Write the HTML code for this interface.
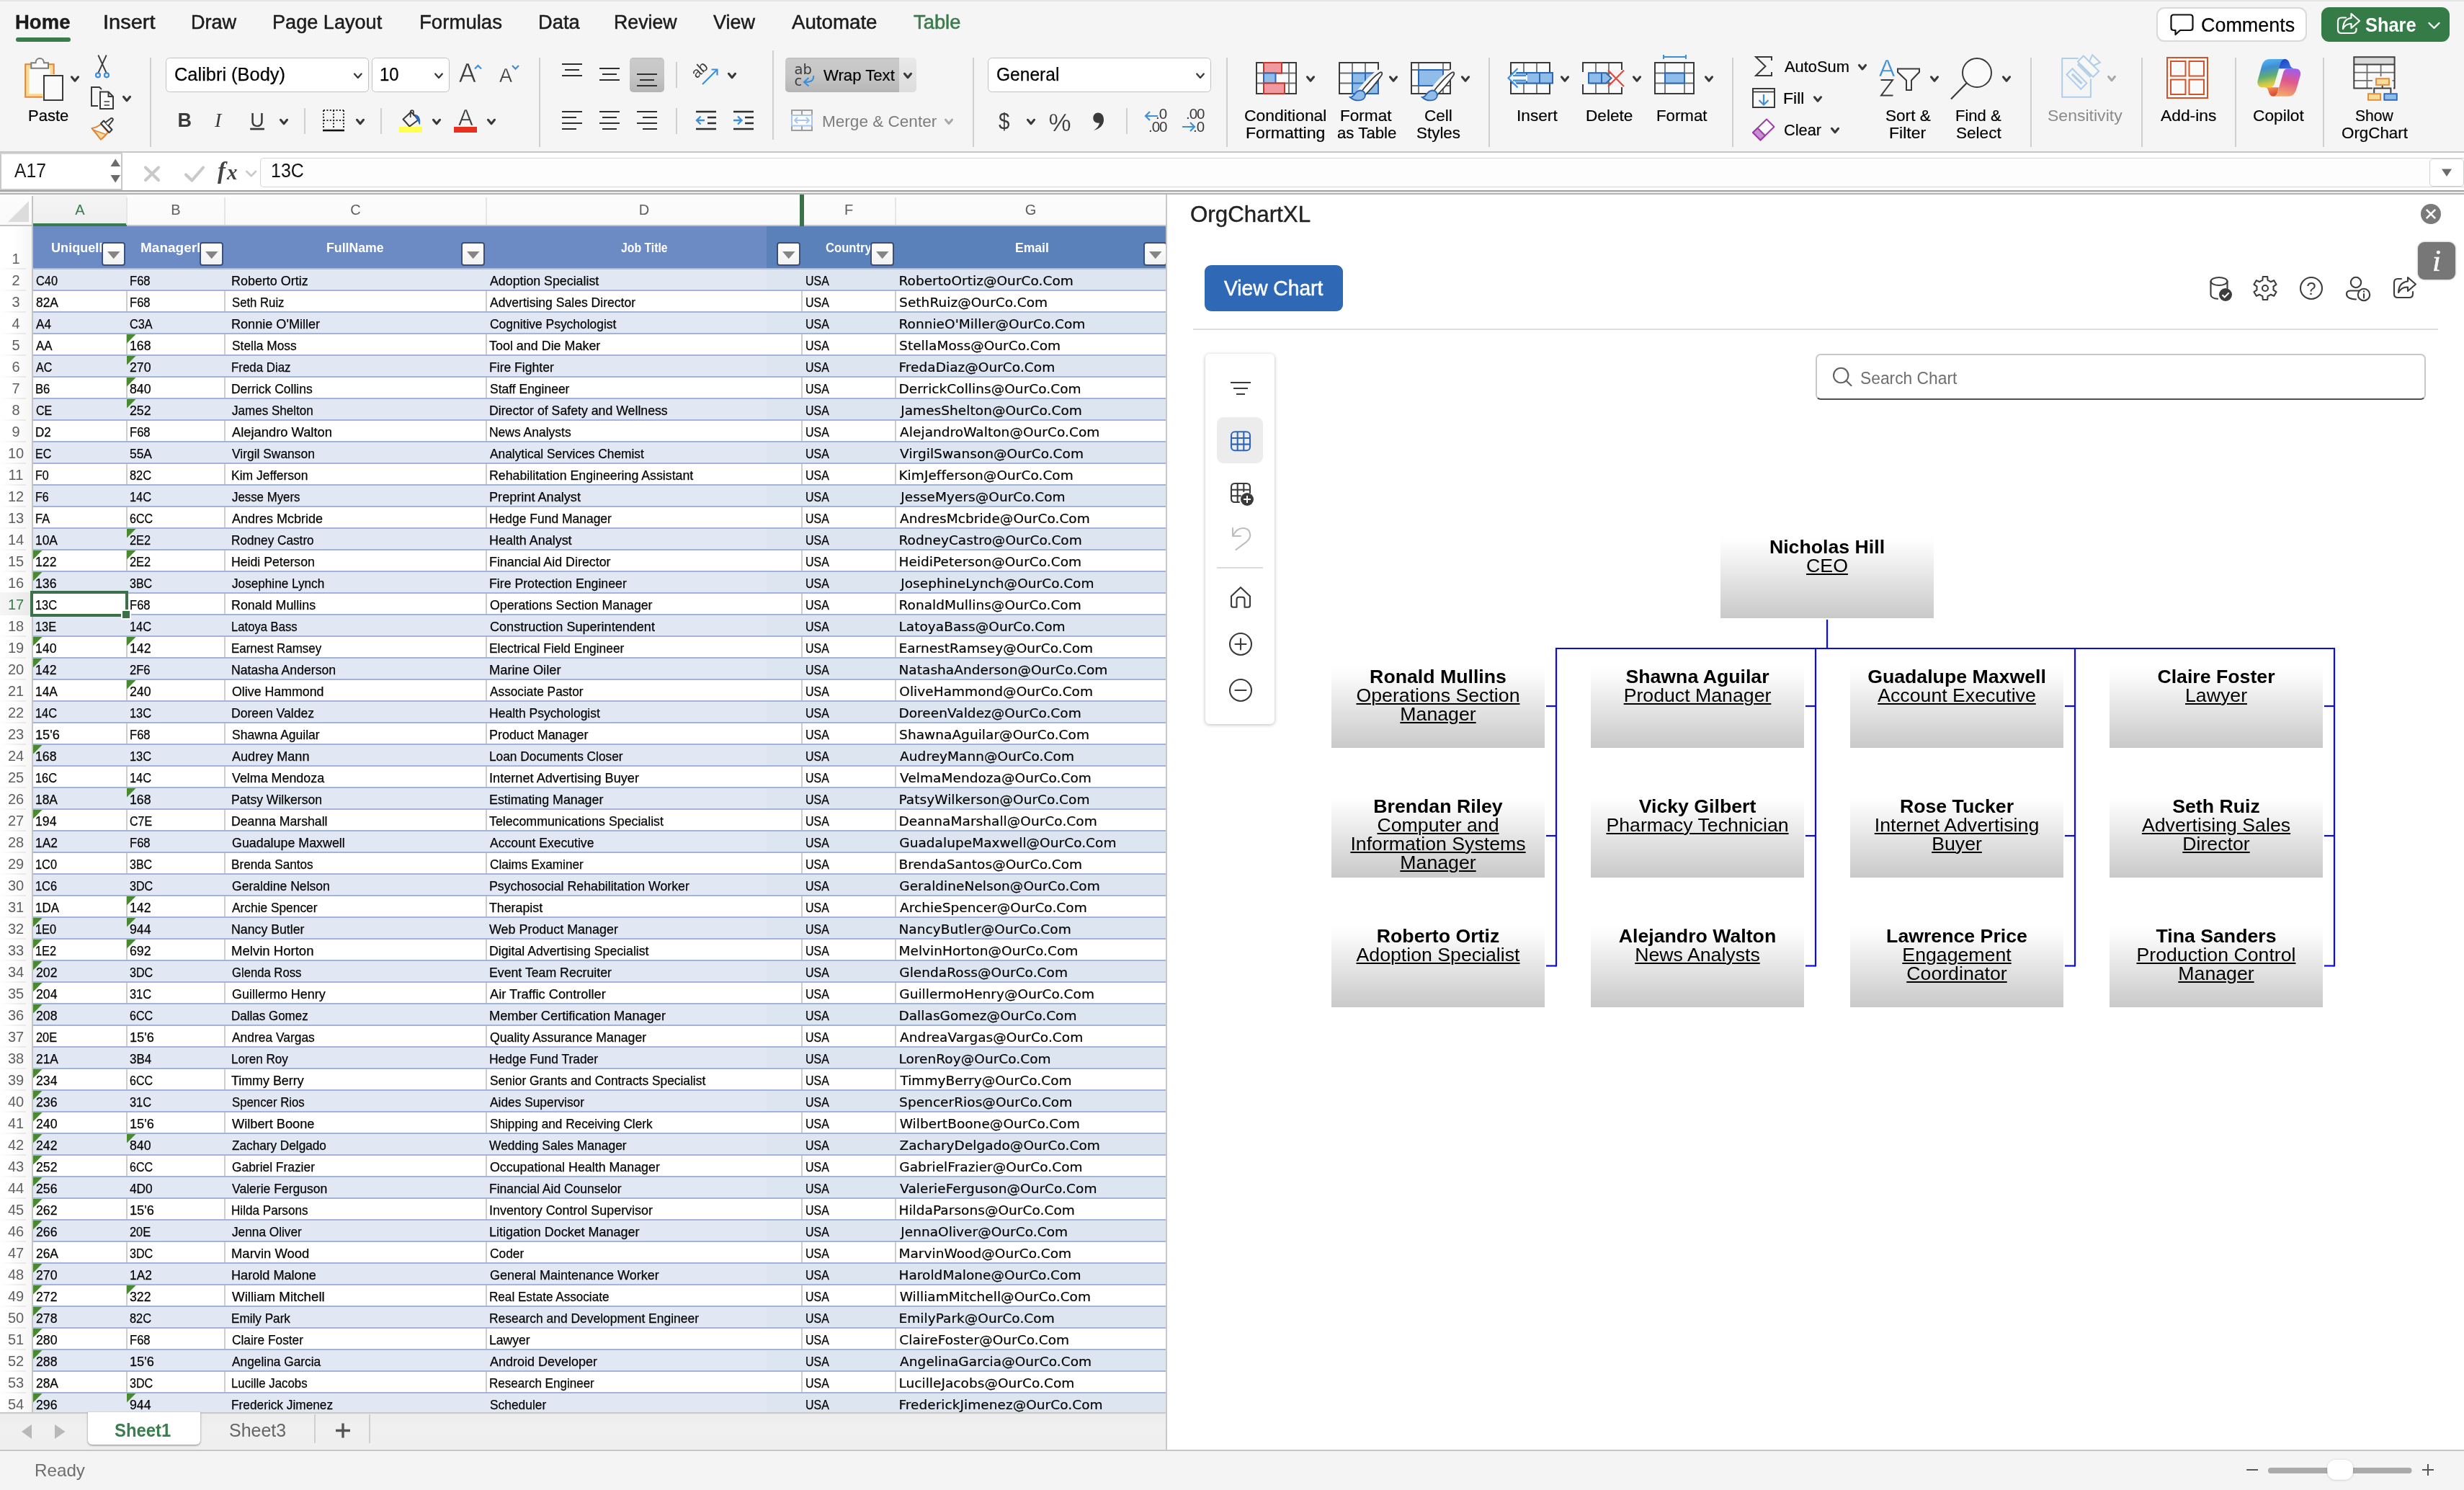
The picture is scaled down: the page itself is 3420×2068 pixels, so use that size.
<!DOCTYPE html>
<html lang="en"><head><meta charset="utf-8"><title>OrgChartXL - Excel</title>
<style>html,body{margin:0;padding:0;}body{width:3420px;height:2068px;position:relative;overflow:hidden;background:#fff;font-family:"Liberation Sans",sans-serif;}#app{position:absolute;left:0;top:0;width:3420px;height:2068px;overflow:hidden;will-change:transform;}svg{display:block;overflow:visible}</style></head>
<body>
<div id="app">
<div style="position:absolute;left:0px;top:0px;width:3420px;height:210px;background:#f5f5f5;"></div>
<div style="position:absolute;left:0px;top:0px;width:3420px;height:2px;background:#e6e6e6;"></div>
<div style="position:absolute;top:18.000px;font-size:27px;line-height:27px;color:#1c1c1c;white-space:nowrap;font-weight:700;left:21.26px;-webkit-text-stroke:0.4px #1c1c1c;transform:scaleX(1.0190);transform-origin:0 50%;">Home</div>
<div style="position:absolute;top:18.000px;font-size:27px;line-height:27px;color:#1c1c1c;white-space:nowrap;left:142.69px;-webkit-text-stroke:0.5px #1c1c1c;transform:scaleX(1.0734);transform-origin:0 50%;">Insert</div>
<div style="position:absolute;top:18.000px;font-size:27px;line-height:27px;color:#1c1c1c;white-space:nowrap;left:265.24px;-webkit-text-stroke:0.5px #1c1c1c;transform:scaleX(1.0019);transform-origin:0 50%;">Draw</div>
<div style="position:absolute;top:18.000px;font-size:27px;line-height:27px;color:#1c1c1c;white-space:nowrap;left:378.03px;-webkit-text-stroke:0.5px #1c1c1c;transform:scaleX(1.0040);transform-origin:0 50%;">Page Layout</div>
<div style="position:absolute;top:18.000px;font-size:27px;line-height:27px;color:#1c1c1c;white-space:nowrap;left:581.79px;-webkit-text-stroke:0.5px #1c1c1c;transform:scaleX(1.0221);transform-origin:0 50%;">Formulas</div>
<div style="position:absolute;top:18.000px;font-size:27px;line-height:27px;color:#1c1c1c;white-space:nowrap;left:747.22px;-webkit-text-stroke:0.5px #1c1c1c;transform:scaleX(1.0108);transform-origin:0 50%;">Data</div>
<div style="position:absolute;top:18.000px;font-size:27px;line-height:27px;color:#1c1c1c;white-space:nowrap;left:852.26px;-webkit-text-stroke:0.5px #1c1c1c;transform:scaleX(0.9896);transform-origin:0 50%;">Review</div>
<div style="position:absolute;top:18.000px;font-size:27px;line-height:27px;color:#1c1c1c;white-space:nowrap;left:990.07px;-webkit-text-stroke:0.5px #1c1c1c;transform:scaleX(0.9997);transform-origin:0 50%;">View</div>
<div style="position:absolute;top:18.000px;font-size:27px;line-height:27px;color:#1c1c1c;white-space:nowrap;left:1099.40px;-webkit-text-stroke:0.5px #1c1c1c;transform:scaleX(1.0250);transform-origin:0 50%;">Automate</div>
<div style="position:absolute;top:18.000px;font-size:27px;line-height:27px;color:#3a7c4c;white-space:nowrap;left:1267.60px;-webkit-text-stroke:0.6px #3a7c4c;transform:scaleX(1.0131);transform-origin:0 50%;">Table</div>
<div style="position:absolute;left:22px;top:52px;width:76px;height:6px;background:#3a7c4c;border-radius:3px;"></div>
<div style="position:absolute;left:2993px;top:10px;width:209px;height:48px;box-sizing:border-box;border:2px solid #d9d9d9;border-radius:11px;background:#fff;"></div>
<div style="position:absolute;top:21.000px;font-size:27.5px;line-height:27.5px;color:#000;white-space:nowrap;left:3054.50px;-webkit-text-stroke:0.2px #000;transform:scaleX(0.9791);transform-origin:0 50%;">Comments</div>
<div style="position:absolute;left:3222px;top:10px;width:178px;height:48px;border-radius:11px;background:#347b48;"></div>
<div style="position:absolute;top:21.000px;font-size:27.5px;line-height:27.5px;color:#fff;white-space:nowrap;font-weight:700;left:3283.24px;transform:scaleX(0.9242);transform-origin:0 50%;">Share</div>
<div style="position:absolute;left:208px;top:80px;width:2px;height:124px;background:#d0d0d0;"></div>
<div style="position:absolute;left:422px;top:150px;width:2px;height:36px;background:#d0d0d0;"></div>
<div style="position:absolute;left:528px;top:150px;width:2px;height:36px;background:#d0d0d0;"></div>
<div style="position:absolute;left:748px;top:80px;width:2px;height:124px;background:#d0d0d0;"></div>
<div style="position:absolute;left:938px;top:86px;width:2px;height:36px;background:#d0d0d0;"></div>
<div style="position:absolute;left:938px;top:150px;width:2px;height:36px;background:#d0d0d0;"></div>
<div style="position:absolute;left:1072px;top:70px;width:2px;height:124px;background:#d0d0d0;"></div>
<div style="position:absolute;left:1350px;top:80px;width:2px;height:124px;background:#d0d0d0;"></div>
<div style="position:absolute;left:1563px;top:150px;width:2px;height:36px;background:#d0d0d0;"></div>
<div style="position:absolute;left:1702px;top:80px;width:2px;height:124px;background:#d0d0d0;"></div>
<div style="position:absolute;left:2066px;top:80px;width:2px;height:124px;background:#d0d0d0;"></div>
<div style="position:absolute;left:2404px;top:80px;width:2px;height:124px;background:#d0d0d0;"></div>
<div style="position:absolute;left:2818px;top:80px;width:2px;height:124px;background:#d0d0d0;"></div>
<div style="position:absolute;left:2972px;top:80px;width:2px;height:124px;background:#d0d0d0;"></div>
<div style="position:absolute;left:3102px;top:80px;width:2px;height:124px;background:#d0d0d0;"></div>
<div style="position:absolute;left:3224px;top:80px;width:2px;height:124px;background:#d0d0d0;"></div>
<div style="position:absolute;left:230px;top:80px;width:282px;height:48px;box-sizing:border-box;border:1.5px solid #c2c2c2;border-radius:5.5px;background:#fff;"></div>
<div style="position:absolute;left:516px;top:80px;width:108px;height:48px;box-sizing:border-box;border:1.5px solid #c2c2c2;border-radius:5.5px;background:#fff;"></div>
<div style="position:absolute;left:1371px;top:80px;width:310px;height:48px;box-sizing:border-box;border:1.5px solid #c2c2c2;border-radius:5.5px;background:#fff;"></div>
<div style="position:absolute;top:91.000px;font-size:25px;line-height:25px;color:#000;white-space:nowrap;left:242.00px;-webkit-text-stroke:0.25px #000;transform:scaleX(1.0170);transform-origin:0 50%;">Calibri (Body)</div>
<div style="position:absolute;top:91.000px;font-size:25px;line-height:25px;color:#000;white-space:nowrap;left:527.09px;-webkit-text-stroke:0.25px #000;transform:scaleX(0.9540);transform-origin:0 50%;">10</div>
<div style="position:absolute;top:91.000px;font-size:25px;line-height:25px;color:#000;white-space:nowrap;left:1383.05px;-webkit-text-stroke:0.25px #000;transform:scaleX(0.9820);transform-origin:0 50%;">General</div>
<div style="position:absolute;left:874px;top:80px;width:48px;height:48px;border-radius:5px;background:linear-gradient(#bdbdbd 0,#cacaca 6%,#c6c6c6 50%,#b5b5b5 100%);"></div>
<div style="position:absolute;left:1090px;top:80px;width:182px;height:48px;border-radius:5px;background:linear-gradient(#e9e9e9,#dcdcdc);"></div>
<div style="position:absolute;left:1090px;top:80px;width:158px;height:48px;border-radius:5px 0 0 5px;background:linear-gradient(#bdbdbd 0,#cacaca 6%,#c6c6c6 50%,#b5b5b5 100%);"></div>
<div style="position:absolute;top:94.000px;font-size:22px;line-height:22px;color:#000;white-space:nowrap;left:1143.14px;-webkit-text-stroke:0.2px #000;transform:scaleX(1.0061);transform-origin:0 50%;">Wrap Text</div>
<div style="position:absolute;top:158.000px;font-size:22px;line-height:22px;color:#7d7d7d;white-space:nowrap;left:1141.20px;transform:scaleX(1.0253);transform-origin:0 50%;">Merge &amp; Center</div>
<div style="position:absolute;top:150.000px;font-size:22px;line-height:22px;color:#000;white-space:nowrap;left:39.49px;-webkit-text-stroke:0.2px #000;transform:scaleX(1.0007);transform-origin:0 50%;">Paste</div>
<div style="position:absolute;top:150.000px;font-size:22px;line-height:22px;color:#000;white-space:nowrap;left:1726.91px;-webkit-text-stroke:0.2px #000;transform:scaleX(1.0394);transform-origin:0 50%;">Conditional</div>
<div style="position:absolute;top:174.000px;font-size:22px;line-height:22px;color:#000;white-space:nowrap;left:1728.80px;-webkit-text-stroke:0.2px #000;transform:scaleX(1.0503);transform-origin:0 50%;">Formatting</div>
<div style="position:absolute;top:150.000px;font-size:22px;line-height:22px;color:#000;white-space:nowrap;left:1860.44px;-webkit-text-stroke:0.2px #000;transform:scaleX(1.0257);transform-origin:0 50%;">Format</div>
<div style="position:absolute;top:174.000px;font-size:22px;line-height:22px;color:#000;white-space:nowrap;left:1856.36px;-webkit-text-stroke:0.2px #000;transform:scaleX(1.0108);transform-origin:0 50%;">as Table</div>
<div style="position:absolute;top:150.000px;font-size:22px;line-height:22px;color:#000;white-space:nowrap;left:1977.13px;-webkit-text-stroke:0.2px #000;transform:scaleX(1.0224);transform-origin:0 50%;">Cell</div>
<div style="position:absolute;top:174.000px;font-size:22px;line-height:22px;color:#000;white-space:nowrap;left:1966.04px;-webkit-text-stroke:0.2px #000;transform:scaleX(1.0191);transform-origin:0 50%;">Styles</div>
<div style="position:absolute;top:150.000px;font-size:22px;line-height:22px;color:#000;white-space:nowrap;left:2105.21px;-webkit-text-stroke:0.2px #000;transform:scaleX(1.0301);transform-origin:0 50%;">Insert</div>
<div style="position:absolute;top:150.000px;font-size:22px;line-height:22px;color:#000;white-space:nowrap;left:2201.44px;-webkit-text-stroke:0.2px #000;transform:scaleX(1.0275);transform-origin:0 50%;">Delete</div>
<div style="position:absolute;top:150.000px;font-size:22px;line-height:22px;color:#000;white-space:nowrap;left:2299.47px;-webkit-text-stroke:0.2px #000;transform:scaleX(1.0109);transform-origin:0 50%;">Format</div>
<div style="position:absolute;top:82.000px;font-size:22px;line-height:22px;color:#000;white-space:nowrap;left:2477.25px;-webkit-text-stroke:0.2px #000;transform:scaleX(0.9933);transform-origin:0 50%;">AutoSum</div>
<div style="position:absolute;top:126.000px;font-size:22px;line-height:22px;color:#000;white-space:nowrap;left:2475.41px;-webkit-text-stroke:0.2px #000;transform:scaleX(1.0459);transform-origin:0 50%;">Fill</div>
<div style="position:absolute;top:170.000px;font-size:22px;line-height:22px;color:#000;white-space:nowrap;left:2476.16px;-webkit-text-stroke:0.2px #000;transform:scaleX(0.9894);transform-origin:0 50%;">Clear</div>
<div style="position:absolute;top:150.000px;font-size:22px;line-height:22px;color:#000;white-space:nowrap;left:2617.03px;-webkit-text-stroke:0.2px #000;transform:scaleX(1.0263);transform-origin:0 50%;">Sort &amp;</div>
<div style="position:absolute;top:174.000px;font-size:22px;line-height:22px;color:#000;white-space:nowrap;left:2622.41px;-webkit-text-stroke:0.2px #000;transform:scaleX(1.0481);transform-origin:0 50%;">Filter</div>
<div style="position:absolute;top:150.000px;font-size:22px;line-height:22px;color:#000;white-space:nowrap;left:2714.49px;-webkit-text-stroke:0.2px #000;transform:scaleX(1.0002);transform-origin:0 50%;">Find &amp;</div>
<div style="position:absolute;top:174.000px;font-size:22px;line-height:22px;color:#000;white-space:nowrap;left:2715.23px;-webkit-text-stroke:0.2px #000;transform:scaleX(1.0259);transform-origin:0 50%;">Select</div>
<div style="position:absolute;top:150.000px;font-size:22px;line-height:22px;color:#000;white-space:nowrap;left:2999.25px;-webkit-text-stroke:0.2px #000;transform:scaleX(1.0364);transform-origin:0 50%;">Add-ins</div>
<div style="position:absolute;top:150.000px;font-size:22px;line-height:22px;color:#000;white-space:nowrap;left:3127.11px;-webkit-text-stroke:0.2px #000;transform:scaleX(1.0341);transform-origin:0 50%;">Copilot</div>
<div style="position:absolute;top:150.000px;font-size:22px;line-height:22px;color:#000;white-space:nowrap;left:3269.30px;-webkit-text-stroke:0.2px #000;transform:scaleX(0.9608);transform-origin:0 50%;">Show</div>
<div style="position:absolute;top:174.000px;font-size:22px;line-height:22px;color:#000;white-space:nowrap;left:3249.94px;-webkit-text-stroke:0.2px #000;transform:scaleX(1.0166);transform-origin:0 50%;">OrgChart</div>
<div style="position:absolute;top:150.000px;font-size:22px;line-height:22px;color:#8b8b8b;white-space:nowrap;left:2842.36px;transform:scaleX(1.0468);transform-origin:0 50%;">Sensitivity</div>
<svg style="position:absolute;left:0;top:0;pointer-events:none" width="3420" height="212" viewBox="0 0 3420 212"><rect x="35.2" y="89.2" width="39.5" height="45.5" fill="#f6dc96" stroke="#e0863c" stroke-width="2" rx="0" /><rect x="40.5" y="95" width="29" height="35" fill="#fafafa" stroke="none" stroke-width="0" rx="0" /><path d="M43.3,94.7V87.2H49.5C49.5,83.5 52,81 55.2,81C58.4,81 61,83.5 61,87.2H67V94.7Z" stroke="#7c7c7c" stroke-width="2" fill="#fafafa" /><rect x="59" y="103" width="30" height="38" fill="#f5f5f5" stroke="none" stroke-width="0" rx="0" /><rect x="61" y="105" width="26" height="34" fill="#fafafa" stroke="#3a3a3a" stroke-width="2" rx="0" /><polyline points="99.5,106.8 104.0,112.2 108.5,106.8" fill="none" stroke="#383838" stroke-width="3.1" stroke-linecap="round" stroke-linejoin="round"/><path d="M136.3,76.5L147.8,101.5M147.7,76.5L136.2,101.5" stroke="#3a3a3a" stroke-width="1.8" fill="none" /><circle cx="136" cy="104.3" r="3" stroke="#3e8ed8" stroke-width="2.2" fill="none"/><circle cx="148" cy="104.3" r="3" stroke="#3e8ed8" stroke-width="2.2" fill="none"/><path d="M141,124L138,121H127V147H136" stroke="#3a3a3a" stroke-width="2" fill="none" /><path d="M139,127.5H150.5L157,134V151H139Z" stroke="#3a3a3a" stroke-width="2" fill="#fafafa" /><path d="M150.5,127.5V134H157" stroke="#3a3a3a" stroke-width="2" fill="none" /><path d="M144.5,141H152M144.5,146H152" stroke="#6e6e6e" stroke-width="1.8" fill="none" /><polyline points="171.5,134.3 176.0,139.7 180.5,134.3" fill="none" stroke="#383838" stroke-width="3.1" stroke-linecap="round" stroke-linejoin="round"/><path d="M127.5,178C133,177 137,175 140.5,172L150,183.5C147,187 143.5,191 140,193.5Z" stroke="#e0863c" stroke-width="2" fill="#fafafa" stroke-linejoin="round"/><path d="M130,180.5L147,186.5L140,193.5Z" stroke="#e0863c" stroke-width="1.5" fill="#f6dc96" /><path d="M140,171.5L144,167.5L155.5,180L151.5,184Z" stroke="#3a3a3a" stroke-width="2" fill="#fafafa" stroke-linejoin="round"/><path d="M146.5,170L154,164.2C155.5,163.3 157.6,165.2 156.6,166.8L150.5,174.5" stroke="#3a3a3a" stroke-width="2" fill="#fafafa" stroke-linejoin="round"/><polyline points="492.0,102.5 496.8,107.9 501.6,102.5" fill="none" stroke="#383838" stroke-width="2.3" stroke-linecap="round" stroke-linejoin="round"/><polyline points="604.2,102.5 609.0,107.9 613.8,102.5" fill="none" stroke="#383838" stroke-width="2.3" stroke-linecap="round" stroke-linejoin="round"/><text x="246.5" y="175.7" font-size="27" fill="#3a3a3a" font-weight="700" text-anchor="start" font-family="Liberation Sans"  >B</text><text x="298" y="175.7" font-size="28" fill="#3a3a3a" font-weight="400" text-anchor="start" font-family="Liberation Serif" font-style="italic" >I</text><text x="347.2" y="175.7" font-size="27" fill="#3a3a3a" font-weight="400" text-anchor="start" font-family="Liberation Sans"  text-decoration="underline">U</text><path d="M348,179H367" stroke="#3a3a3a" stroke-width="2" fill="none" /><polyline points="389.5,166.3 394.0,171.7 398.5,166.3" fill="none" stroke="#383838" stroke-width="3.1" stroke-linecap="round" stroke-linejoin="round"/><path d="M449,153H477M449,167H477M449,153V179M463,153V179M477,153V179" stroke="#222" stroke-width="2" fill="none" stroke-dasharray="2 2.4"/><path d="M448,181H478" stroke="#111" stroke-width="2.6" fill="none" /><polyline points="495.5,166.3 500.0,171.7 504.5,166.3" fill="none" stroke="#383838" stroke-width="3.1" stroke-linecap="round" stroke-linejoin="round"/><path d="M569.7,163V155.2C569.7,152.3 574,152.3 574,155.2V160.5" stroke="#3a3a3a" stroke-width="1.7" fill="none" /><path d="M559.5,165.5L570.5,155.5L581,166L568.5,175.5Z" stroke="#3a3a3a" stroke-width="2" fill="none" stroke-linejoin="round"/><path d="M576.5,159.5C581,160 583.5,165 582.5,172.5C581,168 580,166 577.5,163.5Z" stroke="#2b68b8" stroke-width="1.2" fill="#2b68b8" /><rect x="554" y="176" width="32" height="8" fill="#ffff4d" stroke="none" stroke-width="0" rx="0" /><polyline points="601.5,166.3 606.0,171.7 610.5,166.3" fill="none" stroke="#383838" stroke-width="3.1" stroke-linecap="round" stroke-linejoin="round"/><text x="646.3" y="174" font-size="31" fill="#3a3a3a" font-weight="400" text-anchor="middle" font-family="Liberation Sans"  stroke="#f5f5f5" stroke-width="0.5">A</text><rect x="630" y="176" width="32" height="8" fill="#e8301f" stroke="none" stroke-width="0" rx="0" /><polyline points="677.5,166.3 682.0,171.7 686.5,166.3" fill="none" stroke="#383838" stroke-width="3.1" stroke-linecap="round" stroke-linejoin="round"/><text x="648.8" y="113.6" font-size="36" fill="#3a3a3a" font-weight="400" text-anchor="middle" font-family="Liberation Sans"  stroke="#f5f5f5" stroke-width="0.7">A</text><text x="702" y="113.6" font-size="27" fill="#3a3a3a" font-weight="400" text-anchor="middle" font-family="Liberation Sans"  stroke="#f5f5f5" stroke-width="0.3">A</text><polyline points="659,95.6 663.5,91 668,95.6" fill="none" stroke="#3e8ed8" stroke-width="2.2"/><polyline points="711,91 715.5,95.6 720,91" fill="none" stroke="#3e8ed8" stroke-width="2.2"/><path d="M780,89H808M784,97H804M780,105H808" stroke="#2f2f2f" stroke-width="2.1" fill="none" /><path d="M832,95H860M836,103H856M832,111H860" stroke="#2f2f2f" stroke-width="2.1" fill="none" /><path d="M884,103H912M888,111H908M884,119H912" stroke="#2f2f2f" stroke-width="2.1" fill="none" /><path d="M780,155H808M780,163H800M780,171H808M780,179H800" stroke="#2f2f2f" stroke-width="2.1" fill="none" /><path d="M832,155H860M836,163H856M832,171H860M836,179H856" stroke="#2f2f2f" stroke-width="2.1" fill="none" /><path d="M884,155H912M892,163H912M884,171H912M892,179H912" stroke="#2f2f2f" stroke-width="2.1" fill="none" /><g transform="translate(967,109.5) rotate(-42)"><text x="0" y="0" font-size="20.5" fill="#3a3a3a" font-weight="400" text-anchor="start" font-family="Liberation Sans"  >ab</text></g><path d="M975,117L995,97" stroke="#3e8ed8" stroke-width="2.2" fill="none" /><path d="M987.5,96.5H995.5V104.5" stroke="#3e8ed8" stroke-width="2.2" fill="none" /><polyline points="1011.5,102.3 1016.0,107.7 1020.5,102.3" fill="none" stroke="#383838" stroke-width="3.1" stroke-linecap="round" stroke-linejoin="round"/><path d="M966,155H994M982,163H994M982,171H994M966,179H994" stroke="#2f2f2f" stroke-width="2.3" fill="none" /><path d="M978,167H967.5M972.5,161.5L967,167L972.5,172.5" stroke="#3e8ed8" stroke-width="2.3" fill="none" /><path d="M1018,155H1046M1034,163H1046M1034,171H1046M1018,179H1046" stroke="#2f2f2f" stroke-width="2.3" fill="none" /><path d="M1018,167H1029M1024,161.5L1029.5,167L1024,172.5" stroke="#3e8ed8" stroke-width="2.3" fill="none" /><text x="1102.5" y="103" font-size="19.5" fill="#3a3a3a" font-weight="400" text-anchor="start" font-family="DejaVu Sans"  >ab</text><text x="1102.5" y="118.5" font-size="19.5" fill="#3a3a3a" font-weight="400" text-anchor="start" font-family="DejaVu Sans"  >c</text><path d="M1129,105C1130,111.5 1126,114 1117,114M1122.5,108L1116,114L1122.5,119.5" stroke="#3e8ed8" stroke-width="2.2" fill="none" /><polyline points="1255.5,102.3 1260.0,107.7 1264.5,102.3" fill="none" stroke="#383838" stroke-width="3.1" stroke-linecap="round" stroke-linejoin="round"/><path d="M1099,153H1127V181H1099ZM1113,153V160M1113,174V181" stroke="#9d9d9d" stroke-width="2" fill="none" /><rect x="1099" y="160" width="28" height="14.5" fill="#fdfdfd" stroke="#a9c7e8" stroke-width="2" rx="0" /><path d="M1103,167H1123M1107,163L1103,167L1107,171M1119,163L1123,167L1119,171" stroke="#a9c7e8" stroke-width="2" fill="none" /><polyline points="1312.5,166.2 1317.0,171.5 1321.5,166.2" fill="none" stroke="#a8a8a8" stroke-width="3.0" stroke-linecap="round" stroke-linejoin="round"/><polyline points="1661.2,102.5 1666.0,107.9 1670.8,102.5" fill="none" stroke="#383838" stroke-width="2.3" stroke-linecap="round" stroke-linejoin="round"/><text x="1393.8" y="179" font-size="31" fill="#3a3a3a" font-weight="400" text-anchor="middle" font-family="Liberation Sans"  textLength="15.5" lengthAdjust="spacingAndGlyphs">$</text><polyline points="1426.5,166.3 1431.0,171.7 1435.5,166.3" fill="none" stroke="#383838" stroke-width="3.1" stroke-linecap="round" stroke-linejoin="round"/><text x="1471" y="182.3" font-size="35" fill="#3a3a3a" font-weight="400" text-anchor="middle" font-family="Liberation Sans"  stroke="#f5f5f5" stroke-width="0.25">%</text><path d="M1524,156.5C1529.5,156.5 1532,161 1532,166C1532,173.5 1527,178.5 1518,181C1522.5,178 1525.5,174.5 1526,170.5C1521,171.5 1517.3,168.3 1517.3,164C1517.3,159.8 1520,156.5 1524,156.5Z" stroke="none" stroke-width="0" fill="#3a3a3a" /><text x="1604" y="164.5" font-size="20.5" fill="#3a3a3a" font-weight="400" text-anchor="start" font-family="Liberation Sans"  letter-spacing="-1">.0</text><text x="1594" y="182.5" font-size="20.5" fill="#3a3a3a" font-weight="400" text-anchor="start" font-family="Liberation Sans"  letter-spacing="-1">.00</text><path d="M1607,161H1590.5M1596,155L1590,161L1596,167" stroke="#3e8ed8" stroke-width="2.2" fill="none" /><text x="1646" y="164.5" font-size="20.5" fill="#3a3a3a" font-weight="400" text-anchor="start" font-family="Liberation Sans"  letter-spacing="-1">.00</text><text x="1656" y="182.5" font-size="20.5" fill="#3a3a3a" font-weight="400" text-anchor="start" font-family="Liberation Sans"  letter-spacing="-1">.0</text><path d="M1641,176H1657.5M1652,170L1658,176L1652,182" stroke="#3e8ed8" stroke-width="2.2" fill="none" /><rect x="1744" y="87" width="55" height="43" fill="#fafafa" stroke="none" stroke-width="0" rx="0" /><path d="M1754,87V130M1789,87V130M1744,101.5H1799M1744,115.5H1799" stroke="#6e6e6e" stroke-width="1.8" fill="none" /><rect x="1744" y="87" width="55" height="43" fill="none" stroke="#3a3a3a" stroke-width="2" rx="0" /><rect x="1754" y="87" width="25" height="14.5" fill="#f09aa0" stroke="#c63527" stroke-width="2" rx="0" /><rect x="1754" y="101.5" width="16.5" height="14" fill="#8fbce8" stroke="#2b68b8" stroke-width="2" rx="0" /><rect x="1754" y="115.5" width="29" height="14.5" fill="#f09aa0" stroke="#c63527" stroke-width="2" rx="0" /><polyline points="1814.5,106.8 1819.0,112.2 1823.5,106.8" fill="none" stroke="#383838" stroke-width="3.1" stroke-linecap="round" stroke-linejoin="round"/><rect x="1859" y="87" width="54" height="43" fill="#fafafa" stroke="none" stroke-width="0" rx="0" /><path d="M1877,87V130M1895,87V130M1859,101.5H1913M1859,115.5H1913" stroke="#6e6e6e" stroke-width="1.8" fill="none" /><rect x="1859" y="87" width="54" height="43" fill="none" stroke="#3a3a3a" stroke-width="2" rx="0" /><rect x="1877" y="101.5" width="36" height="28.5" fill="#8fbce8" stroke="#2b68b8" stroke-width="2" rx="0" /><path d="M1895,101.5V130M1877,115.5H1913" stroke="#2b68b8" stroke-width="2" fill="none" /><path d="M1886,132C1895,120 1907,106 1917,101" stroke="#f5f5f5" stroke-width="11" fill="none" stroke-linecap="round"/><path d="M1887.5,130C1896,118 1909,104 1915.5,100.5C1918.5,99.5 1919,102 1917.5,104.5C1911,114 1901,126 1892.5,134Z" stroke="#3a3a3a" stroke-width="1.8" fill="#fff" /><path d="M1874,135C1880,135 1880,126 1888,125.5C1893,125.5 1896,130 1894.5,134.5C1892,140.5 1881,141.5 1874,135Z" stroke="#2b68b8" stroke-width="1.8" fill="#8fbce8" /><polyline points="1929.5,106.8 1934.0,112.2 1938.5,106.8" fill="none" stroke="#383838" stroke-width="3.1" stroke-linecap="round" stroke-linejoin="round"/><rect x="1959" y="87" width="54" height="43" fill="#fafafa" stroke="none" stroke-width="0" rx="0" /><path d="M1969,87V130M2003,87V130M1959,97H2013M1959,119H2013" stroke="#6e6e6e" stroke-width="1.8" fill="none" /><rect x="1959" y="87" width="54" height="43" fill="none" stroke="#3a3a3a" stroke-width="2" rx="0" /><rect x="1969" y="97" width="34" height="22" fill="#8fbce8" stroke="#2b68b8" stroke-width="2" rx="0" /><path d="M1986,132C1995,120 2007,106 2017,101" stroke="#f5f5f5" stroke-width="11" fill="none" stroke-linecap="round"/><path d="M1987.5,130C1996,118 2009,104 2015.5,100.5C2018.5,99.5 2019,102 2017.5,104.5C2011,114 2001,126 1992.5,134Z" stroke="#3a3a3a" stroke-width="1.8" fill="#fff" /><path d="M1974,135C1980,135 1980,126 1988,125.5C1993,125.5 1996,130 1994.5,134.5C1992,140.5 1981,141.5 1974,135Z" stroke="#2b68b8" stroke-width="1.8" fill="#8fbce8" /><polyline points="2029.5,106.8 2034.0,112.2 2038.5,106.8" fill="none" stroke="#383838" stroke-width="3.1" stroke-linecap="round" stroke-linejoin="round"/><rect x="2097" y="87" width="54" height="43" fill="#fafafa" stroke="none" stroke-width="0" rx="0" /><path d="M2115,87V130M2133,87V130M2097,101.5H2151M2097,115.5H2151" stroke="#6e6e6e" stroke-width="1.8" fill="none" /><rect x="2097" y="87" width="54" height="43" fill="none" stroke="#3a3a3a" stroke-width="2" rx="0" /><rect x="2103" y="101" width="52" height="14.5" fill="#8fbce8" stroke="#2b68b8" stroke-width="2" rx="0" /><path d="M2119,101V115.5M2137,101V115.5" stroke="#2b68b8" stroke-width="2" fill="none" /><path d="M2120,104.2H2103L2106,97L2093,108.3L2106,119.6L2103,112.4H2120Z" stroke="none" stroke-width="0" fill="#f5f5f5" /><path d="M2118,105H2100M2118,111.6H2100M2106.5,95L2093.5,108.3L2106.5,121.6" stroke="#3e8ed8" stroke-width="2.2" fill="none" /><polyline points="2167.5,106.8 2172.0,112.2 2176.5,106.8" fill="none" stroke="#383838" stroke-width="3.1" stroke-linecap="round" stroke-linejoin="round"/><rect x="2197" y="87" width="54" height="43" fill="#fafafa" stroke="none" stroke-width="0" rx="0" /><path d="M2215,87V130M2233,87V130M2197,101.5H2251M2197,115.5H2251" stroke="#6e6e6e" stroke-width="1.8" fill="none" /><rect x="2197" y="87" width="54" height="43" fill="none" stroke="#3a3a3a" stroke-width="2" rx="0" /><rect x="2195" y="100" width="12" height="17" fill="#f5f5f5" stroke="none" stroke-width="0" rx="0" /><rect x="2236" y="97" width="18" height="24" fill="#f5f5f5" stroke="none" stroke-width="0" rx="0" /><path d="M2205,101.2H2229L2236.5,108.4L2229,115.6H2205Z" stroke="#2b68b8" stroke-width="2" fill="#8fbce8" /><path d="M2223,101.2V115.6" stroke="#2b68b8" stroke-width="2" fill="none" /><path d="M2232,97.5L2254,120M2254,97.5L2232,120" stroke="#e0483e" stroke-width="2.2" fill="none" /><polyline points="2267.5,106.8 2272.0,112.2 2276.5,106.8" fill="none" stroke="#383838" stroke-width="3.1" stroke-linecap="round" stroke-linejoin="round"/><rect x="2297" y="87" width="54" height="43" fill="#fafafa" stroke="none" stroke-width="0" rx="0" /><path d="M2311,87V130M2338,87V130M2297,101.5H2351M2297,115.5H2351" stroke="#6e6e6e" stroke-width="1.8" fill="none" /><rect x="2297" y="87" width="54" height="43" fill="none" stroke="#3a3a3a" stroke-width="2" rx="0" /><rect x="2311" y="101.5" width="27" height="14" fill="#8fbce8" stroke="#2b68b8" stroke-width="2" rx="0" /><path d="M2309,79H2340M2309,76V82M2340,76V82" stroke="#3e8ed8" stroke-width="2" fill="none" /><polyline points="2367.5,106.8 2372.0,112.2 2376.5,106.8" fill="none" stroke="#383838" stroke-width="3.1" stroke-linecap="round" stroke-linejoin="round"/><path d="M2459,84V79H2437L2450.5,92L2437,105H2459V100" stroke="#3a3a3a" stroke-width="2" fill="none" /><polyline points="2580.5,90.5 2585.0,95.9 2589.5,90.5" fill="none" stroke="#383838" stroke-width="3.1" stroke-linecap="round" stroke-linejoin="round"/><rect x="2433" y="123" width="30" height="26" fill="#fafafa" stroke="#3a3a3a" stroke-width="2" rx="0" /><path d="M2433,127.5H2463" stroke="#3a3a3a" stroke-width="1.8" fill="none" /><path d="M2448,131V145M2441.5,139L2448,145.5L2454.5,139" stroke="#3e8ed8" stroke-width="2.2" fill="none" /><polyline points="2518.5,134.8 2523.0,140.2 2527.5,134.8" fill="none" stroke="#383838" stroke-width="3.1" stroke-linecap="round" stroke-linejoin="round"/><path d="M2433,184L2452,165.5L2462.5,176L2443.5,194.5Z" stroke="#9a3fa6" stroke-width="2" fill="#fafafa" stroke-linejoin="round"/><path d="M2433,184L2439.5,177.8L2450,188.3L2443.5,194.5Z" stroke="#9a3fa6" stroke-width="2" fill="#c88fd2" stroke-linejoin="round"/><polyline points="2542.5,178.3 2547.0,183.7 2551.5,178.3" fill="none" stroke="#383838" stroke-width="3.1" stroke-linecap="round" stroke-linejoin="round"/><text x="2619" y="106" font-size="34" fill="#3e8ed8" font-weight="400" text-anchor="middle" font-family="Liberation Sans"  stroke="#f5f5f5" stroke-width="0.6">A</text><path d="M2610.5,111H2627L2611,132.5H2627.5" stroke="#3a3a3a" stroke-width="2" fill="none" /><path d="M2634,95.5H2664V100L2653,111.5V125H2646V111.5L2634,100Z" stroke="#3a3a3a" stroke-width="2" fill="#fafafa" /><polyline points="2680.5,106.8 2685.0,112.2 2689.5,106.8" fill="none" stroke="#383838" stroke-width="3.1" stroke-linecap="round" stroke-linejoin="round"/><circle cx="2744" cy="101" r="20" stroke="#3a3a3a" stroke-width="2" fill="#fafafa"/><path d="M2729.5,115.5L2708,137.5" stroke="#3a3a3a" stroke-width="2.2" fill="none" /><polyline points="2780.5,106.8 2785.0,112.2 2789.5,106.8" fill="none" stroke="#383838" stroke-width="3.1" stroke-linecap="round" stroke-linejoin="round"/><path d="M2884.6,81H2862.2V134.8H2901.9V109.5" stroke="#b1cee9" stroke-width="2" fill="none" /><path d="M2876.5,95.3L2896.4,115.4L2888.3,123.7L2868.5,103.6Z" stroke="#b1cee9" stroke-width="2" fill="none" /><path d="M2876,102.8L2889.5,116" stroke="#b1cee9" stroke-width="3.2" fill="none" /><path d="M2885.6,86.9L2903.9,104.7L2900.7,107.3L2883.5,90.2Z" stroke="#b1cee9" stroke-width="1" fill="#b7d3ec" /><path d="M2891.8,77.5L2913.3,98.8L2905.2,106.8L2884,85.6Z" stroke="#b1cee9" stroke-width="2" fill="#f8f8f8" /><path d="M2904.2,76.2L2914.9,86.7L2905.8,91L2900.1,85.3Z" stroke="#b1cee9" stroke-width="2" fill="#f8f8f8" /><polyline points="2926.5,106.3 2931.0,111.7 2935.5,106.3" fill="none" stroke="#a8a8a8" stroke-width="3.0" stroke-linecap="round" stroke-linejoin="round"/><rect x="3008" y="80" width="56" height="56" fill="#fafafa" stroke="#d0532a" stroke-width="2" rx="0" /><rect x="3013" y="85" width="20.5" height="20.5" fill="none" stroke="#d0532a" stroke-width="2" rx="0" /><rect x="3013" y="110.5" width="20.5" height="20.5" fill="none" stroke="#d0532a" stroke-width="2" rx="0" /><rect x="3038.5" y="85" width="20.5" height="20.5" fill="none" stroke="#d0532a" stroke-width="2" rx="0" /><rect x="3038.5" y="110.5" width="20.5" height="20.5" fill="none" stroke="#d0532a" stroke-width="2" rx="0" /><defs><linearGradient id="cpa" x1="0.3" y1="0" x2="0.5" y2="1"><stop offset="0" stop-color="#55b6f8"/><stop offset="0.3" stop-color="#3f8fd2"/><stop offset="0.6" stop-color="#5fae70"/><stop offset="0.85" stop-color="#cfca48"/><stop offset="1" stop-color="#f8cd3c"/></linearGradient><linearGradient id="cpb" x1="0.6" y1="0" x2="0.4" y2="1"><stop offset="0" stop-color="#a25cec"/><stop offset="0.45" stop-color="#e0588c"/><stop offset="1" stop-color="#f4ab68"/></linearGradient><linearGradient id="cpc" x1="0" y1="0" x2="1" y2="1"><stop offset="0" stop-color="#1b3bc4"/><stop offset="1" stop-color="#3a78e0"/></linearGradient><linearGradient id="cpd" x1="0" y1="0" x2="0.6" y2="1"><stop offset="0" stop-color="#f6a050"/><stop offset="1" stop-color="#d8443a"/></linearGradient></defs><path d="M3166,82.1H3171C3175,82.1 3176.8,84.5 3178,88.5C3179.2,92.5 3180.5,94.9 3185,95.2H3162Z" fill="url(#cpc)"/><path d="M3145,121.3H3163L3160.6,130C3160,132.5 3158,133.7 3155.5,133.7C3151.5,133.7 3150,131 3148.8,127C3147.8,123.7 3147.2,121.6 3143,121.3Z" fill="url(#cpd)"/><path d="M3150,82.1H3171.5C3168.5,82.3 3166.2,84.5 3165,88.5L3157.2,115.5C3156,119.3 3154,121.3 3150,121.3H3141C3135.5,121.3 3132.5,118 3133.6,112L3139,92.5C3141,85.5 3144.5,82.1 3150,82.1Z" fill="url(#cpa)"/><path d="M3176.5,133.7H3155C3158,133.5 3160.3,131.3 3161.5,127.3L3169.3,100.3C3170.5,96.5 3172.5,95.2 3176.5,95.2H3185.5C3191,95.2 3194,98.5 3192.9,104.5L3187.5,123.3C3185.5,130.3 3182,133.7 3176.5,133.7Z" fill="url(#cpb)"/><rect x="3267.3" y="79.2" width="56.3" height="43.3" fill="#fafafa" stroke="none" stroke-width="0" rx="0" /><rect x="3267.3" y="79.2" width="56.3" height="10.4" fill="#dadada" stroke="none" stroke-width="0" rx="0" /><path d="M3267,100.6H3324M3267,111.8H3324M3285.5,89.5V122.5M3304.6,89.5V106" stroke="#6e6e6e" stroke-width="1.8" fill="none" /><path d="M3267,89.4H3324" stroke="#3f3f3f" stroke-width="2" fill="none" /><rect x="3267.3" y="79.2" width="56.3" height="43.3" fill="none" stroke="#3f3f3f" stroke-width="2" rx="0" /><rect x="3293" y="106" width="27.5" height="14" fill="#f5f5f5" stroke="none" stroke-width="0" rx="0" /><rect x="3293" y="120" width="29" height="12" fill="#f5f5f5" stroke="none" stroke-width="0" rx="0" /><path d="M3306.7,118.6V122.5M3295.2,129.3V122.5H3318.4V129.3" stroke="#3f3f3f" stroke-width="2" fill="none" /><rect x="3298" y="109.2" width="18" height="8.6" fill="#f6dc96" stroke="#e08a3c" stroke-width="1.9" rx="0" /><rect x="3287" y="130.2" width="17" height="8.6" fill="#f6dc96" stroke="#e08a3c" stroke-width="1.9" rx="0" /><rect x="3309.3" y="130.2" width="17.5" height="8.6" fill="#8fbce8" stroke="#2b68b8" stroke-width="1.9" rx="0" /><path d="M3017,20.5H3040C3042.3,20.5 3043.5,21.8 3043.5,24V38.5C3043.5,40.8 3042.3,42 3040,42H3026L3019.5,48V42H3017C3014.7,42 3013.5,40.8 3013.5,38.5V24C3013.5,21.8 3014.7,20.5 3017,20.5Z" stroke="#111" stroke-width="2.2" fill="none" stroke-linejoin="round"/><path d="M3256,24.5H3250C3247,24.5 3245,26.5 3245,29.5V41C3245,44 3247,46 3250,46H3265.5C3268.5,46 3270.5,44 3270.5,41V39.5" stroke="#fff" stroke-width="2.2" fill="none" stroke-linecap="round"/><path d="M3263.5,19L3275,29L3263.5,39V33C3258,32.8 3254.5,35 3252,40C3252.3,32 3255.5,25.8 3263.5,25Z" stroke="#fff" stroke-width="2.2" fill="none" stroke-linejoin="round"/><polyline points="3371.5,32.0 3378.5,39.0 3385.5,32.0" fill="none" stroke="#fff" stroke-width="2.4" stroke-linecap="round" stroke-linejoin="round"/></svg>
<div style="position:absolute;left:0px;top:210px;width:3420px;height:60px;background:#fff;"></div>
<div style="position:absolute;left:0px;top:210px;width:3420px;height:2px;background:#c6c6c6;"></div>
<div style="position:absolute;left:0px;top:212px;width:170px;height:52px;box-sizing:border-box;border:2px solid #c9c9c9;border-top:2px solid #d4d4d4;background:#fff;"></div>
<div style="position:absolute;top:224.000px;font-size:27px;line-height:27px;color:#1a1a1a;white-space:nowrap;left:19.80px;transform:scaleX(0.9142);transform-origin:0 50%;">A17</div>
<div style="position:absolute;left:361px;top:219px;width:3059px;height:41px;box-sizing:border-box;border:1.5px solid #d6d6d6;border-right:none;border-radius:5px 0 0 5px;background:#fdfdfd;"></div>
<div style="position:absolute;top:224.000px;font-size:27px;line-height:27px;color:#111;white-space:nowrap;left:376.12px;transform:scaleX(0.9259);transform-origin:0 50%;">13C</div>
<div style="position:absolute;left:3372px;top:220px;width:48px;height:39px;box-sizing:border-box;border:1.5px solid #d0d0d0;border-radius:5px;background:#fff;"></div>
<div style="position:absolute;left:0px;top:264px;width:3420px;height:2px;background:#a2a2a2;"></div>
<div style="position:absolute;left:0px;top:266px;width:3420px;height:2px;background:#ededed;"></div>
<div style="position:absolute;left:0px;top:268px;width:3420px;height:2px;background:#b4b4b4;"></div>
<svg style="position:absolute;left:0;top:0;pointer-events:none" width="3420" height="270" viewBox="0 0 3420 270"><polygon points="153.5,231 160.2,220.5 167,231" fill="#6b6b6b"/><polygon points="153.5,243 160.2,253.5 167,243" fill="#6b6b6b"/><path d="M202,232.5L220,250M220,232.5L202,250" stroke="#c9c9c9" stroke-width="4.2" fill="none" stroke-linecap="round"/><path d="M258,242.5L266.5,250.5L282,232.5" stroke="#c9c9c9" stroke-width="4.2" fill="none" stroke-linecap="round" stroke-linejoin="round"/><text x="302" y="247.5" font-size="33" fill="#444" font-weight="700" text-anchor="start" font-family="Liberation Serif" font-style="italic" >f</text><text x="315" y="248.5" font-size="29" fill="#444" font-weight="700" text-anchor="start" font-family="Liberation Serif" font-style="italic" >x</text><polyline points="342.2,237.8 348.7,244.2 355.2,237.8" fill="none" stroke="#c9c9c9" stroke-width="2.6" stroke-linecap="round" stroke-linejoin="round"/><polygon points="3389,234.5 3403,234.5 3396,245" fill="#6b6b6b"/></svg>
<div style="position:absolute;left:0px;top:270px;width:1618px;height:1692px;background:#fff;"></div>
<div style="position:absolute;left:0px;top:270px;width:1618px;height:43px;background:linear-gradient(#fdfdfd,#f9f9f9);"></div>
<div style="position:absolute;left:0px;top:312px;width:1618px;height:2px;background:#c5c3bf;"></div>
<div style="position:absolute;left:46px;top:270px;width:130px;height:42px;background:linear-gradient(#f4f4f4,#efefef);"></div>
<div style="position:absolute;left:46px;top:310px;width:130px;height:4px;background:#3a7a4b;"></div>
<div style="position:absolute;left:175px;top:274px;width:2px;height:38px;background:#e6e6e6;"></div>
<div style="position:absolute;left:311px;top:274px;width:2px;height:38px;background:#e6e6e6;"></div>
<div style="position:absolute;left:674px;top:274px;width:2px;height:38px;background:#e6e6e6;"></div>
<div style="position:absolute;left:1242px;top:274px;width:2px;height:38px;background:#e6e6e6;"></div>
<div style="position:absolute;left:1110px;top:270px;width:6px;height:44px;background:#3b7249;"></div>
<div style="position:absolute;top:281.000px;font-size:20px;line-height:20px;color:#3a7a4b;white-space:nowrap;left:-489.00px;width:1200px;text-align:center;">A</div>
<div style="position:absolute;top:281.000px;font-size:20px;line-height:20px;color:#5e5e5e;white-space:nowrap;left:-356.00px;width:1200px;text-align:center;">B</div>
<div style="position:absolute;top:281.000px;font-size:20px;line-height:20px;color:#5e5e5e;white-space:nowrap;left:-106.50px;width:1200px;text-align:center;">C</div>
<div style="position:absolute;top:281.000px;font-size:20px;line-height:20px;color:#5e5e5e;white-space:nowrap;left:294.00px;width:1200px;text-align:center;">D</div>
<div style="position:absolute;top:281.000px;font-size:20px;line-height:20px;color:#5e5e5e;white-space:nowrap;left:578.00px;width:1200px;text-align:center;">F</div>
<div style="position:absolute;top:281.000px;font-size:20px;line-height:20px;color:#5e5e5e;white-space:nowrap;left:830.50px;width:1200px;text-align:center;">G</div>
<svg style="position:absolute;left:0;top:270px" width="46" height="44"><polygon points="40,9 40,38 11,38" fill="#dcdcdc"/></svg>
<div style="position:absolute;left:0px;top:314px;width:44px;height:1648px;background:linear-gradient(90deg,#fff 0,#fff 40%,#f5f5f5 100%);"></div>
<div style="position:absolute;left:44px;top:272px;width:2px;height:1690px;background:#c6c4c1;"></div>
<div style="position:absolute;left:46px;top:314px;width:1018px;height:58px;background:#6c8bc4;"></div>
<div style="position:absolute;left:1064px;top:314px;width:554px;height:58px;background:#5a81ba;"></div>
<div style="position:absolute;left:46px;top:372px;width:1572px;height:2px;background:#aabbdc;"></div>
<div style="position:absolute;top:349.000px;font-size:20px;line-height:20px;color:#606060;white-space:nowrap;left:-578.00px;width:1200px;text-align:center;">1</div>
<div style="position:absolute;left:0px;top:372px;width:36px;height:2px;background:linear-gradient(90deg,#fff,#e6e6e6);"></div>
<div style="position:absolute;left:46px;top:314px;width:130px;height:58px;overflow:hidden"><div style="position:absolute;top:20.000px;font-size:19px;line-height:19px;color:#fff;white-space:nowrap;font-weight:700;left:25.11px;transform:scaleX(0.9531);transform-origin:0 50%;">UniqueID</div></div>
<div style="position:absolute;left:141px;top:336px;width:33px;height:33px;box-sizing:border-box;border:2px solid #3a4f7e;border-radius:4px;background:linear-gradient(#fff,#f1f1f1);"></div>
<svg style="position:absolute;left:141px;top:336px" width="33" height="33"><polygon points="8,13 25.5,13 16.7,23.2" fill="#858585"/></svg>
<div style="position:absolute;left:176px;top:314px;width:136px;height:58px;overflow:hidden"><div style="position:absolute;top:20.000px;font-size:19px;line-height:19px;color:#fff;white-space:nowrap;font-weight:700;left:19.16px;transform:scaleX(1.0011);transform-origin:0 50%;">ManagerID</div></div>
<div style="position:absolute;left:277px;top:336px;width:33px;height:33px;box-sizing:border-box;border:2px solid #3a4f7e;border-radius:4px;background:linear-gradient(#fff,#f1f1f1);"></div>
<svg style="position:absolute;left:277px;top:336px" width="33" height="33"><polygon points="8,13 25.5,13 16.7,23.2" fill="#858585"/></svg>
<div style="position:absolute;left:312px;top:314px;width:363px;height:58px;overflow:hidden"><div style="position:absolute;top:20.000px;font-size:19px;line-height:19px;color:#fff;white-space:nowrap;font-weight:700;left:140.55px;transform:scaleX(0.9318);transform-origin:0 50%;">FullName</div></div>
<div style="position:absolute;left:640px;top:336px;width:33px;height:33px;box-sizing:border-box;border:2px solid #3a4f7e;border-radius:4px;background:linear-gradient(#fff,#f1f1f1);"></div>
<svg style="position:absolute;left:640px;top:336px" width="33" height="33"><polygon points="8,13 25.5,13 16.7,23.2" fill="#858585"/></svg>
<div style="position:absolute;left:675px;top:314px;width:438px;height:58px;overflow:hidden"><div style="position:absolute;top:20.000px;font-size:19px;line-height:19px;color:#fff;white-space:nowrap;font-weight:700;left:186.56px;transform:scaleX(0.8312);transform-origin:0 50%;">Job Title</div></div>
<div style="position:absolute;left:1078px;top:336px;width:33px;height:33px;box-sizing:border-box;border:2px solid #3a4f7e;border-radius:4px;background:linear-gradient(#fff,#f1f1f1);"></div>
<svg style="position:absolute;left:1078px;top:336px" width="33" height="33"><polygon points="8,13 25.5,13 16.7,23.2" fill="#858585"/></svg>
<div style="position:absolute;left:1113px;top:314px;width:130px;height:58px;overflow:hidden"><div style="position:absolute;top:20.000px;font-size:19px;line-height:19px;color:#fff;white-space:nowrap;font-weight:700;left:32.83px;transform:scaleX(0.8760);transform-origin:0 50%;">Country</div></div>
<div style="position:absolute;left:1208px;top:336px;width:33px;height:33px;box-sizing:border-box;border:2px solid #3a4f7e;border-radius:4px;background:linear-gradient(#fff,#f1f1f1);"></div>
<svg style="position:absolute;left:1208px;top:336px" width="33" height="33"><polygon points="8,13 25.5,13 16.7,23.2" fill="#858585"/></svg>
<div style="position:absolute;left:1243px;top:314px;width:375px;height:58px;overflow:hidden"><div style="position:absolute;top:20.000px;font-size:19px;line-height:19px;color:#fff;white-space:nowrap;font-weight:700;left:165.86px;transform:scaleX(0.9239);transform-origin:0 50%;">Email</div></div>
<div style="position:absolute;left:1587px;top:336px;width:33px;height:33px;box-sizing:border-box;border:2px solid #3a4f7e;border-radius:4px;background:linear-gradient(#fff,#f1f1f1);"></div>
<svg style="position:absolute;left:1587px;top:336px" width="33" height="33"><polygon points="8,13 25.5,13 16.7,23.2" fill="#858585"/></svg>
<div style="position:absolute;left:46px;top:374px;width:1018px;height:28px;background:#e1e8f3;"></div>
<div style="position:absolute;left:1064px;top:374px;width:554px;height:28px;background:#dde5f0;"></div>
<div style="position:absolute;left:46px;top:402px;width:1572px;height:2px;background:#a2b5d9;"></div>
<div style="position:absolute;left:0px;top:402px;width:36px;height:2px;background:linear-gradient(90deg,#fff,#e6e6e6);"></div>
<div style="position:absolute;top:379.000px;font-size:20px;line-height:20px;color:#606060;white-space:nowrap;left:-578.00px;width:1200px;text-align:center;">2</div>
<div style="position:absolute;top:380.000px;font-size:19px;line-height:19px;color:#000;white-space:nowrap;left:49.88px;-webkit-text-stroke:0.25px #000;transform:scaleX(0.8610);transform-origin:0 50%;">C40</div>
<div style="position:absolute;top:380.000px;font-size:19px;line-height:19px;color:#000;white-space:nowrap;left:179.67px;-webkit-text-stroke:0.25px #000;transform:scaleX(0.8728);transform-origin:0 50%;">F68</div>
<div style="position:absolute;top:380.000px;font-size:19px;line-height:19px;color:#000;white-space:nowrap;left:321.26px;-webkit-text-stroke:0.25px #000;transform:scaleX(0.9444);transform-origin:0 50%;">Roberto Ortiz</div>
<div style="position:absolute;top:380.000px;font-size:19px;line-height:19px;color:#000;white-space:nowrap;left:679.50px;-webkit-text-stroke:0.25px #000;transform:scaleX(0.9357);transform-origin:0 50%;">Adoption Specialist</div>
<div style="position:absolute;top:380.000px;font-size:19px;line-height:19px;color:#000;white-space:nowrap;left:1117.50px;-webkit-text-stroke:0.25px #000;transform:scaleX(0.8400);transform-origin:0 50%;">USA</div>
<div style="position:absolute;top:381.000px;font-size:18.5px;line-height:18.5px;color:#000;white-space:nowrap;letter-spacing:0.050px;font-family:'DejaVu Sans','Liberation Sans',sans-serif;left:1247.45px;-webkit-text-stroke:0.2px #000;">RobertoOrtiz@OurCo.Com</div>
<div style="position:absolute;left:175px;top:404px;width:2px;height:28px;background:#cdcdcd;"></div>
<div style="position:absolute;left:311px;top:404px;width:2px;height:28px;background:#cdcdcd;"></div>
<div style="position:absolute;left:674px;top:404px;width:2px;height:28px;background:#cdcdcd;"></div>
<div style="position:absolute;left:1112px;top:404px;width:2px;height:28px;background:#cdcdcd;"></div>
<div style="position:absolute;left:1242px;top:404px;width:2px;height:28px;background:#cdcdcd;"></div>
<div style="position:absolute;left:46px;top:432px;width:1572px;height:2px;background:#a2b5d9;"></div>
<div style="position:absolute;left:0px;top:432px;width:36px;height:2px;background:linear-gradient(90deg,#fff,#e6e6e6);"></div>
<div style="position:absolute;top:409.000px;font-size:20px;line-height:20px;color:#606060;white-space:nowrap;left:-578.00px;width:1200px;text-align:center;">3</div>
<div style="position:absolute;top:410.000px;font-size:19px;line-height:19px;color:#000;white-space:nowrap;left:49.92px;-webkit-text-stroke:0.25px #000;transform:scaleX(0.9141);transform-origin:0 50%;">82A</div>
<div style="position:absolute;top:410.000px;font-size:19px;line-height:19px;color:#000;white-space:nowrap;left:179.67px;-webkit-text-stroke:0.25px #000;transform:scaleX(0.8728);transform-origin:0 50%;">F68</div>
<div style="position:absolute;top:410.000px;font-size:19px;line-height:19px;color:#000;white-space:nowrap;left:321.95px;-webkit-text-stroke:0.25px #000;transform:scaleX(0.8796);transform-origin:0 50%;">Seth Ruiz</div>
<div style="position:absolute;top:410.000px;font-size:19px;line-height:19px;color:#000;white-space:nowrap;left:679.50px;-webkit-text-stroke:0.25px #000;transform:scaleX(0.9244);transform-origin:0 50%;">Advertising Sales Director</div>
<div style="position:absolute;top:410.000px;font-size:19px;line-height:19px;color:#000;white-space:nowrap;left:1117.50px;-webkit-text-stroke:0.25px #000;transform:scaleX(0.8400);transform-origin:0 50%;">USA</div>
<div style="position:absolute;top:411.000px;font-size:18.5px;line-height:18.5px;color:#000;white-space:nowrap;letter-spacing:0.050px;font-family:'DejaVu Sans','Liberation Sans',sans-serif;left:1248.10px;-webkit-text-stroke:0.2px #000;">SethRuiz@OurCo.Com</div>
<div style="position:absolute;left:46px;top:434px;width:1018px;height:28px;background:#e1e8f3;"></div>
<div style="position:absolute;left:1064px;top:434px;width:554px;height:28px;background:#dde5f0;"></div>
<div style="position:absolute;left:46px;top:462px;width:1572px;height:2px;background:#a2b5d9;"></div>
<div style="position:absolute;left:0px;top:462px;width:36px;height:2px;background:linear-gradient(90deg,#fff,#e6e6e6);"></div>
<div style="position:absolute;top:439.000px;font-size:20px;line-height:20px;color:#606060;white-space:nowrap;left:-578.00px;width:1200px;text-align:center;">4</div>
<div style="position:absolute;top:440.000px;font-size:19px;line-height:19px;color:#000;white-space:nowrap;left:49.80px;-webkit-text-stroke:0.25px #000;transform:scaleX(0.9065);transform-origin:0 50%;">A4</div>
<div style="position:absolute;top:440.000px;font-size:19px;line-height:19px;color:#000;white-space:nowrap;left:180.19px;-webkit-text-stroke:0.25px #000;transform:scaleX(0.8497);transform-origin:0 50%;">C3A</div>
<div style="position:absolute;top:440.000px;font-size:19px;line-height:19px;color:#000;white-space:nowrap;left:321.25px;-webkit-text-stroke:0.25px #000;transform:scaleX(0.9521);transform-origin:0 50%;">Ronnie O'Miller</div>
<div style="position:absolute;top:440.000px;font-size:19px;line-height:19px;color:#000;white-space:nowrap;left:679.53px;-webkit-text-stroke:0.25px #000;transform:scaleX(0.9178);transform-origin:0 50%;">Cognitive Psychologist</div>
<div style="position:absolute;top:440.000px;font-size:19px;line-height:19px;color:#000;white-space:nowrap;left:1117.50px;-webkit-text-stroke:0.25px #000;transform:scaleX(0.8400);transform-origin:0 50%;">USA</div>
<div style="position:absolute;top:441.000px;font-size:18.5px;line-height:18.5px;color:#000;white-space:nowrap;letter-spacing:0.050px;font-family:'DejaVu Sans','Liberation Sans',sans-serif;left:1247.45px;-webkit-text-stroke:0.2px #000;">RonnieO'Miller@OurCo.Com</div>
<div style="position:absolute;left:175px;top:464px;width:2px;height:28px;background:#cdcdcd;"></div>
<div style="position:absolute;left:311px;top:464px;width:2px;height:28px;background:#cdcdcd;"></div>
<div style="position:absolute;left:674px;top:464px;width:2px;height:28px;background:#cdcdcd;"></div>
<div style="position:absolute;left:1112px;top:464px;width:2px;height:28px;background:#cdcdcd;"></div>
<div style="position:absolute;left:1242px;top:464px;width:2px;height:28px;background:#cdcdcd;"></div>
<div style="position:absolute;left:46px;top:492px;width:1572px;height:2px;background:#a2b5d9;"></div>
<div style="position:absolute;left:0px;top:492px;width:36px;height:2px;background:linear-gradient(90deg,#fff,#e6e6e6);"></div>
<div style="position:absolute;top:469.000px;font-size:20px;line-height:20px;color:#606060;white-space:nowrap;left:-578.00px;width:1200px;text-align:center;">5</div>
<div style="position:absolute;top:470.000px;font-size:19px;line-height:19px;color:#000;white-space:nowrap;left:49.80px;-webkit-text-stroke:0.25px #000;transform:scaleX(0.8863);transform-origin:0 50%;">AA</div>
<div style="position:absolute;top:470.000px;font-size:19px;line-height:19px;color:#000;white-space:nowrap;left:179.67px;-webkit-text-stroke:0.25px #000;transform:scaleX(0.9308);transform-origin:0 50%;">168</div>
<svg style="position:absolute;left:176px;top:464px" width="13" height="13"><polygon points="0,0 12.5,0 0,12.5" fill="#4a8a2e"/></svg>
<div style="position:absolute;top:470.000px;font-size:19px;line-height:19px;color:#000;white-space:nowrap;left:321.92px;-webkit-text-stroke:0.25px #000;transform:scaleX(0.9125);transform-origin:0 50%;">Stella Moss</div>
<div style="position:absolute;top:470.000px;font-size:19px;line-height:19px;color:#000;white-space:nowrap;left:679.14px;-webkit-text-stroke:0.25px #000;transform:scaleX(0.9428);transform-origin:0 50%;">Tool and Die Maker</div>
<div style="position:absolute;top:470.000px;font-size:19px;line-height:19px;color:#000;white-space:nowrap;left:1117.50px;-webkit-text-stroke:0.25px #000;transform:scaleX(0.8400);transform-origin:0 50%;">USA</div>
<div style="position:absolute;top:471.000px;font-size:18.5px;line-height:18.5px;color:#000;white-space:nowrap;letter-spacing:0.050px;font-family:'DejaVu Sans','Liberation Sans',sans-serif;left:1248.10px;-webkit-text-stroke:0.2px #000;">StellaMoss@OurCo.Com</div>
<div style="position:absolute;left:46px;top:494px;width:1018px;height:28px;background:#e1e8f3;"></div>
<div style="position:absolute;left:1064px;top:494px;width:554px;height:28px;background:#dde5f0;"></div>
<div style="position:absolute;left:46px;top:522px;width:1572px;height:2px;background:#a2b5d9;"></div>
<div style="position:absolute;left:0px;top:522px;width:36px;height:2px;background:linear-gradient(90deg,#fff,#e6e6e6);"></div>
<div style="position:absolute;top:499.000px;font-size:20px;line-height:20px;color:#606060;white-space:nowrap;left:-578.00px;width:1200px;text-align:center;">6</div>
<div style="position:absolute;top:500.000px;font-size:19px;line-height:19px;color:#000;white-space:nowrap;left:49.80px;-webkit-text-stroke:0.25px #000;transform:scaleX(0.8400);transform-origin:0 50%;">AC</div>
<div style="position:absolute;top:500.000px;font-size:19px;line-height:19px;color:#000;white-space:nowrap;left:180.12px;-webkit-text-stroke:0.25px #000;transform:scaleX(0.9308);transform-origin:0 50%;">270</div>
<svg style="position:absolute;left:176px;top:494px" width="13" height="13"><polygon points="0,0 12.5,0 0,12.5" fill="#4a8a2e"/></svg>
<div style="position:absolute;top:500.000px;font-size:19px;line-height:19px;color:#000;white-space:nowrap;left:321.35px;-webkit-text-stroke:0.25px #000;transform:scaleX(0.8881);transform-origin:0 50%;">Freda Diaz</div>
<div style="position:absolute;top:500.000px;font-size:19px;line-height:19px;color:#000;white-space:nowrap;left:679.00px;-webkit-text-stroke:0.25px #000;transform:scaleX(0.9241);transform-origin:0 50%;">Fire Fighter</div>
<div style="position:absolute;top:500.000px;font-size:19px;line-height:19px;color:#000;white-space:nowrap;left:1117.50px;-webkit-text-stroke:0.25px #000;transform:scaleX(0.8400);transform-origin:0 50%;">USA</div>
<div style="position:absolute;top:501.000px;font-size:18.5px;line-height:18.5px;color:#000;white-space:nowrap;letter-spacing:0.050px;font-family:'DejaVu Sans','Liberation Sans',sans-serif;left:1247.45px;-webkit-text-stroke:0.2px #000;">FredaDiaz@OurCo.Com</div>
<div style="position:absolute;left:175px;top:524px;width:2px;height:28px;background:#cdcdcd;"></div>
<div style="position:absolute;left:311px;top:524px;width:2px;height:28px;background:#cdcdcd;"></div>
<div style="position:absolute;left:674px;top:524px;width:2px;height:28px;background:#cdcdcd;"></div>
<div style="position:absolute;left:1112px;top:524px;width:2px;height:28px;background:#cdcdcd;"></div>
<div style="position:absolute;left:1242px;top:524px;width:2px;height:28px;background:#cdcdcd;"></div>
<div style="position:absolute;left:46px;top:552px;width:1572px;height:2px;background:#a2b5d9;"></div>
<div style="position:absolute;left:0px;top:552px;width:36px;height:2px;background:linear-gradient(90deg,#fff,#e6e6e6);"></div>
<div style="position:absolute;top:529.000px;font-size:20px;line-height:20px;color:#606060;white-space:nowrap;left:-578.00px;width:1200px;text-align:center;">7</div>
<div style="position:absolute;top:530.000px;font-size:19px;line-height:19px;color:#000;white-space:nowrap;left:49.37px;-webkit-text-stroke:0.25px #000;transform:scaleX(0.8773);transform-origin:0 50%;">B6</div>
<div style="position:absolute;top:530.000px;font-size:19px;line-height:19px;color:#000;white-space:nowrap;left:180.20px;-webkit-text-stroke:0.25px #000;transform:scaleX(0.9308);transform-origin:0 50%;">840</div>
<svg style="position:absolute;left:176px;top:524px" width="13" height="13"><polygon points="0,0 12.5,0 0,12.5" fill="#4a8a2e"/></svg>
<div style="position:absolute;top:530.000px;font-size:19px;line-height:19px;color:#000;white-space:nowrap;left:321.30px;-webkit-text-stroke:0.25px #000;transform:scaleX(0.9199);transform-origin:0 50%;">Derrick Collins</div>
<div style="position:absolute;top:530.000px;font-size:19px;line-height:19px;color:#000;white-space:nowrap;left:679.61px;-webkit-text-stroke:0.25px #000;transform:scaleX(0.9197);transform-origin:0 50%;">Staff Engineer</div>
<div style="position:absolute;top:530.000px;font-size:19px;line-height:19px;color:#000;white-space:nowrap;left:1117.50px;-webkit-text-stroke:0.25px #000;transform:scaleX(0.8400);transform-origin:0 50%;">USA</div>
<div style="position:absolute;top:531.000px;font-size:18.5px;line-height:18.5px;color:#000;white-space:nowrap;letter-spacing:0.050px;font-family:'DejaVu Sans','Liberation Sans',sans-serif;left:1247.45px;-webkit-text-stroke:0.2px #000;">DerrickCollins@OurCo.Com</div>
<div style="position:absolute;left:46px;top:554px;width:1018px;height:28px;background:#e1e8f3;"></div>
<div style="position:absolute;left:1064px;top:554px;width:554px;height:28px;background:#dde5f0;"></div>
<div style="position:absolute;left:46px;top:582px;width:1572px;height:2px;background:#a2b5d9;"></div>
<div style="position:absolute;left:0px;top:582px;width:36px;height:2px;background:linear-gradient(90deg,#fff,#e6e6e6);"></div>
<div style="position:absolute;top:559.000px;font-size:20px;line-height:20px;color:#606060;white-space:nowrap;left:-578.00px;width:1200px;text-align:center;">8</div>
<div style="position:absolute;top:560.000px;font-size:19px;line-height:19px;color:#000;white-space:nowrap;left:49.90px;-webkit-text-stroke:0.25px #000;transform:scaleX(0.8400);transform-origin:0 50%;">CE</div>
<div style="position:absolute;top:560.000px;font-size:19px;line-height:19px;color:#000;white-space:nowrap;left:180.12px;-webkit-text-stroke:0.25px #000;transform:scaleX(0.9308);transform-origin:0 50%;">252</div>
<svg style="position:absolute;left:176px;top:554px" width="13" height="13"><polygon points="0,0 12.5,0 0,12.5" fill="#4a8a2e"/></svg>
<div style="position:absolute;top:560.000px;font-size:19px;line-height:19px;color:#000;white-space:nowrap;left:321.54px;-webkit-text-stroke:0.25px #000;transform:scaleX(0.8968);transform-origin:0 50%;">James Shelton</div>
<div style="position:absolute;top:560.000px;font-size:19px;line-height:19px;color:#000;white-space:nowrap;left:678.98px;-webkit-text-stroke:0.25px #000;transform:scaleX(0.9321);transform-origin:0 50%;">Director of Safety and Wellness</div>
<div style="position:absolute;top:560.000px;font-size:19px;line-height:19px;color:#000;white-space:nowrap;left:1117.50px;-webkit-text-stroke:0.25px #000;transform:scaleX(0.8400);transform-origin:0 50%;">USA</div>
<div style="position:absolute;top:561.000px;font-size:18.5px;line-height:18.5px;color:#000;white-space:nowrap;letter-spacing:0.050px;font-family:'DejaVu Sans','Liberation Sans',sans-serif;left:1250.22px;-webkit-text-stroke:0.2px #000;">JamesShelton@OurCo.Com</div>
<div style="position:absolute;left:175px;top:584px;width:2px;height:28px;background:#cdcdcd;"></div>
<div style="position:absolute;left:311px;top:584px;width:2px;height:28px;background:#cdcdcd;"></div>
<div style="position:absolute;left:674px;top:584px;width:2px;height:28px;background:#cdcdcd;"></div>
<div style="position:absolute;left:1112px;top:584px;width:2px;height:28px;background:#cdcdcd;"></div>
<div style="position:absolute;left:1242px;top:584px;width:2px;height:28px;background:#cdcdcd;"></div>
<div style="position:absolute;left:46px;top:612px;width:1572px;height:2px;background:#a2b5d9;"></div>
<div style="position:absolute;left:0px;top:612px;width:36px;height:2px;background:linear-gradient(90deg,#fff,#e6e6e6);"></div>
<div style="position:absolute;top:589.000px;font-size:20px;line-height:20px;color:#606060;white-space:nowrap;left:-578.00px;width:1200px;text-align:center;">9</div>
<div style="position:absolute;top:590.000px;font-size:19px;line-height:19px;color:#000;white-space:nowrap;left:49.34px;-webkit-text-stroke:0.25px #000;transform:scaleX(0.8962);transform-origin:0 50%;">D2</div>
<div style="position:absolute;top:590.000px;font-size:19px;line-height:19px;color:#000;white-space:nowrap;left:179.67px;-webkit-text-stroke:0.25px #000;transform:scaleX(0.8728);transform-origin:0 50%;">F68</div>
<div style="position:absolute;top:590.000px;font-size:19px;line-height:19px;color:#000;white-space:nowrap;left:321.80px;-webkit-text-stroke:0.25px #000;transform:scaleX(0.9648);transform-origin:0 50%;">Alejandro Walton</div>
<div style="position:absolute;top:590.000px;font-size:19px;line-height:19px;color:#000;white-space:nowrap;left:679.00px;-webkit-text-stroke:0.25px #000;transform:scaleX(0.9198);transform-origin:0 50%;">News Analysts</div>
<div style="position:absolute;top:590.000px;font-size:19px;line-height:19px;color:#000;white-space:nowrap;left:1117.50px;-webkit-text-stroke:0.25px #000;transform:scaleX(0.8400);transform-origin:0 50%;">USA</div>
<div style="position:absolute;top:591.000px;font-size:18.5px;line-height:18.5px;color:#000;white-space:nowrap;letter-spacing:0.050px;font-family:'DejaVu Sans','Liberation Sans',sans-serif;left:1249.12px;-webkit-text-stroke:0.2px #000;">AlejandroWalton@OurCo.Com</div>
<div style="position:absolute;left:46px;top:614px;width:1018px;height:28px;background:#e1e8f3;"></div>
<div style="position:absolute;left:1064px;top:614px;width:554px;height:28px;background:#dde5f0;"></div>
<div style="position:absolute;left:46px;top:642px;width:1572px;height:2px;background:#a2b5d9;"></div>
<div style="position:absolute;left:0px;top:642px;width:36px;height:2px;background:linear-gradient(90deg,#fff,#e6e6e6);"></div>
<div style="position:absolute;top:619.000px;font-size:20px;line-height:20px;color:#606060;white-space:nowrap;left:-578.00px;width:1200px;text-align:center;">10</div>
<div style="position:absolute;top:620.000px;font-size:19px;line-height:19px;color:#000;white-space:nowrap;left:49.42px;-webkit-text-stroke:0.25px #000;transform:scaleX(0.8400);transform-origin:0 50%;">EC</div>
<div style="position:absolute;top:620.000px;font-size:19px;line-height:19px;color:#000;white-space:nowrap;left:180.31px;-webkit-text-stroke:0.25px #000;transform:scaleX(0.9141);transform-origin:0 50%;">55A</div>
<div style="position:absolute;top:620.000px;font-size:19px;line-height:19px;color:#000;white-space:nowrap;left:321.71px;-webkit-text-stroke:0.25px #000;transform:scaleX(0.9165);transform-origin:0 50%;">Virgil Swanson</div>
<div style="position:absolute;top:620.000px;font-size:19px;line-height:19px;color:#000;white-space:nowrap;left:679.50px;-webkit-text-stroke:0.25px #000;transform:scaleX(0.9121);transform-origin:0 50%;">Analytical Services Chemist</div>
<div style="position:absolute;top:620.000px;font-size:19px;line-height:19px;color:#000;white-space:nowrap;left:1117.50px;-webkit-text-stroke:0.25px #000;transform:scaleX(0.8400);transform-origin:0 50%;">USA</div>
<div style="position:absolute;top:621.000px;font-size:18.5px;line-height:18.5px;color:#000;white-space:nowrap;letter-spacing:0.050px;font-family:'DejaVu Sans','Liberation Sans',sans-serif;left:1249.12px;-webkit-text-stroke:0.2px #000;">VirgilSwanson@OurCo.Com</div>
<div style="position:absolute;left:175px;top:644px;width:2px;height:28px;background:#cdcdcd;"></div>
<div style="position:absolute;left:311px;top:644px;width:2px;height:28px;background:#cdcdcd;"></div>
<div style="position:absolute;left:674px;top:644px;width:2px;height:28px;background:#cdcdcd;"></div>
<div style="position:absolute;left:1112px;top:644px;width:2px;height:28px;background:#cdcdcd;"></div>
<div style="position:absolute;left:1242px;top:644px;width:2px;height:28px;background:#cdcdcd;"></div>
<div style="position:absolute;left:46px;top:672px;width:1572px;height:2px;background:#a2b5d9;"></div>
<div style="position:absolute;left:0px;top:672px;width:36px;height:2px;background:linear-gradient(90deg,#fff,#e6e6e6);"></div>
<div style="position:absolute;top:649.000px;font-size:20px;line-height:20px;color:#606060;white-space:nowrap;left:-578.00px;width:1200px;text-align:center;">11</div>
<div style="position:absolute;top:650.000px;font-size:19px;line-height:19px;color:#000;white-space:nowrap;left:49.42px;-webkit-text-stroke:0.25px #000;transform:scaleX(0.8452);transform-origin:0 50%;">F0</div>
<div style="position:absolute;top:650.000px;font-size:19px;line-height:19px;color:#000;white-space:nowrap;left:180.26px;-webkit-text-stroke:0.25px #000;transform:scaleX(0.8610);transform-origin:0 50%;">82C</div>
<div style="position:absolute;top:650.000px;font-size:19px;line-height:19px;color:#000;white-space:nowrap;left:321.30px;-webkit-text-stroke:0.25px #000;transform:scaleX(0.9198);transform-origin:0 50%;">Kim Jefferson</div>
<div style="position:absolute;top:650.000px;font-size:19px;line-height:19px;color:#000;white-space:nowrap;left:678.98px;-webkit-text-stroke:0.25px #000;transform:scaleX(0.9345);transform-origin:0 50%;">Rehabilitation Engineering Assistant</div>
<div style="position:absolute;top:650.000px;font-size:19px;line-height:19px;color:#000;white-space:nowrap;left:1117.50px;-webkit-text-stroke:0.25px #000;transform:scaleX(0.8400);transform-origin:0 50%;">USA</div>
<div style="position:absolute;top:651.000px;font-size:18.5px;line-height:18.5px;color:#000;white-space:nowrap;letter-spacing:0.050px;font-family:'DejaVu Sans','Liberation Sans',sans-serif;left:1247.45px;-webkit-text-stroke:0.2px #000;">KimJefferson@OurCo.Com</div>
<div style="position:absolute;left:46px;top:674px;width:1018px;height:28px;background:#e1e8f3;"></div>
<div style="position:absolute;left:1064px;top:674px;width:554px;height:28px;background:#dde5f0;"></div>
<div style="position:absolute;left:46px;top:702px;width:1572px;height:2px;background:#a2b5d9;"></div>
<div style="position:absolute;left:0px;top:702px;width:36px;height:2px;background:linear-gradient(90deg,#fff,#e6e6e6);"></div>
<div style="position:absolute;top:679.000px;font-size:20px;line-height:20px;color:#606060;white-space:nowrap;left:-578.00px;width:1200px;text-align:center;">12</div>
<div style="position:absolute;top:680.000px;font-size:19px;line-height:19px;color:#000;white-space:nowrap;left:49.42px;-webkit-text-stroke:0.25px #000;transform:scaleX(0.8452);transform-origin:0 50%;">F6</div>
<div style="position:absolute;top:680.000px;font-size:19px;line-height:19px;color:#000;white-space:nowrap;left:179.77px;-webkit-text-stroke:0.25px #000;transform:scaleX(0.8610);transform-origin:0 50%;">14C</div>
<div style="position:absolute;top:680.000px;font-size:19px;line-height:19px;color:#000;white-space:nowrap;left:321.55px;-webkit-text-stroke:0.25px #000;transform:scaleX(0.8858);transform-origin:0 50%;">Jesse Myers</div>
<div style="position:absolute;top:680.000px;font-size:19px;line-height:19px;color:#000;white-space:nowrap;left:678.95px;-webkit-text-stroke:0.25px #000;transform:scaleX(0.9540);transform-origin:0 50%;">Preprint Analyst</div>
<div style="position:absolute;top:680.000px;font-size:19px;line-height:19px;color:#000;white-space:nowrap;left:1117.50px;-webkit-text-stroke:0.25px #000;transform:scaleX(0.8400);transform-origin:0 50%;">USA</div>
<div style="position:absolute;top:681.000px;font-size:18.5px;line-height:18.5px;color:#000;white-space:nowrap;letter-spacing:0.050px;font-family:'DejaVu Sans','Liberation Sans',sans-serif;left:1250.22px;-webkit-text-stroke:0.2px #000;">JesseMyers@OurCo.Com</div>
<div style="position:absolute;left:175px;top:704px;width:2px;height:28px;background:#cdcdcd;"></div>
<div style="position:absolute;left:311px;top:704px;width:2px;height:28px;background:#cdcdcd;"></div>
<div style="position:absolute;left:674px;top:704px;width:2px;height:28px;background:#cdcdcd;"></div>
<div style="position:absolute;left:1112px;top:704px;width:2px;height:28px;background:#cdcdcd;"></div>
<div style="position:absolute;left:1242px;top:704px;width:2px;height:28px;background:#cdcdcd;"></div>
<div style="position:absolute;left:46px;top:732px;width:1572px;height:2px;background:#a2b5d9;"></div>
<div style="position:absolute;left:0px;top:732px;width:36px;height:2px;background:linear-gradient(90deg,#fff,#e6e6e6);"></div>
<div style="position:absolute;top:709.000px;font-size:20px;line-height:20px;color:#606060;white-space:nowrap;left:-578.00px;width:1200px;text-align:center;">13</div>
<div style="position:absolute;top:710.000px;font-size:19px;line-height:19px;color:#000;white-space:nowrap;left:49.38px;-webkit-text-stroke:0.25px #000;transform:scaleX(0.8668);transform-origin:0 50%;">FA</div>
<div style="position:absolute;top:710.000px;font-size:19px;line-height:19px;color:#000;white-space:nowrap;left:180.20px;-webkit-text-stroke:0.25px #000;transform:scaleX(0.8400);transform-origin:0 50%;">6CC</div>
<div style="position:absolute;top:710.000px;font-size:19px;line-height:19px;color:#000;white-space:nowrap;left:321.80px;-webkit-text-stroke:0.25px #000;transform:scaleX(0.9472);transform-origin:0 50%;">Andres Mcbride</div>
<div style="position:absolute;top:710.000px;font-size:19px;line-height:19px;color:#000;white-space:nowrap;left:679.00px;-webkit-text-stroke:0.25px #000;transform:scaleX(0.9191);transform-origin:0 50%;">Hedge Fund Manager</div>
<div style="position:absolute;top:710.000px;font-size:19px;line-height:19px;color:#000;white-space:nowrap;left:1117.50px;-webkit-text-stroke:0.25px #000;transform:scaleX(0.8400);transform-origin:0 50%;">USA</div>
<div style="position:absolute;top:711.000px;font-size:18.5px;line-height:18.5px;color:#000;white-space:nowrap;letter-spacing:0.050px;font-family:'DejaVu Sans','Liberation Sans',sans-serif;left:1249.12px;-webkit-text-stroke:0.2px #000;">AndresMcbride@OurCo.Com</div>
<div style="position:absolute;left:46px;top:734px;width:1018px;height:28px;background:#e1e8f3;"></div>
<div style="position:absolute;left:1064px;top:734px;width:554px;height:28px;background:#dde5f0;"></div>
<div style="position:absolute;left:46px;top:762px;width:1572px;height:2px;background:#a2b5d9;"></div>
<div style="position:absolute;left:0px;top:762px;width:36px;height:2px;background:linear-gradient(90deg,#fff,#e6e6e6);"></div>
<div style="position:absolute;top:739.000px;font-size:20px;line-height:20px;color:#606060;white-space:nowrap;left:-578.00px;width:1200px;text-align:center;">14</div>
<div style="position:absolute;top:740.000px;font-size:19px;line-height:19px;color:#000;white-space:nowrap;left:49.40px;-webkit-text-stroke:0.25px #000;transform:scaleX(0.9141);transform-origin:0 50%;">10A</div>
<div style="position:absolute;top:740.000px;font-size:19px;line-height:19px;color:#000;white-space:nowrap;left:180.18px;-webkit-text-stroke:0.25px #000;transform:scaleX(0.8619);transform-origin:0 50%;">2E2</div>
<svg style="position:absolute;left:176px;top:734px" width="13" height="13"><polygon points="0,0 12.5,0 0,12.5" fill="#4a8a2e"/></svg>
<div style="position:absolute;top:740.000px;font-size:19px;line-height:19px;color:#000;white-space:nowrap;left:321.32px;-webkit-text-stroke:0.25px #000;transform:scaleX(0.9049);transform-origin:0 50%;">Rodney Castro</div>
<div style="position:absolute;top:740.000px;font-size:19px;line-height:19px;color:#000;white-space:nowrap;left:678.97px;-webkit-text-stroke:0.25px #000;transform:scaleX(0.9433);transform-origin:0 50%;">Health Analyst</div>
<div style="position:absolute;top:740.000px;font-size:19px;line-height:19px;color:#000;white-space:nowrap;left:1117.50px;-webkit-text-stroke:0.25px #000;transform:scaleX(0.8400);transform-origin:0 50%;">USA</div>
<div style="position:absolute;top:741.000px;font-size:18.5px;line-height:18.5px;color:#000;white-space:nowrap;letter-spacing:0.050px;font-family:'DejaVu Sans','Liberation Sans',sans-serif;left:1247.45px;-webkit-text-stroke:0.2px #000;">RodneyCastro@OurCo.Com</div>
<div style="position:absolute;left:175px;top:764px;width:2px;height:28px;background:#cdcdcd;"></div>
<div style="position:absolute;left:311px;top:764px;width:2px;height:28px;background:#cdcdcd;"></div>
<div style="position:absolute;left:674px;top:764px;width:2px;height:28px;background:#cdcdcd;"></div>
<div style="position:absolute;left:1112px;top:764px;width:2px;height:28px;background:#cdcdcd;"></div>
<div style="position:absolute;left:1242px;top:764px;width:2px;height:28px;background:#cdcdcd;"></div>
<div style="position:absolute;left:46px;top:792px;width:1572px;height:2px;background:#a2b5d9;"></div>
<div style="position:absolute;left:0px;top:792px;width:36px;height:2px;background:linear-gradient(90deg,#fff,#e6e6e6);"></div>
<div style="position:absolute;top:769.000px;font-size:20px;line-height:20px;color:#606060;white-space:nowrap;left:-578.00px;width:1200px;text-align:center;">15</div>
<div style="position:absolute;top:770.000px;font-size:19px;line-height:19px;color:#000;white-space:nowrap;left:49.37px;-webkit-text-stroke:0.25px #000;transform:scaleX(0.9308);transform-origin:0 50%;">122</div>
<svg style="position:absolute;left:46px;top:764px" width="13" height="13"><polygon points="0,0 12.5,0 0,12.5" fill="#4a8a2e"/></svg>
<div style="position:absolute;top:770.000px;font-size:19px;line-height:19px;color:#000;white-space:nowrap;left:180.18px;-webkit-text-stroke:0.25px #000;transform:scaleX(0.8619);transform-origin:0 50%;">2E2</div>
<svg style="position:absolute;left:176px;top:764px" width="13" height="13"><polygon points="0,0 12.5,0 0,12.5" fill="#4a8a2e"/></svg>
<div style="position:absolute;top:770.000px;font-size:19px;line-height:19px;color:#000;white-space:nowrap;left:321.29px;-webkit-text-stroke:0.25px #000;transform:scaleX(0.9293);transform-origin:0 50%;">Heidi Peterson</div>
<div style="position:absolute;top:770.000px;font-size:19px;line-height:19px;color:#000;white-space:nowrap;left:678.97px;-webkit-text-stroke:0.25px #000;transform:scaleX(0.9388);transform-origin:0 50%;">Financial Aid Director</div>
<div style="position:absolute;top:770.000px;font-size:19px;line-height:19px;color:#000;white-space:nowrap;left:1117.50px;-webkit-text-stroke:0.25px #000;transform:scaleX(0.8400);transform-origin:0 50%;">USA</div>
<div style="position:absolute;top:771.000px;font-size:18.5px;line-height:18.5px;color:#000;white-space:nowrap;letter-spacing:0.050px;font-family:'DejaVu Sans','Liberation Sans',sans-serif;left:1247.45px;-webkit-text-stroke:0.2px #000;">HeidiPeterson@OurCo.Com</div>
<div style="position:absolute;left:46px;top:794px;width:1018px;height:28px;background:#e1e8f3;"></div>
<div style="position:absolute;left:1064px;top:794px;width:554px;height:28px;background:#dde5f0;"></div>
<div style="position:absolute;left:46px;top:822px;width:1572px;height:2px;background:#a2b5d9;"></div>
<div style="position:absolute;left:0px;top:822px;width:36px;height:2px;background:linear-gradient(90deg,#fff,#e6e6e6);"></div>
<div style="position:absolute;top:799.000px;font-size:20px;line-height:20px;color:#606060;white-space:nowrap;left:-578.00px;width:1200px;text-align:center;">16</div>
<div style="position:absolute;top:800.000px;font-size:19px;line-height:19px;color:#000;white-space:nowrap;left:49.37px;-webkit-text-stroke:0.25px #000;transform:scaleX(0.9308);transform-origin:0 50%;">136</div>
<svg style="position:absolute;left:46px;top:794px" width="13" height="13"><polygon points="0,0 12.5,0 0,12.5" fill="#4a8a2e"/></svg>
<div style="position:absolute;top:800.000px;font-size:19px;line-height:19px;color:#000;white-space:nowrap;left:180.36px;-webkit-text-stroke:0.25px #000;transform:scaleX(0.8400);transform-origin:0 50%;">3BC</div>
<div style="position:absolute;top:800.000px;font-size:19px;line-height:19px;color:#000;white-space:nowrap;left:321.54px;-webkit-text-stroke:0.25px #000;transform:scaleX(0.9036);transform-origin:0 50%;">Josephine Lynch</div>
<div style="position:absolute;top:800.000px;font-size:19px;line-height:19px;color:#000;white-space:nowrap;left:678.98px;-webkit-text-stroke:0.25px #000;transform:scaleX(0.9312);transform-origin:0 50%;">Fire Protection Engineer</div>
<div style="position:absolute;top:800.000px;font-size:19px;line-height:19px;color:#000;white-space:nowrap;left:1117.50px;-webkit-text-stroke:0.25px #000;transform:scaleX(0.8400);transform-origin:0 50%;">USA</div>
<div style="position:absolute;top:801.000px;font-size:18.5px;line-height:18.5px;color:#000;white-space:nowrap;letter-spacing:0.050px;font-family:'DejaVu Sans','Liberation Sans',sans-serif;left:1250.22px;-webkit-text-stroke:0.2px #000;">JosephineLynch@OurCo.Com</div>
<div style="position:absolute;left:175px;top:824px;width:2px;height:28px;background:#cdcdcd;"></div>
<div style="position:absolute;left:311px;top:824px;width:2px;height:28px;background:#cdcdcd;"></div>
<div style="position:absolute;left:674px;top:824px;width:2px;height:28px;background:#cdcdcd;"></div>
<div style="position:absolute;left:1112px;top:824px;width:2px;height:28px;background:#cdcdcd;"></div>
<div style="position:absolute;left:1242px;top:824px;width:2px;height:28px;background:#cdcdcd;"></div>
<div style="position:absolute;left:46px;top:852px;width:1572px;height:2px;background:#a2b5d9;"></div>
<div style="position:absolute;left:0px;top:822px;width:44px;height:32px;background:linear-gradient(90deg,#f6f6f6,#e9e9e9);"></div>
<div style="position:absolute;top:829.000px;font-size:20px;line-height:20px;color:#3a7a4b;white-space:nowrap;left:-578.00px;width:1200px;text-align:center;">17</div>
<div style="position:absolute;top:830.000px;font-size:19px;line-height:19px;color:#000;white-space:nowrap;left:49.47px;-webkit-text-stroke:0.25px #000;transform:scaleX(0.8610);transform-origin:0 50%;">13C</div>
<div style="position:absolute;top:830.000px;font-size:19px;line-height:19px;color:#000;white-space:nowrap;left:179.67px;-webkit-text-stroke:0.25px #000;transform:scaleX(0.8728);transform-origin:0 50%;">F68</div>
<div style="position:absolute;top:830.000px;font-size:19px;line-height:19px;color:#000;white-space:nowrap;left:321.27px;-webkit-text-stroke:0.25px #000;transform:scaleX(0.9398);transform-origin:0 50%;">Ronald Mullins</div>
<div style="position:absolute;top:830.000px;font-size:19px;line-height:19px;color:#000;white-space:nowrap;left:679.60px;-webkit-text-stroke:0.25px #000;transform:scaleX(0.9324);transform-origin:0 50%;">Operations Section Manager</div>
<div style="position:absolute;top:830.000px;font-size:19px;line-height:19px;color:#000;white-space:nowrap;left:1117.50px;-webkit-text-stroke:0.25px #000;transform:scaleX(0.8400);transform-origin:0 50%;">USA</div>
<div style="position:absolute;top:831.000px;font-size:18.5px;line-height:18.5px;color:#000;white-space:nowrap;letter-spacing:0.050px;font-family:'DejaVu Sans','Liberation Sans',sans-serif;left:1247.45px;-webkit-text-stroke:0.2px #000;">RonaldMullins@OurCo.Com</div>
<div style="position:absolute;left:46px;top:854px;width:1018px;height:28px;background:#e1e8f3;"></div>
<div style="position:absolute;left:1064px;top:854px;width:554px;height:28px;background:#dde5f0;"></div>
<div style="position:absolute;left:46px;top:882px;width:1572px;height:2px;background:#a2b5d9;"></div>
<div style="position:absolute;left:0px;top:882px;width:36px;height:2px;background:linear-gradient(90deg,#fff,#e6e6e6);"></div>
<div style="position:absolute;top:859.000px;font-size:20px;line-height:20px;color:#606060;white-space:nowrap;left:-578.00px;width:1200px;text-align:center;">18</div>
<div style="position:absolute;top:860.000px;font-size:19px;line-height:19px;color:#000;white-space:nowrap;left:49.47px;-webkit-text-stroke:0.25px #000;transform:scaleX(0.8619);transform-origin:0 50%;">13E</div>
<div style="position:absolute;top:860.000px;font-size:19px;line-height:19px;color:#000;white-space:nowrap;left:179.77px;-webkit-text-stroke:0.25px #000;transform:scaleX(0.8610);transform-origin:0 50%;">14C</div>
<div style="position:absolute;top:860.000px;font-size:19px;line-height:19px;color:#000;white-space:nowrap;left:321.37px;-webkit-text-stroke:0.25px #000;transform:scaleX(0.8764);transform-origin:0 50%;">Latoya Bass</div>
<div style="position:absolute;top:860.000px;font-size:19px;line-height:19px;color:#000;white-space:nowrap;left:679.50px;-webkit-text-stroke:0.25px #000;transform:scaleX(0.9506);transform-origin:0 50%;">Construction Superintendent</div>
<div style="position:absolute;top:860.000px;font-size:19px;line-height:19px;color:#000;white-space:nowrap;left:1117.50px;-webkit-text-stroke:0.25px #000;transform:scaleX(0.8400);transform-origin:0 50%;">USA</div>
<div style="position:absolute;top:861.000px;font-size:18.5px;line-height:18.5px;color:#000;white-space:nowrap;letter-spacing:0.050px;font-family:'DejaVu Sans','Liberation Sans',sans-serif;left:1247.45px;-webkit-text-stroke:0.2px #000;">LatoyaBass@OurCo.Com</div>
<div style="position:absolute;left:175px;top:884px;width:2px;height:28px;background:#cdcdcd;"></div>
<div style="position:absolute;left:311px;top:884px;width:2px;height:28px;background:#cdcdcd;"></div>
<div style="position:absolute;left:674px;top:884px;width:2px;height:28px;background:#cdcdcd;"></div>
<div style="position:absolute;left:1112px;top:884px;width:2px;height:28px;background:#cdcdcd;"></div>
<div style="position:absolute;left:1242px;top:884px;width:2px;height:28px;background:#cdcdcd;"></div>
<div style="position:absolute;left:46px;top:912px;width:1572px;height:2px;background:#a2b5d9;"></div>
<div style="position:absolute;left:0px;top:912px;width:36px;height:2px;background:linear-gradient(90deg,#fff,#e6e6e6);"></div>
<div style="position:absolute;top:889.000px;font-size:20px;line-height:20px;color:#606060;white-space:nowrap;left:-578.00px;width:1200px;text-align:center;">19</div>
<div style="position:absolute;top:890.000px;font-size:19px;line-height:19px;color:#000;white-space:nowrap;left:49.37px;-webkit-text-stroke:0.25px #000;transform:scaleX(0.9308);transform-origin:0 50%;">140</div>
<svg style="position:absolute;left:46px;top:884px" width="13" height="13"><polygon points="0,0 12.5,0 0,12.5" fill="#4a8a2e"/></svg>
<div style="position:absolute;top:890.000px;font-size:19px;line-height:19px;color:#000;white-space:nowrap;left:179.67px;-webkit-text-stroke:0.25px #000;transform:scaleX(0.9308);transform-origin:0 50%;">142</div>
<svg style="position:absolute;left:176px;top:884px" width="13" height="13"><polygon points="0,0 12.5,0 0,12.5" fill="#4a8a2e"/></svg>
<div style="position:absolute;top:890.000px;font-size:19px;line-height:19px;color:#000;white-space:nowrap;left:321.34px;-webkit-text-stroke:0.25px #000;transform:scaleX(0.8915);transform-origin:0 50%;">Earnest Ramsey</div>
<div style="position:absolute;top:890.000px;font-size:19px;line-height:19px;color:#000;white-space:nowrap;left:679.01px;-webkit-text-stroke:0.25px #000;transform:scaleX(0.9144);transform-origin:0 50%;">Electrical Field Engineer</div>
<div style="position:absolute;top:890.000px;font-size:19px;line-height:19px;color:#000;white-space:nowrap;left:1117.50px;-webkit-text-stroke:0.25px #000;transform:scaleX(0.8400);transform-origin:0 50%;">USA</div>
<div style="position:absolute;top:891.000px;font-size:18.5px;line-height:18.5px;color:#000;white-space:nowrap;letter-spacing:0.050px;font-family:'DejaVu Sans','Liberation Sans',sans-serif;left:1247.45px;-webkit-text-stroke:0.2px #000;">EarnestRamsey@OurCo.Com</div>
<div style="position:absolute;left:46px;top:914px;width:1018px;height:28px;background:#e1e8f3;"></div>
<div style="position:absolute;left:1064px;top:914px;width:554px;height:28px;background:#dde5f0;"></div>
<div style="position:absolute;left:46px;top:942px;width:1572px;height:2px;background:#a2b5d9;"></div>
<div style="position:absolute;left:0px;top:942px;width:36px;height:2px;background:linear-gradient(90deg,#fff,#e6e6e6);"></div>
<div style="position:absolute;top:919.000px;font-size:20px;line-height:20px;color:#606060;white-space:nowrap;left:-578.00px;width:1200px;text-align:center;">20</div>
<div style="position:absolute;top:920.000px;font-size:19px;line-height:19px;color:#000;white-space:nowrap;left:49.37px;-webkit-text-stroke:0.25px #000;transform:scaleX(0.9308);transform-origin:0 50%;">142</div>
<svg style="position:absolute;left:46px;top:914px" width="13" height="13"><polygon points="0,0 12.5,0 0,12.5" fill="#4a8a2e"/></svg>
<div style="position:absolute;top:920.000px;font-size:19px;line-height:19px;color:#000;white-space:nowrap;left:180.17px;-webkit-text-stroke:0.25px #000;transform:scaleX(0.8728);transform-origin:0 50%;">2F6</div>
<div style="position:absolute;top:920.000px;font-size:19px;line-height:19px;color:#000;white-space:nowrap;left:321.29px;-webkit-text-stroke:0.25px #000;transform:scaleX(0.9281);transform-origin:0 50%;">Natasha Anderson</div>
<div style="position:absolute;top:920.000px;font-size:19px;line-height:19px;color:#000;white-space:nowrap;left:678.94px;-webkit-text-stroke:0.25px #000;transform:scaleX(0.9614);transform-origin:0 50%;">Marine Oiler</div>
<div style="position:absolute;top:920.000px;font-size:19px;line-height:19px;color:#000;white-space:nowrap;left:1117.50px;-webkit-text-stroke:0.25px #000;transform:scaleX(0.8400);transform-origin:0 50%;">USA</div>
<div style="position:absolute;top:921.000px;font-size:18.5px;line-height:18.5px;color:#000;white-space:nowrap;letter-spacing:0.050px;font-family:'DejaVu Sans','Liberation Sans',sans-serif;left:1247.45px;-webkit-text-stroke:0.2px #000;">NatashaAnderson@OurCo.Com</div>
<div style="position:absolute;left:175px;top:944px;width:2px;height:28px;background:#cdcdcd;"></div>
<div style="position:absolute;left:311px;top:944px;width:2px;height:28px;background:#cdcdcd;"></div>
<div style="position:absolute;left:674px;top:944px;width:2px;height:28px;background:#cdcdcd;"></div>
<div style="position:absolute;left:1112px;top:944px;width:2px;height:28px;background:#cdcdcd;"></div>
<div style="position:absolute;left:1242px;top:944px;width:2px;height:28px;background:#cdcdcd;"></div>
<div style="position:absolute;left:46px;top:972px;width:1572px;height:2px;background:#a2b5d9;"></div>
<div style="position:absolute;left:0px;top:972px;width:36px;height:2px;background:linear-gradient(90deg,#fff,#e6e6e6);"></div>
<div style="position:absolute;top:949.000px;font-size:20px;line-height:20px;color:#606060;white-space:nowrap;left:-578.00px;width:1200px;text-align:center;">21</div>
<div style="position:absolute;top:950.000px;font-size:19px;line-height:19px;color:#000;white-space:nowrap;left:49.40px;-webkit-text-stroke:0.25px #000;transform:scaleX(0.9141);transform-origin:0 50%;">14A</div>
<div style="position:absolute;top:950.000px;font-size:19px;line-height:19px;color:#000;white-space:nowrap;left:180.12px;-webkit-text-stroke:0.25px #000;transform:scaleX(0.9308);transform-origin:0 50%;">240</div>
<svg style="position:absolute;left:176px;top:944px" width="13" height="13"><polygon points="0,0 12.5,0 0,12.5" fill="#4a8a2e"/></svg>
<div style="position:absolute;top:950.000px;font-size:19px;line-height:19px;color:#000;white-space:nowrap;left:321.90px;-webkit-text-stroke:0.25px #000;transform:scaleX(0.9361);transform-origin:0 50%;">Olive Hammond</div>
<div style="position:absolute;top:950.000px;font-size:19px;line-height:19px;color:#000;white-space:nowrap;left:679.50px;-webkit-text-stroke:0.25px #000;transform:scaleX(0.9084);transform-origin:0 50%;">Associate Pastor</div>
<div style="position:absolute;top:950.000px;font-size:19px;line-height:19px;color:#000;white-space:nowrap;left:1117.50px;-webkit-text-stroke:0.25px #000;transform:scaleX(0.8400);transform-origin:0 50%;">USA</div>
<div style="position:absolute;top:951.000px;font-size:18.5px;line-height:18.5px;color:#000;white-space:nowrap;letter-spacing:0.050px;font-family:'DejaVu Sans','Liberation Sans',sans-serif;left:1248.28px;-webkit-text-stroke:0.2px #000;">OliveHammond@OurCo.Com</div>
<div style="position:absolute;left:46px;top:974px;width:1018px;height:28px;background:#e1e8f3;"></div>
<div style="position:absolute;left:1064px;top:974px;width:554px;height:28px;background:#dde5f0;"></div>
<div style="position:absolute;left:46px;top:1002px;width:1572px;height:2px;background:#a2b5d9;"></div>
<div style="position:absolute;left:0px;top:1002px;width:36px;height:2px;background:linear-gradient(90deg,#fff,#e6e6e6);"></div>
<div style="position:absolute;top:979.000px;font-size:20px;line-height:20px;color:#606060;white-space:nowrap;left:-578.00px;width:1200px;text-align:center;">22</div>
<div style="position:absolute;top:980.000px;font-size:19px;line-height:19px;color:#000;white-space:nowrap;left:49.47px;-webkit-text-stroke:0.25px #000;transform:scaleX(0.8610);transform-origin:0 50%;">14C</div>
<div style="position:absolute;top:980.000px;font-size:19px;line-height:19px;color:#000;white-space:nowrap;left:179.77px;-webkit-text-stroke:0.25px #000;transform:scaleX(0.8610);transform-origin:0 50%;">13C</div>
<div style="position:absolute;top:980.000px;font-size:19px;line-height:19px;color:#000;white-space:nowrap;left:321.29px;-webkit-text-stroke:0.25px #000;transform:scaleX(0.9258);transform-origin:0 50%;">Doreen Valdez</div>
<div style="position:absolute;top:980.000px;font-size:19px;line-height:19px;color:#000;white-space:nowrap;left:679.00px;-webkit-text-stroke:0.25px #000;transform:scaleX(0.9223);transform-origin:0 50%;">Health Psychologist</div>
<div style="position:absolute;top:980.000px;font-size:19px;line-height:19px;color:#000;white-space:nowrap;left:1117.50px;-webkit-text-stroke:0.25px #000;transform:scaleX(0.8400);transform-origin:0 50%;">USA</div>
<div style="position:absolute;top:981.000px;font-size:18.5px;line-height:18.5px;color:#000;white-space:nowrap;letter-spacing:0.050px;font-family:'DejaVu Sans','Liberation Sans',sans-serif;left:1247.45px;-webkit-text-stroke:0.2px #000;">DoreenValdez@OurCo.Com</div>
<div style="position:absolute;left:175px;top:1004px;width:2px;height:28px;background:#cdcdcd;"></div>
<div style="position:absolute;left:311px;top:1004px;width:2px;height:28px;background:#cdcdcd;"></div>
<div style="position:absolute;left:674px;top:1004px;width:2px;height:28px;background:#cdcdcd;"></div>
<div style="position:absolute;left:1112px;top:1004px;width:2px;height:28px;background:#cdcdcd;"></div>
<div style="position:absolute;left:1242px;top:1004px;width:2px;height:28px;background:#cdcdcd;"></div>
<div style="position:absolute;left:46px;top:1032px;width:1572px;height:2px;background:#a2b5d9;"></div>
<div style="position:absolute;left:0px;top:1032px;width:36px;height:2px;background:linear-gradient(90deg,#fff,#e6e6e6);"></div>
<div style="position:absolute;top:1009.000px;font-size:20px;line-height:20px;color:#606060;white-space:nowrap;left:-578.00px;width:1200px;text-align:center;">23</div>
<div style="position:absolute;top:1010.000px;font-size:19px;line-height:19px;color:#000;white-space:nowrap;left:49.34px;-webkit-text-stroke:0.25px #000;transform:scaleX(0.9566);transform-origin:0 50%;">15'6</div>
<div style="position:absolute;top:1010.000px;font-size:19px;line-height:19px;color:#000;white-space:nowrap;left:179.67px;-webkit-text-stroke:0.25px #000;transform:scaleX(0.8728);transform-origin:0 50%;">F68</div>
<div style="position:absolute;top:1010.000px;font-size:19px;line-height:19px;color:#000;white-space:nowrap;left:321.91px;-webkit-text-stroke:0.25px #000;transform:scaleX(0.9211);transform-origin:0 50%;">Shawna Aguilar</div>
<div style="position:absolute;top:1010.000px;font-size:19px;line-height:19px;color:#000;white-space:nowrap;left:678.97px;-webkit-text-stroke:0.25px #000;transform:scaleX(0.9428);transform-origin:0 50%;">Product Manager</div>
<div style="position:absolute;top:1010.000px;font-size:19px;line-height:19px;color:#000;white-space:nowrap;left:1117.50px;-webkit-text-stroke:0.25px #000;transform:scaleX(0.8400);transform-origin:0 50%;">USA</div>
<div style="position:absolute;top:1011.000px;font-size:18.5px;line-height:18.5px;color:#000;white-space:nowrap;letter-spacing:0.050px;font-family:'DejaVu Sans','Liberation Sans',sans-serif;left:1248.10px;-webkit-text-stroke:0.2px #000;">ShawnaAguilar@OurCo.Com</div>
<div style="position:absolute;left:46px;top:1034px;width:1018px;height:28px;background:#e1e8f3;"></div>
<div style="position:absolute;left:1064px;top:1034px;width:554px;height:28px;background:#dde5f0;"></div>
<div style="position:absolute;left:46px;top:1062px;width:1572px;height:2px;background:#a2b5d9;"></div>
<div style="position:absolute;left:0px;top:1062px;width:36px;height:2px;background:linear-gradient(90deg,#fff,#e6e6e6);"></div>
<div style="position:absolute;top:1039.000px;font-size:20px;line-height:20px;color:#606060;white-space:nowrap;left:-578.00px;width:1200px;text-align:center;">24</div>
<div style="position:absolute;top:1040.000px;font-size:19px;line-height:19px;color:#000;white-space:nowrap;left:49.37px;-webkit-text-stroke:0.25px #000;transform:scaleX(0.9308);transform-origin:0 50%;">168</div>
<svg style="position:absolute;left:46px;top:1034px" width="13" height="13"><polygon points="0,0 12.5,0 0,12.5" fill="#4a8a2e"/></svg>
<div style="position:absolute;top:1040.000px;font-size:19px;line-height:19px;color:#000;white-space:nowrap;left:179.77px;-webkit-text-stroke:0.25px #000;transform:scaleX(0.8610);transform-origin:0 50%;">13C</div>
<div style="position:absolute;top:1040.000px;font-size:19px;line-height:19px;color:#000;white-space:nowrap;left:321.80px;-webkit-text-stroke:0.25px #000;transform:scaleX(0.9508);transform-origin:0 50%;">Audrey Mann</div>
<div style="position:absolute;top:1040.000px;font-size:19px;line-height:19px;color:#000;white-space:nowrap;left:679.02px;-webkit-text-stroke:0.25px #000;transform:scaleX(0.9107);transform-origin:0 50%;">Loan Documents Closer</div>
<div style="position:absolute;top:1040.000px;font-size:19px;line-height:19px;color:#000;white-space:nowrap;left:1117.50px;-webkit-text-stroke:0.25px #000;transform:scaleX(0.8400);transform-origin:0 50%;">USA</div>
<div style="position:absolute;top:1041.000px;font-size:18.5px;line-height:18.5px;color:#000;white-space:nowrap;letter-spacing:0.050px;font-family:'DejaVu Sans','Liberation Sans',sans-serif;left:1249.12px;-webkit-text-stroke:0.2px #000;">AudreyMann@OurCo.Com</div>
<div style="position:absolute;left:175px;top:1064px;width:2px;height:28px;background:#cdcdcd;"></div>
<div style="position:absolute;left:311px;top:1064px;width:2px;height:28px;background:#cdcdcd;"></div>
<div style="position:absolute;left:674px;top:1064px;width:2px;height:28px;background:#cdcdcd;"></div>
<div style="position:absolute;left:1112px;top:1064px;width:2px;height:28px;background:#cdcdcd;"></div>
<div style="position:absolute;left:1242px;top:1064px;width:2px;height:28px;background:#cdcdcd;"></div>
<div style="position:absolute;left:46px;top:1092px;width:1572px;height:2px;background:#a2b5d9;"></div>
<div style="position:absolute;left:0px;top:1092px;width:36px;height:2px;background:linear-gradient(90deg,#fff,#e6e6e6);"></div>
<div style="position:absolute;top:1069.000px;font-size:20px;line-height:20px;color:#606060;white-space:nowrap;left:-578.00px;width:1200px;text-align:center;">25</div>
<div style="position:absolute;top:1070.000px;font-size:19px;line-height:19px;color:#000;white-space:nowrap;left:49.47px;-webkit-text-stroke:0.25px #000;transform:scaleX(0.8610);transform-origin:0 50%;">16C</div>
<div style="position:absolute;top:1070.000px;font-size:19px;line-height:19px;color:#000;white-space:nowrap;left:179.77px;-webkit-text-stroke:0.25px #000;transform:scaleX(0.8610);transform-origin:0 50%;">14C</div>
<div style="position:absolute;top:1070.000px;font-size:19px;line-height:19px;color:#000;white-space:nowrap;left:321.71px;-webkit-text-stroke:0.25px #000;transform:scaleX(0.9400);transform-origin:0 50%;">Velma Mendoza</div>
<div style="position:absolute;top:1070.000px;font-size:19px;line-height:19px;color:#000;white-space:nowrap;left:678.77px;-webkit-text-stroke:0.25px #000;transform:scaleX(0.9560);transform-origin:0 50%;">Internet Advertising Buyer</div>
<div style="position:absolute;top:1070.000px;font-size:19px;line-height:19px;color:#000;white-space:nowrap;left:1117.50px;-webkit-text-stroke:0.25px #000;transform:scaleX(0.8400);transform-origin:0 50%;">USA</div>
<div style="position:absolute;top:1071.000px;font-size:18.5px;line-height:18.5px;color:#000;white-space:nowrap;letter-spacing:0.050px;font-family:'DejaVu Sans','Liberation Sans',sans-serif;left:1249.12px;-webkit-text-stroke:0.2px #000;">VelmaMendoza@OurCo.Com</div>
<div style="position:absolute;left:46px;top:1094px;width:1018px;height:28px;background:#e1e8f3;"></div>
<div style="position:absolute;left:1064px;top:1094px;width:554px;height:28px;background:#dde5f0;"></div>
<div style="position:absolute;left:46px;top:1122px;width:1572px;height:2px;background:#a2b5d9;"></div>
<div style="position:absolute;left:0px;top:1122px;width:36px;height:2px;background:linear-gradient(90deg,#fff,#e6e6e6);"></div>
<div style="position:absolute;top:1099.000px;font-size:20px;line-height:20px;color:#606060;white-space:nowrap;left:-578.00px;width:1200px;text-align:center;">26</div>
<div style="position:absolute;top:1100.000px;font-size:19px;line-height:19px;color:#000;white-space:nowrap;left:49.40px;-webkit-text-stroke:0.25px #000;transform:scaleX(0.9141);transform-origin:0 50%;">18A</div>
<div style="position:absolute;top:1100.000px;font-size:19px;line-height:19px;color:#000;white-space:nowrap;left:179.67px;-webkit-text-stroke:0.25px #000;transform:scaleX(0.9308);transform-origin:0 50%;">168</div>
<svg style="position:absolute;left:176px;top:1094px" width="13" height="13"><polygon points="0,0 12.5,0 0,12.5" fill="#4a8a2e"/></svg>
<div style="position:absolute;top:1100.000px;font-size:19px;line-height:19px;color:#000;white-space:nowrap;left:321.29px;-webkit-text-stroke:0.25px #000;transform:scaleX(0.9250);transform-origin:0 50%;">Patsy Wilkerson</div>
<div style="position:absolute;top:1100.000px;font-size:19px;line-height:19px;color:#000;white-space:nowrap;left:678.98px;-webkit-text-stroke:0.25px #000;transform:scaleX(0.9372);transform-origin:0 50%;">Estimating Manager</div>
<div style="position:absolute;top:1100.000px;font-size:19px;line-height:19px;color:#000;white-space:nowrap;left:1117.50px;-webkit-text-stroke:0.25px #000;transform:scaleX(0.8400);transform-origin:0 50%;">USA</div>
<div style="position:absolute;top:1101.000px;font-size:18.5px;line-height:18.5px;color:#000;white-space:nowrap;letter-spacing:0.050px;font-family:'DejaVu Sans','Liberation Sans',sans-serif;left:1247.45px;-webkit-text-stroke:0.2px #000;">PatsyWilkerson@OurCo.Com</div>
<div style="position:absolute;left:175px;top:1124px;width:2px;height:28px;background:#cdcdcd;"></div>
<div style="position:absolute;left:311px;top:1124px;width:2px;height:28px;background:#cdcdcd;"></div>
<div style="position:absolute;left:674px;top:1124px;width:2px;height:28px;background:#cdcdcd;"></div>
<div style="position:absolute;left:1112px;top:1124px;width:2px;height:28px;background:#cdcdcd;"></div>
<div style="position:absolute;left:1242px;top:1124px;width:2px;height:28px;background:#cdcdcd;"></div>
<div style="position:absolute;left:46px;top:1152px;width:1572px;height:2px;background:#a2b5d9;"></div>
<div style="position:absolute;left:0px;top:1152px;width:36px;height:2px;background:linear-gradient(90deg,#fff,#e6e6e6);"></div>
<div style="position:absolute;top:1129.000px;font-size:20px;line-height:20px;color:#606060;white-space:nowrap;left:-578.00px;width:1200px;text-align:center;">27</div>
<div style="position:absolute;top:1130.000px;font-size:19px;line-height:19px;color:#000;white-space:nowrap;left:49.37px;-webkit-text-stroke:0.25px #000;transform:scaleX(0.9308);transform-origin:0 50%;">194</div>
<svg style="position:absolute;left:46px;top:1124px" width="13" height="13"><polygon points="0,0 12.5,0 0,12.5" fill="#4a8a2e"/></svg>
<div style="position:absolute;top:1130.000px;font-size:19px;line-height:19px;color:#000;white-space:nowrap;left:180.20px;-webkit-text-stroke:0.25px #000;transform:scaleX(0.8400);transform-origin:0 50%;">C7E</div>
<div style="position:absolute;top:1130.000px;font-size:19px;line-height:19px;color:#000;white-space:nowrap;left:321.29px;-webkit-text-stroke:0.25px #000;transform:scaleX(0.9296);transform-origin:0 50%;">Deanna Marshall</div>
<div style="position:absolute;top:1130.000px;font-size:19px;line-height:19px;color:#000;white-space:nowrap;left:679.14px;-webkit-text-stroke:0.25px #000;transform:scaleX(0.9351);transform-origin:0 50%;">Telecommunications Specialist</div>
<div style="position:absolute;top:1130.000px;font-size:19px;line-height:19px;color:#000;white-space:nowrap;left:1117.50px;-webkit-text-stroke:0.25px #000;transform:scaleX(0.8400);transform-origin:0 50%;">USA</div>
<div style="position:absolute;top:1131.000px;font-size:18.5px;line-height:18.5px;color:#000;white-space:nowrap;letter-spacing:0.050px;font-family:'DejaVu Sans','Liberation Sans',sans-serif;left:1247.45px;-webkit-text-stroke:0.2px #000;">DeannaMarshall@OurCo.Com</div>
<div style="position:absolute;left:46px;top:1154px;width:1018px;height:28px;background:#e1e8f3;"></div>
<div style="position:absolute;left:1064px;top:1154px;width:554px;height:28px;background:#dde5f0;"></div>
<div style="position:absolute;left:46px;top:1182px;width:1572px;height:2px;background:#a2b5d9;"></div>
<div style="position:absolute;left:0px;top:1182px;width:36px;height:2px;background:linear-gradient(90deg,#fff,#e6e6e6);"></div>
<div style="position:absolute;top:1159.000px;font-size:20px;line-height:20px;color:#606060;white-space:nowrap;left:-578.00px;width:1200px;text-align:center;">28</div>
<div style="position:absolute;top:1160.000px;font-size:19px;line-height:19px;color:#000;white-space:nowrap;left:49.40px;-webkit-text-stroke:0.25px #000;transform:scaleX(0.9141);transform-origin:0 50%;">1A2</div>
<div style="position:absolute;top:1160.000px;font-size:19px;line-height:19px;color:#000;white-space:nowrap;left:179.67px;-webkit-text-stroke:0.25px #000;transform:scaleX(0.8728);transform-origin:0 50%;">F68</div>
<div style="position:absolute;top:1160.000px;font-size:19px;line-height:19px;color:#000;white-space:nowrap;left:321.81px;-webkit-text-stroke:0.25px #000;transform:scaleX(0.9393);transform-origin:0 50%;">Guadalupe Maxwell</div>
<div style="position:absolute;top:1160.000px;font-size:19px;line-height:19px;color:#000;white-space:nowrap;left:679.50px;-webkit-text-stroke:0.25px #000;transform:scaleX(0.9239);transform-origin:0 50%;">Account Executive</div>
<div style="position:absolute;top:1160.000px;font-size:19px;line-height:19px;color:#000;white-space:nowrap;left:1117.50px;-webkit-text-stroke:0.25px #000;transform:scaleX(0.8400);transform-origin:0 50%;">USA</div>
<div style="position:absolute;top:1161.000px;font-size:18.5px;line-height:18.5px;color:#000;white-space:nowrap;letter-spacing:0.050px;font-family:'DejaVu Sans','Liberation Sans',sans-serif;left:1248.28px;-webkit-text-stroke:0.2px #000;">GuadalupeMaxwell@OurCo.Com</div>
<div style="position:absolute;left:175px;top:1184px;width:2px;height:28px;background:#cdcdcd;"></div>
<div style="position:absolute;left:311px;top:1184px;width:2px;height:28px;background:#cdcdcd;"></div>
<div style="position:absolute;left:674px;top:1184px;width:2px;height:28px;background:#cdcdcd;"></div>
<div style="position:absolute;left:1112px;top:1184px;width:2px;height:28px;background:#cdcdcd;"></div>
<div style="position:absolute;left:1242px;top:1184px;width:2px;height:28px;background:#cdcdcd;"></div>
<div style="position:absolute;left:46px;top:1212px;width:1572px;height:2px;background:#a2b5d9;"></div>
<div style="position:absolute;left:0px;top:1212px;width:36px;height:2px;background:linear-gradient(90deg,#fff,#e6e6e6);"></div>
<div style="position:absolute;top:1189.000px;font-size:20px;line-height:20px;color:#606060;white-space:nowrap;left:-578.00px;width:1200px;text-align:center;">29</div>
<div style="position:absolute;top:1190.000px;font-size:19px;line-height:19px;color:#000;white-space:nowrap;left:49.47px;-webkit-text-stroke:0.25px #000;transform:scaleX(0.8610);transform-origin:0 50%;">1C0</div>
<div style="position:absolute;top:1190.000px;font-size:19px;line-height:19px;color:#000;white-space:nowrap;left:180.36px;-webkit-text-stroke:0.25px #000;transform:scaleX(0.8400);transform-origin:0 50%;">3BC</div>
<div style="position:absolute;top:1190.000px;font-size:19px;line-height:19px;color:#000;white-space:nowrap;left:321.32px;-webkit-text-stroke:0.25px #000;transform:scaleX(0.9047);transform-origin:0 50%;">Brenda Santos</div>
<div style="position:absolute;top:1190.000px;font-size:19px;line-height:19px;color:#000;white-space:nowrap;left:679.54px;-webkit-text-stroke:0.25px #000;transform:scaleX(0.9033);transform-origin:0 50%;">Claims Examiner</div>
<div style="position:absolute;top:1190.000px;font-size:19px;line-height:19px;color:#000;white-space:nowrap;left:1117.50px;-webkit-text-stroke:0.25px #000;transform:scaleX(0.8400);transform-origin:0 50%;">USA</div>
<div style="position:absolute;top:1191.000px;font-size:18.5px;line-height:18.5px;color:#000;white-space:nowrap;letter-spacing:0.050px;font-family:'DejaVu Sans','Liberation Sans',sans-serif;left:1247.45px;-webkit-text-stroke:0.2px #000;">BrendaSantos@OurCo.Com</div>
<div style="position:absolute;left:46px;top:1214px;width:1018px;height:28px;background:#e1e8f3;"></div>
<div style="position:absolute;left:1064px;top:1214px;width:554px;height:28px;background:#dde5f0;"></div>
<div style="position:absolute;left:46px;top:1242px;width:1572px;height:2px;background:#a2b5d9;"></div>
<div style="position:absolute;left:0px;top:1242px;width:36px;height:2px;background:linear-gradient(90deg,#fff,#e6e6e6);"></div>
<div style="position:absolute;top:1219.000px;font-size:20px;line-height:20px;color:#606060;white-space:nowrap;left:-578.00px;width:1200px;text-align:center;">30</div>
<div style="position:absolute;top:1220.000px;font-size:19px;line-height:19px;color:#000;white-space:nowrap;left:49.47px;-webkit-text-stroke:0.25px #000;transform:scaleX(0.8610);transform-origin:0 50%;">1C6</div>
<div style="position:absolute;top:1220.000px;font-size:19px;line-height:19px;color:#000;white-space:nowrap;left:180.36px;-webkit-text-stroke:0.25px #000;transform:scaleX(0.8447);transform-origin:0 50%;">3DC</div>
<div style="position:absolute;top:1220.000px;font-size:19px;line-height:19px;color:#000;white-space:nowrap;left:321.82px;-webkit-text-stroke:0.25px #000;transform:scaleX(0.9257);transform-origin:0 50%;">Geraldine Nelson</div>
<div style="position:absolute;top:1220.000px;font-size:19px;line-height:19px;color:#000;white-space:nowrap;left:678.98px;-webkit-text-stroke:0.25px #000;transform:scaleX(0.9340);transform-origin:0 50%;">Psychosocial Rehabilitation Worker</div>
<div style="position:absolute;top:1220.000px;font-size:19px;line-height:19px;color:#000;white-space:nowrap;left:1117.50px;-webkit-text-stroke:0.25px #000;transform:scaleX(0.8400);transform-origin:0 50%;">USA</div>
<div style="position:absolute;top:1221.000px;font-size:18.5px;line-height:18.5px;color:#000;white-space:nowrap;letter-spacing:0.050px;font-family:'DejaVu Sans','Liberation Sans',sans-serif;left:1248.28px;-webkit-text-stroke:0.2px #000;">GeraldineNelson@OurCo.Com</div>
<div style="position:absolute;left:175px;top:1244px;width:2px;height:28px;background:#cdcdcd;"></div>
<div style="position:absolute;left:311px;top:1244px;width:2px;height:28px;background:#cdcdcd;"></div>
<div style="position:absolute;left:674px;top:1244px;width:2px;height:28px;background:#cdcdcd;"></div>
<div style="position:absolute;left:1112px;top:1244px;width:2px;height:28px;background:#cdcdcd;"></div>
<div style="position:absolute;left:1242px;top:1244px;width:2px;height:28px;background:#cdcdcd;"></div>
<div style="position:absolute;left:46px;top:1272px;width:1572px;height:2px;background:#a2b5d9;"></div>
<div style="position:absolute;left:0px;top:1272px;width:36px;height:2px;background:linear-gradient(90deg,#fff,#e6e6e6);"></div>
<div style="position:absolute;top:1249.000px;font-size:20px;line-height:20px;color:#606060;white-space:nowrap;left:-578.00px;width:1200px;text-align:center;">31</div>
<div style="position:absolute;top:1250.000px;font-size:19px;line-height:19px;color:#000;white-space:nowrap;left:49.43px;-webkit-text-stroke:0.25px #000;transform:scaleX(0.8928);transform-origin:0 50%;">1DA</div>
<div style="position:absolute;top:1250.000px;font-size:19px;line-height:19px;color:#000;white-space:nowrap;left:179.67px;-webkit-text-stroke:0.25px #000;transform:scaleX(0.9308);transform-origin:0 50%;">142</div>
<svg style="position:absolute;left:176px;top:1244px" width="13" height="13"><polygon points="0,0 12.5,0 0,12.5" fill="#4a8a2e"/></svg>
<div style="position:absolute;top:1250.000px;font-size:19px;line-height:19px;color:#000;white-space:nowrap;left:321.80px;-webkit-text-stroke:0.25px #000;transform:scaleX(0.9119);transform-origin:0 50%;">Archie Spencer</div>
<div style="position:absolute;top:1250.000px;font-size:19px;line-height:19px;color:#000;white-space:nowrap;left:679.14px;-webkit-text-stroke:0.25px #000;transform:scaleX(0.9352);transform-origin:0 50%;">Therapist</div>
<div style="position:absolute;top:1250.000px;font-size:19px;line-height:19px;color:#000;white-space:nowrap;left:1117.50px;-webkit-text-stroke:0.25px #000;transform:scaleX(0.8400);transform-origin:0 50%;">USA</div>
<div style="position:absolute;top:1251.000px;font-size:18.5px;line-height:18.5px;color:#000;white-space:nowrap;letter-spacing:0.050px;font-family:'DejaVu Sans','Liberation Sans',sans-serif;left:1249.12px;-webkit-text-stroke:0.2px #000;">ArchieSpencer@OurCo.Com</div>
<div style="position:absolute;left:46px;top:1274px;width:1018px;height:28px;background:#e1e8f3;"></div>
<div style="position:absolute;left:1064px;top:1274px;width:554px;height:28px;background:#dde5f0;"></div>
<div style="position:absolute;left:46px;top:1302px;width:1572px;height:2px;background:#a2b5d9;"></div>
<div style="position:absolute;left:0px;top:1302px;width:36px;height:2px;background:linear-gradient(90deg,#fff,#e6e6e6);"></div>
<div style="position:absolute;top:1279.000px;font-size:20px;line-height:20px;color:#606060;white-space:nowrap;left:-578.00px;width:1200px;text-align:center;">32</div>
<div style="position:absolute;top:1280.000px;font-size:19px;line-height:19px;color:#000;white-space:nowrap;left:49.47px;-webkit-text-stroke:0.25px #000;transform:scaleX(0.8619);transform-origin:0 50%;">1E0</div>
<svg style="position:absolute;left:46px;top:1274px" width="13" height="13"><polygon points="0,0 12.5,0 0,12.5" fill="#4a8a2e"/></svg>
<div style="position:absolute;top:1280.000px;font-size:19px;line-height:19px;color:#000;white-space:nowrap;left:180.20px;-webkit-text-stroke:0.25px #000;transform:scaleX(0.9308);transform-origin:0 50%;">944</div>
<svg style="position:absolute;left:176px;top:1274px" width="13" height="13"><polygon points="0,0 12.5,0 0,12.5" fill="#4a8a2e"/></svg>
<div style="position:absolute;top:1280.000px;font-size:19px;line-height:19px;color:#000;white-space:nowrap;left:321.28px;-webkit-text-stroke:0.25px #000;transform:scaleX(0.9332);transform-origin:0 50%;">Nancy Butler</div>
<div style="position:absolute;top:1280.000px;font-size:19px;line-height:19px;color:#000;white-space:nowrap;left:679.41px;-webkit-text-stroke:0.25px #000;transform:scaleX(0.9428);transform-origin:0 50%;">Web Product Manager</div>
<div style="position:absolute;top:1280.000px;font-size:19px;line-height:19px;color:#000;white-space:nowrap;left:1117.50px;-webkit-text-stroke:0.25px #000;transform:scaleX(0.8400);transform-origin:0 50%;">USA</div>
<div style="position:absolute;top:1281.000px;font-size:18.5px;line-height:18.5px;color:#000;white-space:nowrap;letter-spacing:0.050px;font-family:'DejaVu Sans','Liberation Sans',sans-serif;left:1247.45px;-webkit-text-stroke:0.2px #000;">NancyButler@OurCo.Com</div>
<div style="position:absolute;left:175px;top:1304px;width:2px;height:28px;background:#cdcdcd;"></div>
<div style="position:absolute;left:311px;top:1304px;width:2px;height:28px;background:#cdcdcd;"></div>
<div style="position:absolute;left:674px;top:1304px;width:2px;height:28px;background:#cdcdcd;"></div>
<div style="position:absolute;left:1112px;top:1304px;width:2px;height:28px;background:#cdcdcd;"></div>
<div style="position:absolute;left:1242px;top:1304px;width:2px;height:28px;background:#cdcdcd;"></div>
<div style="position:absolute;left:46px;top:1332px;width:1572px;height:2px;background:#a2b5d9;"></div>
<div style="position:absolute;left:0px;top:1332px;width:36px;height:2px;background:linear-gradient(90deg,#fff,#e6e6e6);"></div>
<div style="position:absolute;top:1309.000px;font-size:20px;line-height:20px;color:#606060;white-space:nowrap;left:-578.00px;width:1200px;text-align:center;">33</div>
<div style="position:absolute;top:1310.000px;font-size:19px;line-height:19px;color:#000;white-space:nowrap;left:49.47px;-webkit-text-stroke:0.25px #000;transform:scaleX(0.8619);transform-origin:0 50%;">1E2</div>
<svg style="position:absolute;left:46px;top:1304px" width="13" height="13"><polygon points="0,0 12.5,0 0,12.5" fill="#4a8a2e"/></svg>
<div style="position:absolute;top:1310.000px;font-size:19px;line-height:19px;color:#000;white-space:nowrap;left:180.12px;-webkit-text-stroke:0.25px #000;transform:scaleX(0.9308);transform-origin:0 50%;">692</div>
<svg style="position:absolute;left:176px;top:1304px" width="13" height="13"><polygon points="0,0 12.5,0 0,12.5" fill="#4a8a2e"/></svg>
<div style="position:absolute;top:1310.000px;font-size:19px;line-height:19px;color:#000;white-space:nowrap;left:321.22px;-webkit-text-stroke:0.25px #000;transform:scaleX(0.9765);transform-origin:0 50%;">Melvin Horton</div>
<div style="position:absolute;top:1310.000px;font-size:19px;line-height:19px;color:#000;white-space:nowrap;left:678.98px;-webkit-text-stroke:0.25px #000;transform:scaleX(0.9323);transform-origin:0 50%;">Digital Advertising Specialist</div>
<div style="position:absolute;top:1310.000px;font-size:19px;line-height:19px;color:#000;white-space:nowrap;left:1117.50px;-webkit-text-stroke:0.25px #000;transform:scaleX(0.8400);transform-origin:0 50%;">USA</div>
<div style="position:absolute;top:1311.000px;font-size:18.5px;line-height:18.5px;color:#000;white-space:nowrap;letter-spacing:0.050px;font-family:'DejaVu Sans','Liberation Sans',sans-serif;left:1247.45px;-webkit-text-stroke:0.2px #000;">MelvinHorton@OurCo.Com</div>
<div style="position:absolute;left:46px;top:1334px;width:1018px;height:28px;background:#e1e8f3;"></div>
<div style="position:absolute;left:1064px;top:1334px;width:554px;height:28px;background:#dde5f0;"></div>
<div style="position:absolute;left:46px;top:1362px;width:1572px;height:2px;background:#a2b5d9;"></div>
<div style="position:absolute;left:0px;top:1362px;width:36px;height:2px;background:linear-gradient(90deg,#fff,#e6e6e6);"></div>
<div style="position:absolute;top:1339.000px;font-size:20px;line-height:20px;color:#606060;white-space:nowrap;left:-578.00px;width:1200px;text-align:center;">34</div>
<div style="position:absolute;top:1340.000px;font-size:19px;line-height:19px;color:#000;white-space:nowrap;left:49.82px;-webkit-text-stroke:0.25px #000;transform:scaleX(0.9308);transform-origin:0 50%;">202</div>
<svg style="position:absolute;left:46px;top:1334px" width="13" height="13"><polygon points="0,0 12.5,0 0,12.5" fill="#4a8a2e"/></svg>
<div style="position:absolute;top:1340.000px;font-size:19px;line-height:19px;color:#000;white-space:nowrap;left:180.36px;-webkit-text-stroke:0.25px #000;transform:scaleX(0.8447);transform-origin:0 50%;">3DC</div>
<div style="position:absolute;top:1340.000px;font-size:19px;line-height:19px;color:#000;white-space:nowrap;left:321.87px;-webkit-text-stroke:0.25px #000;transform:scaleX(0.8770);transform-origin:0 50%;">Glenda Ross</div>
<div style="position:absolute;top:1340.000px;font-size:19px;line-height:19px;color:#000;white-space:nowrap;left:678.98px;-webkit-text-stroke:0.25px #000;transform:scaleX(0.9322);transform-origin:0 50%;">Event Team Recruiter</div>
<div style="position:absolute;top:1340.000px;font-size:19px;line-height:19px;color:#000;white-space:nowrap;left:1117.50px;-webkit-text-stroke:0.25px #000;transform:scaleX(0.8400);transform-origin:0 50%;">USA</div>
<div style="position:absolute;top:1341.000px;font-size:18.5px;line-height:18.5px;color:#000;white-space:nowrap;letter-spacing:0.050px;font-family:'DejaVu Sans','Liberation Sans',sans-serif;left:1248.28px;-webkit-text-stroke:0.2px #000;">GlendaRoss@OurCo.Com</div>
<div style="position:absolute;left:175px;top:1364px;width:2px;height:28px;background:#cdcdcd;"></div>
<div style="position:absolute;left:311px;top:1364px;width:2px;height:28px;background:#cdcdcd;"></div>
<div style="position:absolute;left:674px;top:1364px;width:2px;height:28px;background:#cdcdcd;"></div>
<div style="position:absolute;left:1112px;top:1364px;width:2px;height:28px;background:#cdcdcd;"></div>
<div style="position:absolute;left:1242px;top:1364px;width:2px;height:28px;background:#cdcdcd;"></div>
<div style="position:absolute;left:46px;top:1392px;width:1572px;height:2px;background:#a2b5d9;"></div>
<div style="position:absolute;left:0px;top:1392px;width:36px;height:2px;background:linear-gradient(90deg,#fff,#e6e6e6);"></div>
<div style="position:absolute;top:1369.000px;font-size:20px;line-height:20px;color:#606060;white-space:nowrap;left:-578.00px;width:1200px;text-align:center;">35</div>
<div style="position:absolute;top:1370.000px;font-size:19px;line-height:19px;color:#000;white-space:nowrap;left:49.82px;-webkit-text-stroke:0.25px #000;transform:scaleX(0.9308);transform-origin:0 50%;">204</div>
<svg style="position:absolute;left:46px;top:1364px" width="13" height="13"><polygon points="0,0 12.5,0 0,12.5" fill="#4a8a2e"/></svg>
<div style="position:absolute;top:1370.000px;font-size:19px;line-height:19px;color:#000;white-space:nowrap;left:180.35px;-webkit-text-stroke:0.25px #000;transform:scaleX(0.8610);transform-origin:0 50%;">31C</div>
<div style="position:absolute;top:1370.000px;font-size:19px;line-height:19px;color:#000;white-space:nowrap;left:321.80px;-webkit-text-stroke:0.25px #000;transform:scaleX(0.9455);transform-origin:0 50%;">Guillermo Henry</div>
<div style="position:absolute;top:1370.000px;font-size:19px;line-height:19px;color:#000;white-space:nowrap;left:679.50px;-webkit-text-stroke:0.25px #000;transform:scaleX(0.9596);transform-origin:0 50%;">Air Traffic Controller</div>
<div style="position:absolute;top:1370.000px;font-size:19px;line-height:19px;color:#000;white-space:nowrap;left:1117.50px;-webkit-text-stroke:0.25px #000;transform:scaleX(0.8400);transform-origin:0 50%;">USA</div>
<div style="position:absolute;top:1371.000px;font-size:18.5px;line-height:18.5px;color:#000;white-space:nowrap;letter-spacing:0.050px;font-family:'DejaVu Sans','Liberation Sans',sans-serif;left:1248.28px;-webkit-text-stroke:0.2px #000;">GuillermoHenry@OurCo.Com</div>
<div style="position:absolute;left:46px;top:1394px;width:1018px;height:28px;background:#e1e8f3;"></div>
<div style="position:absolute;left:1064px;top:1394px;width:554px;height:28px;background:#dde5f0;"></div>
<div style="position:absolute;left:46px;top:1422px;width:1572px;height:2px;background:#a2b5d9;"></div>
<div style="position:absolute;left:0px;top:1422px;width:36px;height:2px;background:linear-gradient(90deg,#fff,#e6e6e6);"></div>
<div style="position:absolute;top:1399.000px;font-size:20px;line-height:20px;color:#606060;white-space:nowrap;left:-578.00px;width:1200px;text-align:center;">36</div>
<div style="position:absolute;top:1400.000px;font-size:19px;line-height:19px;color:#000;white-space:nowrap;left:49.82px;-webkit-text-stroke:0.25px #000;transform:scaleX(0.9308);transform-origin:0 50%;">208</div>
<svg style="position:absolute;left:46px;top:1394px" width="13" height="13"><polygon points="0,0 12.5,0 0,12.5" fill="#4a8a2e"/></svg>
<div style="position:absolute;top:1400.000px;font-size:19px;line-height:19px;color:#000;white-space:nowrap;left:180.20px;-webkit-text-stroke:0.25px #000;transform:scaleX(0.8400);transform-origin:0 50%;">6CC</div>
<div style="position:absolute;top:1400.000px;font-size:19px;line-height:19px;color:#000;white-space:nowrap;left:321.34px;-webkit-text-stroke:0.25px #000;transform:scaleX(0.8939);transform-origin:0 50%;">Dallas Gomez</div>
<div style="position:absolute;top:1400.000px;font-size:19px;line-height:19px;color:#000;white-space:nowrap;left:678.94px;-webkit-text-stroke:0.25px #000;transform:scaleX(0.9586);transform-origin:0 50%;">Member Certification Manager</div>
<div style="position:absolute;top:1400.000px;font-size:19px;line-height:19px;color:#000;white-space:nowrap;left:1117.50px;-webkit-text-stroke:0.25px #000;transform:scaleX(0.8400);transform-origin:0 50%;">USA</div>
<div style="position:absolute;top:1401.000px;font-size:18.5px;line-height:18.5px;color:#000;white-space:nowrap;letter-spacing:0.050px;font-family:'DejaVu Sans','Liberation Sans',sans-serif;left:1247.45px;-webkit-text-stroke:0.2px #000;">DallasGomez@OurCo.Com</div>
<div style="position:absolute;left:175px;top:1424px;width:2px;height:28px;background:#cdcdcd;"></div>
<div style="position:absolute;left:311px;top:1424px;width:2px;height:28px;background:#cdcdcd;"></div>
<div style="position:absolute;left:674px;top:1424px;width:2px;height:28px;background:#cdcdcd;"></div>
<div style="position:absolute;left:1112px;top:1424px;width:2px;height:28px;background:#cdcdcd;"></div>
<div style="position:absolute;left:1242px;top:1424px;width:2px;height:28px;background:#cdcdcd;"></div>
<div style="position:absolute;left:46px;top:1452px;width:1572px;height:2px;background:#a2b5d9;"></div>
<div style="position:absolute;left:0px;top:1452px;width:36px;height:2px;background:linear-gradient(90deg,#fff,#e6e6e6);"></div>
<div style="position:absolute;top:1429.000px;font-size:20px;line-height:20px;color:#606060;white-space:nowrap;left:-578.00px;width:1200px;text-align:center;">37</div>
<div style="position:absolute;top:1430.000px;font-size:19px;line-height:19px;color:#000;white-space:nowrap;left:49.88px;-webkit-text-stroke:0.25px #000;transform:scaleX(0.8619);transform-origin:0 50%;">20E</div>
<div style="position:absolute;top:1430.000px;font-size:19px;line-height:19px;color:#000;white-space:nowrap;left:179.64px;-webkit-text-stroke:0.25px #000;transform:scaleX(0.9566);transform-origin:0 50%;">15'6</div>
<div style="position:absolute;top:1430.000px;font-size:19px;line-height:19px;color:#000;white-space:nowrap;left:321.80px;-webkit-text-stroke:0.25px #000;transform:scaleX(0.9158);transform-origin:0 50%;">Andrea Vargas</div>
<div style="position:absolute;top:1430.000px;font-size:19px;line-height:19px;color:#000;white-space:nowrap;left:679.60px;-webkit-text-stroke:0.25px #000;transform:scaleX(0.9302);transform-origin:0 50%;">Quality Assurance Manager</div>
<div style="position:absolute;top:1430.000px;font-size:19px;line-height:19px;color:#000;white-space:nowrap;left:1117.50px;-webkit-text-stroke:0.25px #000;transform:scaleX(0.8400);transform-origin:0 50%;">USA</div>
<div style="position:absolute;top:1431.000px;font-size:18.5px;line-height:18.5px;color:#000;white-space:nowrap;letter-spacing:0.050px;font-family:'DejaVu Sans','Liberation Sans',sans-serif;left:1249.12px;-webkit-text-stroke:0.2px #000;">AndreaVargas@OurCo.Com</div>
<div style="position:absolute;left:46px;top:1454px;width:1018px;height:28px;background:#e1e8f3;"></div>
<div style="position:absolute;left:1064px;top:1454px;width:554px;height:28px;background:#dde5f0;"></div>
<div style="position:absolute;left:46px;top:1482px;width:1572px;height:2px;background:#a2b5d9;"></div>
<div style="position:absolute;left:0px;top:1482px;width:36px;height:2px;background:linear-gradient(90deg,#fff,#e6e6e6);"></div>
<div style="position:absolute;top:1459.000px;font-size:20px;line-height:20px;color:#606060;white-space:nowrap;left:-578.00px;width:1200px;text-align:center;">38</div>
<div style="position:absolute;top:1460.000px;font-size:19px;line-height:19px;color:#000;white-space:nowrap;left:49.83px;-webkit-text-stroke:0.25px #000;transform:scaleX(0.9141);transform-origin:0 50%;">21A</div>
<div style="position:absolute;top:1460.000px;font-size:19px;line-height:19px;color:#000;white-space:nowrap;left:180.32px;-webkit-text-stroke:0.25px #000;transform:scaleX(0.8940);transform-origin:0 50%;">3B4</div>
<div style="position:absolute;top:1460.000px;font-size:19px;line-height:19px;color:#000;white-space:nowrap;left:321.33px;-webkit-text-stroke:0.25px #000;transform:scaleX(0.9002);transform-origin:0 50%;">Loren Roy</div>
<div style="position:absolute;top:1460.000px;font-size:19px;line-height:19px;color:#000;white-space:nowrap;left:679.01px;-webkit-text-stroke:0.25px #000;transform:scaleX(0.9169);transform-origin:0 50%;">Hedge Fund Trader</div>
<div style="position:absolute;top:1460.000px;font-size:19px;line-height:19px;color:#000;white-space:nowrap;left:1117.50px;-webkit-text-stroke:0.25px #000;transform:scaleX(0.8400);transform-origin:0 50%;">USA</div>
<div style="position:absolute;top:1461.000px;font-size:18.5px;line-height:18.5px;color:#000;white-space:nowrap;letter-spacing:0.050px;font-family:'DejaVu Sans','Liberation Sans',sans-serif;left:1247.45px;-webkit-text-stroke:0.2px #000;">LorenRoy@OurCo.Com</div>
<div style="position:absolute;left:175px;top:1484px;width:2px;height:28px;background:#cdcdcd;"></div>
<div style="position:absolute;left:311px;top:1484px;width:2px;height:28px;background:#cdcdcd;"></div>
<div style="position:absolute;left:674px;top:1484px;width:2px;height:28px;background:#cdcdcd;"></div>
<div style="position:absolute;left:1112px;top:1484px;width:2px;height:28px;background:#cdcdcd;"></div>
<div style="position:absolute;left:1242px;top:1484px;width:2px;height:28px;background:#cdcdcd;"></div>
<div style="position:absolute;left:46px;top:1512px;width:1572px;height:2px;background:#a2b5d9;"></div>
<div style="position:absolute;left:0px;top:1512px;width:36px;height:2px;background:linear-gradient(90deg,#fff,#e6e6e6);"></div>
<div style="position:absolute;top:1489.000px;font-size:20px;line-height:20px;color:#606060;white-space:nowrap;left:-578.00px;width:1200px;text-align:center;">39</div>
<div style="position:absolute;top:1490.000px;font-size:19px;line-height:19px;color:#000;white-space:nowrap;left:49.82px;-webkit-text-stroke:0.25px #000;transform:scaleX(0.9308);transform-origin:0 50%;">234</div>
<svg style="position:absolute;left:46px;top:1484px" width="13" height="13"><polygon points="0,0 12.5,0 0,12.5" fill="#4a8a2e"/></svg>
<div style="position:absolute;top:1490.000px;font-size:19px;line-height:19px;color:#000;white-space:nowrap;left:180.20px;-webkit-text-stroke:0.25px #000;transform:scaleX(0.8400);transform-origin:0 50%;">6CC</div>
<div style="position:absolute;top:1490.000px;font-size:19px;line-height:19px;color:#000;white-space:nowrap;left:321.44px;-webkit-text-stroke:0.25px #000;transform:scaleX(0.9407);transform-origin:0 50%;">Timmy Berry</div>
<div style="position:absolute;top:1490.000px;font-size:19px;line-height:19px;color:#000;white-space:nowrap;left:679.62px;-webkit-text-stroke:0.25px #000;transform:scaleX(0.9140);transform-origin:0 50%;">Senior Grants and Contracts Specialist</div>
<div style="position:absolute;top:1490.000px;font-size:19px;line-height:19px;color:#000;white-space:nowrap;left:1117.50px;-webkit-text-stroke:0.25px #000;transform:scaleX(0.8400);transform-origin:0 50%;">USA</div>
<div style="position:absolute;top:1491.000px;font-size:18.5px;line-height:18.5px;color:#000;white-space:nowrap;letter-spacing:0.050px;font-family:'DejaVu Sans','Liberation Sans',sans-serif;left:1249.39px;-webkit-text-stroke:0.2px #000;">TimmyBerry@OurCo.Com</div>
<div style="position:absolute;left:46px;top:1514px;width:1018px;height:28px;background:#e1e8f3;"></div>
<div style="position:absolute;left:1064px;top:1514px;width:554px;height:28px;background:#dde5f0;"></div>
<div style="position:absolute;left:46px;top:1542px;width:1572px;height:2px;background:#a2b5d9;"></div>
<div style="position:absolute;left:0px;top:1542px;width:36px;height:2px;background:linear-gradient(90deg,#fff,#e6e6e6);"></div>
<div style="position:absolute;top:1519.000px;font-size:20px;line-height:20px;color:#606060;white-space:nowrap;left:-578.00px;width:1200px;text-align:center;">40</div>
<div style="position:absolute;top:1520.000px;font-size:19px;line-height:19px;color:#000;white-space:nowrap;left:49.82px;-webkit-text-stroke:0.25px #000;transform:scaleX(0.9308);transform-origin:0 50%;">236</div>
<svg style="position:absolute;left:46px;top:1514px" width="13" height="13"><polygon points="0,0 12.5,0 0,12.5" fill="#4a8a2e"/></svg>
<div style="position:absolute;top:1520.000px;font-size:19px;line-height:19px;color:#000;white-space:nowrap;left:180.35px;-webkit-text-stroke:0.25px #000;transform:scaleX(0.8610);transform-origin:0 50%;">31C</div>
<div style="position:absolute;top:1520.000px;font-size:19px;line-height:19px;color:#000;white-space:nowrap;left:321.94px;-webkit-text-stroke:0.25px #000;transform:scaleX(0.8833);transform-origin:0 50%;">Spencer Rios</div>
<div style="position:absolute;top:1520.000px;font-size:19px;line-height:19px;color:#000;white-space:nowrap;left:679.50px;-webkit-text-stroke:0.25px #000;transform:scaleX(0.9120);transform-origin:0 50%;">Aides Supervisor</div>
<div style="position:absolute;top:1520.000px;font-size:19px;line-height:19px;color:#000;white-space:nowrap;left:1117.50px;-webkit-text-stroke:0.25px #000;transform:scaleX(0.8400);transform-origin:0 50%;">USA</div>
<div style="position:absolute;top:1521.000px;font-size:18.5px;line-height:18.5px;color:#000;white-space:nowrap;letter-spacing:0.050px;font-family:'DejaVu Sans','Liberation Sans',sans-serif;left:1248.10px;-webkit-text-stroke:0.2px #000;">SpencerRios@OurCo.Com</div>
<div style="position:absolute;left:175px;top:1544px;width:2px;height:28px;background:#cdcdcd;"></div>
<div style="position:absolute;left:311px;top:1544px;width:2px;height:28px;background:#cdcdcd;"></div>
<div style="position:absolute;left:674px;top:1544px;width:2px;height:28px;background:#cdcdcd;"></div>
<div style="position:absolute;left:1112px;top:1544px;width:2px;height:28px;background:#cdcdcd;"></div>
<div style="position:absolute;left:1242px;top:1544px;width:2px;height:28px;background:#cdcdcd;"></div>
<div style="position:absolute;left:46px;top:1572px;width:1572px;height:2px;background:#a2b5d9;"></div>
<div style="position:absolute;left:0px;top:1572px;width:36px;height:2px;background:linear-gradient(90deg,#fff,#e6e6e6);"></div>
<div style="position:absolute;top:1549.000px;font-size:20px;line-height:20px;color:#606060;white-space:nowrap;left:-578.00px;width:1200px;text-align:center;">41</div>
<div style="position:absolute;top:1550.000px;font-size:19px;line-height:19px;color:#000;white-space:nowrap;left:49.82px;-webkit-text-stroke:0.25px #000;transform:scaleX(0.9308);transform-origin:0 50%;">240</div>
<svg style="position:absolute;left:46px;top:1544px" width="13" height="13"><polygon points="0,0 12.5,0 0,12.5" fill="#4a8a2e"/></svg>
<div style="position:absolute;top:1550.000px;font-size:19px;line-height:19px;color:#000;white-space:nowrap;left:179.64px;-webkit-text-stroke:0.25px #000;transform:scaleX(0.9566);transform-origin:0 50%;">15'6</div>
<div style="position:absolute;top:1550.000px;font-size:19px;line-height:19px;color:#000;white-space:nowrap;left:321.71px;-webkit-text-stroke:0.25px #000;transform:scaleX(0.9595);transform-origin:0 50%;">Wilbert Boone</div>
<div style="position:absolute;top:1550.000px;font-size:19px;line-height:19px;color:#000;white-space:nowrap;left:679.63px;-webkit-text-stroke:0.25px #000;transform:scaleX(0.9049);transform-origin:0 50%;">Shipping and Receiving Clerk</div>
<div style="position:absolute;top:1550.000px;font-size:19px;line-height:19px;color:#000;white-space:nowrap;left:1117.50px;-webkit-text-stroke:0.25px #000;transform:scaleX(0.8400);transform-origin:0 50%;">USA</div>
<div style="position:absolute;top:1551.000px;font-size:18.5px;line-height:18.5px;color:#000;white-space:nowrap;letter-spacing:0.050px;font-family:'DejaVu Sans','Liberation Sans',sans-serif;left:1248.65px;-webkit-text-stroke:0.2px #000;">WilbertBoone@OurCo.Com</div>
<div style="position:absolute;left:46px;top:1574px;width:1018px;height:28px;background:#e1e8f3;"></div>
<div style="position:absolute;left:1064px;top:1574px;width:554px;height:28px;background:#dde5f0;"></div>
<div style="position:absolute;left:46px;top:1602px;width:1572px;height:2px;background:#a2b5d9;"></div>
<div style="position:absolute;left:0px;top:1602px;width:36px;height:2px;background:linear-gradient(90deg,#fff,#e6e6e6);"></div>
<div style="position:absolute;top:1579.000px;font-size:20px;line-height:20px;color:#606060;white-space:nowrap;left:-578.00px;width:1200px;text-align:center;">42</div>
<div style="position:absolute;top:1580.000px;font-size:19px;line-height:19px;color:#000;white-space:nowrap;left:49.82px;-webkit-text-stroke:0.25px #000;transform:scaleX(0.9308);transform-origin:0 50%;">242</div>
<svg style="position:absolute;left:46px;top:1574px" width="13" height="13"><polygon points="0,0 12.5,0 0,12.5" fill="#4a8a2e"/></svg>
<div style="position:absolute;top:1580.000px;font-size:19px;line-height:19px;color:#000;white-space:nowrap;left:180.20px;-webkit-text-stroke:0.25px #000;transform:scaleX(0.9308);transform-origin:0 50%;">840</div>
<svg style="position:absolute;left:176px;top:1574px" width="13" height="13"><polygon points="0,0 12.5,0 0,12.5" fill="#4a8a2e"/></svg>
<div style="position:absolute;top:1580.000px;font-size:19px;line-height:19px;color:#000;white-space:nowrap;left:322.18px;-webkit-text-stroke:0.25px #000;transform:scaleX(0.9045);transform-origin:0 50%;">Zachary Delgado</div>
<div style="position:absolute;top:1580.000px;font-size:19px;line-height:19px;color:#000;white-space:nowrap;left:679.41px;-webkit-text-stroke:0.25px #000;transform:scaleX(0.9178);transform-origin:0 50%;">Wedding Sales Manager</div>
<div style="position:absolute;top:1580.000px;font-size:19px;line-height:19px;color:#000;white-space:nowrap;left:1117.50px;-webkit-text-stroke:0.25px #000;transform:scaleX(0.8400);transform-origin:0 50%;">USA</div>
<div style="position:absolute;top:1581.000px;font-size:18.5px;line-height:18.5px;color:#000;white-space:nowrap;letter-spacing:0.050px;font-family:'DejaVu Sans','Liberation Sans',sans-serif;left:1248.47px;-webkit-text-stroke:0.2px #000;">ZacharyDelgado@OurCo.Com</div>
<div style="position:absolute;left:175px;top:1604px;width:2px;height:28px;background:#cdcdcd;"></div>
<div style="position:absolute;left:311px;top:1604px;width:2px;height:28px;background:#cdcdcd;"></div>
<div style="position:absolute;left:674px;top:1604px;width:2px;height:28px;background:#cdcdcd;"></div>
<div style="position:absolute;left:1112px;top:1604px;width:2px;height:28px;background:#cdcdcd;"></div>
<div style="position:absolute;left:1242px;top:1604px;width:2px;height:28px;background:#cdcdcd;"></div>
<div style="position:absolute;left:46px;top:1632px;width:1572px;height:2px;background:#a2b5d9;"></div>
<div style="position:absolute;left:0px;top:1632px;width:36px;height:2px;background:linear-gradient(90deg,#fff,#e6e6e6);"></div>
<div style="position:absolute;top:1609.000px;font-size:20px;line-height:20px;color:#606060;white-space:nowrap;left:-578.00px;width:1200px;text-align:center;">43</div>
<div style="position:absolute;top:1610.000px;font-size:19px;line-height:19px;color:#000;white-space:nowrap;left:49.82px;-webkit-text-stroke:0.25px #000;transform:scaleX(0.9308);transform-origin:0 50%;">252</div>
<svg style="position:absolute;left:46px;top:1604px" width="13" height="13"><polygon points="0,0 12.5,0 0,12.5" fill="#4a8a2e"/></svg>
<div style="position:absolute;top:1610.000px;font-size:19px;line-height:19px;color:#000;white-space:nowrap;left:180.20px;-webkit-text-stroke:0.25px #000;transform:scaleX(0.8400);transform-origin:0 50%;">6CC</div>
<div style="position:absolute;top:1610.000px;font-size:19px;line-height:19px;color:#000;white-space:nowrap;left:321.83px;-webkit-text-stroke:0.25px #000;transform:scaleX(0.9147);transform-origin:0 50%;">Gabriel Frazier</div>
<div style="position:absolute;top:1610.000px;font-size:19px;line-height:19px;color:#000;white-space:nowrap;left:679.60px;-webkit-text-stroke:0.25px #000;transform:scaleX(0.9383);transform-origin:0 50%;">Occupational Health Manager</div>
<div style="position:absolute;top:1610.000px;font-size:19px;line-height:19px;color:#000;white-space:nowrap;left:1117.50px;-webkit-text-stroke:0.25px #000;transform:scaleX(0.8400);transform-origin:0 50%;">USA</div>
<div style="position:absolute;top:1611.000px;font-size:18.5px;line-height:18.5px;color:#000;white-space:nowrap;letter-spacing:0.050px;font-family:'DejaVu Sans','Liberation Sans',sans-serif;left:1248.28px;-webkit-text-stroke:0.2px #000;">GabrielFrazier@OurCo.Com</div>
<div style="position:absolute;left:46px;top:1634px;width:1018px;height:28px;background:#e1e8f3;"></div>
<div style="position:absolute;left:1064px;top:1634px;width:554px;height:28px;background:#dde5f0;"></div>
<div style="position:absolute;left:46px;top:1662px;width:1572px;height:2px;background:#a2b5d9;"></div>
<div style="position:absolute;left:0px;top:1662px;width:36px;height:2px;background:linear-gradient(90deg,#fff,#e6e6e6);"></div>
<div style="position:absolute;top:1639.000px;font-size:20px;line-height:20px;color:#606060;white-space:nowrap;left:-578.00px;width:1200px;text-align:center;">44</div>
<div style="position:absolute;top:1640.000px;font-size:19px;line-height:19px;color:#000;white-space:nowrap;left:49.82px;-webkit-text-stroke:0.25px #000;transform:scaleX(0.9308);transform-origin:0 50%;">256</div>
<svg style="position:absolute;left:46px;top:1634px" width="13" height="13"><polygon points="0,0 12.5,0 0,12.5" fill="#4a8a2e"/></svg>
<div style="position:absolute;top:1640.000px;font-size:19px;line-height:19px;color:#000;white-space:nowrap;left:179.76px;-webkit-text-stroke:0.25px #000;transform:scaleX(0.9067);transform-origin:0 50%;">4D0</div>
<div style="position:absolute;top:1640.000px;font-size:19px;line-height:19px;color:#000;white-space:nowrap;left:321.71px;-webkit-text-stroke:0.25px #000;transform:scaleX(0.9234);transform-origin:0 50%;">Valerie Ferguson</div>
<div style="position:absolute;top:1640.000px;font-size:19px;line-height:19px;color:#000;white-space:nowrap;left:679.00px;-webkit-text-stroke:0.25px #000;transform:scaleX(0.9200);transform-origin:0 50%;">Financial Aid Counselor</div>
<div style="position:absolute;top:1640.000px;font-size:19px;line-height:19px;color:#000;white-space:nowrap;left:1117.50px;-webkit-text-stroke:0.25px #000;transform:scaleX(0.8400);transform-origin:0 50%;">USA</div>
<div style="position:absolute;top:1641.000px;font-size:18.5px;line-height:18.5px;color:#000;white-space:nowrap;letter-spacing:0.050px;font-family:'DejaVu Sans','Liberation Sans',sans-serif;left:1249.12px;-webkit-text-stroke:0.2px #000;">ValerieFerguson@OurCo.Com</div>
<div style="position:absolute;left:175px;top:1664px;width:2px;height:28px;background:#cdcdcd;"></div>
<div style="position:absolute;left:311px;top:1664px;width:2px;height:28px;background:#cdcdcd;"></div>
<div style="position:absolute;left:674px;top:1664px;width:2px;height:28px;background:#cdcdcd;"></div>
<div style="position:absolute;left:1112px;top:1664px;width:2px;height:28px;background:#cdcdcd;"></div>
<div style="position:absolute;left:1242px;top:1664px;width:2px;height:28px;background:#cdcdcd;"></div>
<div style="position:absolute;left:46px;top:1692px;width:1572px;height:2px;background:#a2b5d9;"></div>
<div style="position:absolute;left:0px;top:1692px;width:36px;height:2px;background:linear-gradient(90deg,#fff,#e6e6e6);"></div>
<div style="position:absolute;top:1669.000px;font-size:20px;line-height:20px;color:#606060;white-space:nowrap;left:-578.00px;width:1200px;text-align:center;">45</div>
<div style="position:absolute;top:1670.000px;font-size:19px;line-height:19px;color:#000;white-space:nowrap;left:49.82px;-webkit-text-stroke:0.25px #000;transform:scaleX(0.9308);transform-origin:0 50%;">262</div>
<svg style="position:absolute;left:46px;top:1664px" width="13" height="13"><polygon points="0,0 12.5,0 0,12.5" fill="#4a8a2e"/></svg>
<div style="position:absolute;top:1670.000px;font-size:19px;line-height:19px;color:#000;white-space:nowrap;left:179.64px;-webkit-text-stroke:0.25px #000;transform:scaleX(0.9566);transform-origin:0 50%;">15'6</div>
<div style="position:absolute;top:1670.000px;font-size:19px;line-height:19px;color:#000;white-space:nowrap;left:321.33px;-webkit-text-stroke:0.25px #000;transform:scaleX(0.9004);transform-origin:0 50%;">Hilda Parsons</div>
<div style="position:absolute;top:1670.000px;font-size:19px;line-height:19px;color:#000;white-space:nowrap;left:678.79px;-webkit-text-stroke:0.25px #000;transform:scaleX(0.9424);transform-origin:0 50%;">Inventory Control Supervisor</div>
<div style="position:absolute;top:1670.000px;font-size:19px;line-height:19px;color:#000;white-space:nowrap;left:1117.50px;-webkit-text-stroke:0.25px #000;transform:scaleX(0.8400);transform-origin:0 50%;">USA</div>
<div style="position:absolute;top:1671.000px;font-size:18.5px;line-height:18.5px;color:#000;white-space:nowrap;letter-spacing:0.050px;font-family:'DejaVu Sans','Liberation Sans',sans-serif;left:1247.45px;-webkit-text-stroke:0.2px #000;">HildaParsons@OurCo.Com</div>
<div style="position:absolute;left:46px;top:1694px;width:1018px;height:28px;background:#e1e8f3;"></div>
<div style="position:absolute;left:1064px;top:1694px;width:554px;height:28px;background:#dde5f0;"></div>
<div style="position:absolute;left:46px;top:1722px;width:1572px;height:2px;background:#a2b5d9;"></div>
<div style="position:absolute;left:0px;top:1722px;width:36px;height:2px;background:linear-gradient(90deg,#fff,#e6e6e6);"></div>
<div style="position:absolute;top:1699.000px;font-size:20px;line-height:20px;color:#606060;white-space:nowrap;left:-578.00px;width:1200px;text-align:center;">46</div>
<div style="position:absolute;top:1700.000px;font-size:19px;line-height:19px;color:#000;white-space:nowrap;left:49.82px;-webkit-text-stroke:0.25px #000;transform:scaleX(0.9308);transform-origin:0 50%;">266</div>
<svg style="position:absolute;left:46px;top:1694px" width="13" height="13"><polygon points="0,0 12.5,0 0,12.5" fill="#4a8a2e"/></svg>
<div style="position:absolute;top:1700.000px;font-size:19px;line-height:19px;color:#000;white-space:nowrap;left:180.18px;-webkit-text-stroke:0.25px #000;transform:scaleX(0.8619);transform-origin:0 50%;">20E</div>
<div style="position:absolute;top:1700.000px;font-size:19px;line-height:19px;color:#000;white-space:nowrap;left:321.54px;-webkit-text-stroke:0.25px #000;transform:scaleX(0.9078);transform-origin:0 50%;">Jenna Oliver</div>
<div style="position:absolute;top:1700.000px;font-size:19px;line-height:19px;color:#000;white-space:nowrap;left:678.97px;-webkit-text-stroke:0.25px #000;transform:scaleX(0.9439);transform-origin:0 50%;">Litigation Docket Manager</div>
<div style="position:absolute;top:1700.000px;font-size:19px;line-height:19px;color:#000;white-space:nowrap;left:1117.50px;-webkit-text-stroke:0.25px #000;transform:scaleX(0.8400);transform-origin:0 50%;">USA</div>
<div style="position:absolute;top:1701.000px;font-size:18.5px;line-height:18.5px;color:#000;white-space:nowrap;letter-spacing:0.050px;font-family:'DejaVu Sans','Liberation Sans',sans-serif;left:1250.22px;-webkit-text-stroke:0.2px #000;">JennaOliver@OurCo.Com</div>
<div style="position:absolute;left:175px;top:1724px;width:2px;height:28px;background:#cdcdcd;"></div>
<div style="position:absolute;left:311px;top:1724px;width:2px;height:28px;background:#cdcdcd;"></div>
<div style="position:absolute;left:674px;top:1724px;width:2px;height:28px;background:#cdcdcd;"></div>
<div style="position:absolute;left:1112px;top:1724px;width:2px;height:28px;background:#cdcdcd;"></div>
<div style="position:absolute;left:1242px;top:1724px;width:2px;height:28px;background:#cdcdcd;"></div>
<div style="position:absolute;left:46px;top:1752px;width:1572px;height:2px;background:#a2b5d9;"></div>
<div style="position:absolute;left:0px;top:1752px;width:36px;height:2px;background:linear-gradient(90deg,#fff,#e6e6e6);"></div>
<div style="position:absolute;top:1729.000px;font-size:20px;line-height:20px;color:#606060;white-space:nowrap;left:-578.00px;width:1200px;text-align:center;">47</div>
<div style="position:absolute;top:1730.000px;font-size:19px;line-height:19px;color:#000;white-space:nowrap;left:49.83px;-webkit-text-stroke:0.25px #000;transform:scaleX(0.9141);transform-origin:0 50%;">26A</div>
<div style="position:absolute;top:1730.000px;font-size:19px;line-height:19px;color:#000;white-space:nowrap;left:180.36px;-webkit-text-stroke:0.25px #000;transform:scaleX(0.8447);transform-origin:0 50%;">3DC</div>
<div style="position:absolute;top:1730.000px;font-size:19px;line-height:19px;color:#000;white-space:nowrap;left:321.22px;-webkit-text-stroke:0.25px #000;transform:scaleX(0.9709);transform-origin:0 50%;">Marvin Wood</div>
<div style="position:absolute;top:1730.000px;font-size:19px;line-height:19px;color:#000;white-space:nowrap;left:679.53px;-webkit-text-stroke:0.25px #000;transform:scaleX(0.9117);transform-origin:0 50%;">Coder</div>
<div style="position:absolute;top:1730.000px;font-size:19px;line-height:19px;color:#000;white-space:nowrap;left:1117.50px;-webkit-text-stroke:0.25px #000;transform:scaleX(0.8400);transform-origin:0 50%;">USA</div>
<div style="position:absolute;top:1731.000px;font-size:18.5px;line-height:18.5px;color:#000;white-space:nowrap;letter-spacing:0.050px;font-family:'DejaVu Sans','Liberation Sans',sans-serif;left:1247.45px;-webkit-text-stroke:0.2px #000;">MarvinWood@OurCo.Com</div>
<div style="position:absolute;left:46px;top:1754px;width:1018px;height:28px;background:#e1e8f3;"></div>
<div style="position:absolute;left:1064px;top:1754px;width:554px;height:28px;background:#dde5f0;"></div>
<div style="position:absolute;left:46px;top:1782px;width:1572px;height:2px;background:#a2b5d9;"></div>
<div style="position:absolute;left:0px;top:1782px;width:36px;height:2px;background:linear-gradient(90deg,#fff,#e6e6e6);"></div>
<div style="position:absolute;top:1759.000px;font-size:20px;line-height:20px;color:#606060;white-space:nowrap;left:-578.00px;width:1200px;text-align:center;">48</div>
<div style="position:absolute;top:1760.000px;font-size:19px;line-height:19px;color:#000;white-space:nowrap;left:49.82px;-webkit-text-stroke:0.25px #000;transform:scaleX(0.9308);transform-origin:0 50%;">270</div>
<svg style="position:absolute;left:46px;top:1754px" width="13" height="13"><polygon points="0,0 12.5,0 0,12.5" fill="#4a8a2e"/></svg>
<div style="position:absolute;top:1760.000px;font-size:19px;line-height:19px;color:#000;white-space:nowrap;left:179.70px;-webkit-text-stroke:0.25px #000;transform:scaleX(0.9141);transform-origin:0 50%;">1A2</div>
<div style="position:absolute;top:1760.000px;font-size:19px;line-height:19px;color:#000;white-space:nowrap;left:321.25px;-webkit-text-stroke:0.25px #000;transform:scaleX(0.9531);transform-origin:0 50%;">Harold Malone</div>
<div style="position:absolute;top:1760.000px;font-size:19px;line-height:19px;color:#000;white-space:nowrap;left:679.50px;-webkit-text-stroke:0.25px #000;transform:scaleX(0.9472);transform-origin:0 50%;">General Maintenance Worker</div>
<div style="position:absolute;top:1760.000px;font-size:19px;line-height:19px;color:#000;white-space:nowrap;left:1117.50px;-webkit-text-stroke:0.25px #000;transform:scaleX(0.8400);transform-origin:0 50%;">USA</div>
<div style="position:absolute;top:1761.000px;font-size:18.5px;line-height:18.5px;color:#000;white-space:nowrap;letter-spacing:0.050px;font-family:'DejaVu Sans','Liberation Sans',sans-serif;left:1247.45px;-webkit-text-stroke:0.2px #000;">HaroldMalone@OurCo.Com</div>
<div style="position:absolute;left:175px;top:1784px;width:2px;height:28px;background:#cdcdcd;"></div>
<div style="position:absolute;left:311px;top:1784px;width:2px;height:28px;background:#cdcdcd;"></div>
<div style="position:absolute;left:674px;top:1784px;width:2px;height:28px;background:#cdcdcd;"></div>
<div style="position:absolute;left:1112px;top:1784px;width:2px;height:28px;background:#cdcdcd;"></div>
<div style="position:absolute;left:1242px;top:1784px;width:2px;height:28px;background:#cdcdcd;"></div>
<div style="position:absolute;left:46px;top:1812px;width:1572px;height:2px;background:#a2b5d9;"></div>
<div style="position:absolute;left:0px;top:1812px;width:36px;height:2px;background:linear-gradient(90deg,#fff,#e6e6e6);"></div>
<div style="position:absolute;top:1789.000px;font-size:20px;line-height:20px;color:#606060;white-space:nowrap;left:-578.00px;width:1200px;text-align:center;">49</div>
<div style="position:absolute;top:1790.000px;font-size:19px;line-height:19px;color:#000;white-space:nowrap;left:49.82px;-webkit-text-stroke:0.25px #000;transform:scaleX(0.9308);transform-origin:0 50%;">272</div>
<svg style="position:absolute;left:46px;top:1784px" width="13" height="13"><polygon points="0,0 12.5,0 0,12.5" fill="#4a8a2e"/></svg>
<div style="position:absolute;top:1790.000px;font-size:19px;line-height:19px;color:#000;white-space:nowrap;left:180.29px;-webkit-text-stroke:0.25px #000;transform:scaleX(0.9308);transform-origin:0 50%;">322</div>
<svg style="position:absolute;left:176px;top:1784px" width="13" height="13"><polygon points="0,0 12.5,0 0,12.5" fill="#4a8a2e"/></svg>
<div style="position:absolute;top:1790.000px;font-size:19px;line-height:19px;color:#000;white-space:nowrap;left:321.71px;-webkit-text-stroke:0.25px #000;transform:scaleX(0.9831);transform-origin:0 50%;">William Mitchell</div>
<div style="position:absolute;top:1790.000px;font-size:19px;line-height:19px;color:#000;white-space:nowrap;left:679.03px;-webkit-text-stroke:0.25px #000;transform:scaleX(0.9005);transform-origin:0 50%;">Real Estate Associate</div>
<div style="position:absolute;top:1790.000px;font-size:19px;line-height:19px;color:#000;white-space:nowrap;left:1117.50px;-webkit-text-stroke:0.25px #000;transform:scaleX(0.8400);transform-origin:0 50%;">USA</div>
<div style="position:absolute;top:1791.000px;font-size:18.5px;line-height:18.5px;color:#000;white-space:nowrap;letter-spacing:0.050px;font-family:'DejaVu Sans','Liberation Sans',sans-serif;left:1248.65px;-webkit-text-stroke:0.2px #000;">WilliamMitchell@OurCo.Com</div>
<div style="position:absolute;left:46px;top:1814px;width:1018px;height:28px;background:#e1e8f3;"></div>
<div style="position:absolute;left:1064px;top:1814px;width:554px;height:28px;background:#dde5f0;"></div>
<div style="position:absolute;left:46px;top:1842px;width:1572px;height:2px;background:#a2b5d9;"></div>
<div style="position:absolute;left:0px;top:1842px;width:36px;height:2px;background:linear-gradient(90deg,#fff,#e6e6e6);"></div>
<div style="position:absolute;top:1819.000px;font-size:20px;line-height:20px;color:#606060;white-space:nowrap;left:-578.00px;width:1200px;text-align:center;">50</div>
<div style="position:absolute;top:1820.000px;font-size:19px;line-height:19px;color:#000;white-space:nowrap;left:49.82px;-webkit-text-stroke:0.25px #000;transform:scaleX(0.9308);transform-origin:0 50%;">278</div>
<svg style="position:absolute;left:46px;top:1814px" width="13" height="13"><polygon points="0,0 12.5,0 0,12.5" fill="#4a8a2e"/></svg>
<div style="position:absolute;top:1820.000px;font-size:19px;line-height:19px;color:#000;white-space:nowrap;left:180.26px;-webkit-text-stroke:0.25px #000;transform:scaleX(0.8610);transform-origin:0 50%;">82C</div>
<div style="position:absolute;top:1820.000px;font-size:19px;line-height:19px;color:#000;white-space:nowrap;left:321.33px;-webkit-text-stroke:0.25px #000;transform:scaleX(0.9026);transform-origin:0 50%;">Emily Park</div>
<div style="position:absolute;top:1820.000px;font-size:19px;line-height:19px;color:#000;white-space:nowrap;left:679.00px;-webkit-text-stroke:0.25px #000;transform:scaleX(0.9182);transform-origin:0 50%;">Research and Development Engineer</div>
<div style="position:absolute;top:1820.000px;font-size:19px;line-height:19px;color:#000;white-space:nowrap;left:1117.50px;-webkit-text-stroke:0.25px #000;transform:scaleX(0.8400);transform-origin:0 50%;">USA</div>
<div style="position:absolute;top:1821.000px;font-size:18.5px;line-height:18.5px;color:#000;white-space:nowrap;letter-spacing:0.050px;font-family:'DejaVu Sans','Liberation Sans',sans-serif;left:1247.45px;-webkit-text-stroke:0.2px #000;">EmilyPark@OurCo.Com</div>
<div style="position:absolute;left:175px;top:1844px;width:2px;height:28px;background:#cdcdcd;"></div>
<div style="position:absolute;left:311px;top:1844px;width:2px;height:28px;background:#cdcdcd;"></div>
<div style="position:absolute;left:674px;top:1844px;width:2px;height:28px;background:#cdcdcd;"></div>
<div style="position:absolute;left:1112px;top:1844px;width:2px;height:28px;background:#cdcdcd;"></div>
<div style="position:absolute;left:1242px;top:1844px;width:2px;height:28px;background:#cdcdcd;"></div>
<div style="position:absolute;left:46px;top:1872px;width:1572px;height:2px;background:#a2b5d9;"></div>
<div style="position:absolute;left:0px;top:1872px;width:36px;height:2px;background:linear-gradient(90deg,#fff,#e6e6e6);"></div>
<div style="position:absolute;top:1849.000px;font-size:20px;line-height:20px;color:#606060;white-space:nowrap;left:-578.00px;width:1200px;text-align:center;">51</div>
<div style="position:absolute;top:1850.000px;font-size:19px;line-height:19px;color:#000;white-space:nowrap;left:49.82px;-webkit-text-stroke:0.25px #000;transform:scaleX(0.9308);transform-origin:0 50%;">280</div>
<svg style="position:absolute;left:46px;top:1844px" width="13" height="13"><polygon points="0,0 12.5,0 0,12.5" fill="#4a8a2e"/></svg>
<div style="position:absolute;top:1850.000px;font-size:19px;line-height:19px;color:#000;white-space:nowrap;left:179.67px;-webkit-text-stroke:0.25px #000;transform:scaleX(0.8728);transform-origin:0 50%;">F68</div>
<div style="position:absolute;top:1850.000px;font-size:19px;line-height:19px;color:#000;white-space:nowrap;left:321.84px;-webkit-text-stroke:0.25px #000;transform:scaleX(0.9101);transform-origin:0 50%;">Claire Foster</div>
<div style="position:absolute;top:1850.000px;font-size:19px;line-height:19px;color:#000;white-space:nowrap;left:679.00px;-webkit-text-stroke:0.25px #000;transform:scaleX(0.9229);transform-origin:0 50%;">Lawyer</div>
<div style="position:absolute;top:1850.000px;font-size:19px;line-height:19px;color:#000;white-space:nowrap;left:1117.50px;-webkit-text-stroke:0.25px #000;transform:scaleX(0.8400);transform-origin:0 50%;">USA</div>
<div style="position:absolute;top:1851.000px;font-size:18.5px;line-height:18.5px;color:#000;white-space:nowrap;letter-spacing:0.050px;font-family:'DejaVu Sans','Liberation Sans',sans-serif;left:1248.28px;-webkit-text-stroke:0.2px #000;">ClaireFoster@OurCo.Com</div>
<div style="position:absolute;left:46px;top:1874px;width:1018px;height:28px;background:#e1e8f3;"></div>
<div style="position:absolute;left:1064px;top:1874px;width:554px;height:28px;background:#dde5f0;"></div>
<div style="position:absolute;left:46px;top:1902px;width:1572px;height:2px;background:#a2b5d9;"></div>
<div style="position:absolute;left:0px;top:1902px;width:36px;height:2px;background:linear-gradient(90deg,#fff,#e6e6e6);"></div>
<div style="position:absolute;top:1879.000px;font-size:20px;line-height:20px;color:#606060;white-space:nowrap;left:-578.00px;width:1200px;text-align:center;">52</div>
<div style="position:absolute;top:1880.000px;font-size:19px;line-height:19px;color:#000;white-space:nowrap;left:49.82px;-webkit-text-stroke:0.25px #000;transform:scaleX(0.9308);transform-origin:0 50%;">288</div>
<svg style="position:absolute;left:46px;top:1874px" width="13" height="13"><polygon points="0,0 12.5,0 0,12.5" fill="#4a8a2e"/></svg>
<div style="position:absolute;top:1880.000px;font-size:19px;line-height:19px;color:#000;white-space:nowrap;left:179.64px;-webkit-text-stroke:0.25px #000;transform:scaleX(0.9566);transform-origin:0 50%;">15'6</div>
<div style="position:absolute;top:1880.000px;font-size:19px;line-height:19px;color:#000;white-space:nowrap;left:321.80px;-webkit-text-stroke:0.25px #000;transform:scaleX(0.9114);transform-origin:0 50%;">Angelina Garcia</div>
<div style="position:absolute;top:1880.000px;font-size:19px;line-height:19px;color:#000;white-space:nowrap;left:679.50px;-webkit-text-stroke:0.25px #000;transform:scaleX(0.9462);transform-origin:0 50%;">Android Developer</div>
<div style="position:absolute;top:1880.000px;font-size:19px;line-height:19px;color:#000;white-space:nowrap;left:1117.50px;-webkit-text-stroke:0.25px #000;transform:scaleX(0.8400);transform-origin:0 50%;">USA</div>
<div style="position:absolute;top:1881.000px;font-size:18.5px;line-height:18.5px;color:#000;white-space:nowrap;letter-spacing:0.050px;font-family:'DejaVu Sans','Liberation Sans',sans-serif;left:1249.12px;-webkit-text-stroke:0.2px #000;">AngelinaGarcia@OurCo.Com</div>
<div style="position:absolute;left:175px;top:1904px;width:2px;height:28px;background:#cdcdcd;"></div>
<div style="position:absolute;left:311px;top:1904px;width:2px;height:28px;background:#cdcdcd;"></div>
<div style="position:absolute;left:674px;top:1904px;width:2px;height:28px;background:#cdcdcd;"></div>
<div style="position:absolute;left:1112px;top:1904px;width:2px;height:28px;background:#cdcdcd;"></div>
<div style="position:absolute;left:1242px;top:1904px;width:2px;height:28px;background:#cdcdcd;"></div>
<div style="position:absolute;left:46px;top:1932px;width:1572px;height:2px;background:#a2b5d9;"></div>
<div style="position:absolute;left:0px;top:1932px;width:36px;height:2px;background:linear-gradient(90deg,#fff,#e6e6e6);"></div>
<div style="position:absolute;top:1909.000px;font-size:20px;line-height:20px;color:#606060;white-space:nowrap;left:-578.00px;width:1200px;text-align:center;">53</div>
<div style="position:absolute;top:1910.000px;font-size:19px;line-height:19px;color:#000;white-space:nowrap;left:49.83px;-webkit-text-stroke:0.25px #000;transform:scaleX(0.9141);transform-origin:0 50%;">28A</div>
<div style="position:absolute;top:1910.000px;font-size:19px;line-height:19px;color:#000;white-space:nowrap;left:180.36px;-webkit-text-stroke:0.25px #000;transform:scaleX(0.8447);transform-origin:0 50%;">3DC</div>
<div style="position:absolute;top:1910.000px;font-size:19px;line-height:19px;color:#000;white-space:nowrap;left:321.36px;-webkit-text-stroke:0.25px #000;transform:scaleX(0.8848);transform-origin:0 50%;">Lucille Jacobs</div>
<div style="position:absolute;top:1910.000px;font-size:19px;line-height:19px;color:#000;white-space:nowrap;left:679.04px;-webkit-text-stroke:0.25px #000;transform:scaleX(0.8963);transform-origin:0 50%;">Research Engineer</div>
<div style="position:absolute;top:1910.000px;font-size:19px;line-height:19px;color:#000;white-space:nowrap;left:1117.50px;-webkit-text-stroke:0.25px #000;transform:scaleX(0.8400);transform-origin:0 50%;">USA</div>
<div style="position:absolute;top:1911.000px;font-size:18.5px;line-height:18.5px;color:#000;white-space:nowrap;letter-spacing:0.050px;font-family:'DejaVu Sans','Liberation Sans',sans-serif;left:1247.45px;-webkit-text-stroke:0.2px #000;">LucilleJacobs@OurCo.Com</div>
<div style="position:absolute;left:46px;top:1934px;width:1018px;height:28px;background:#e1e8f3;"></div>
<div style="position:absolute;left:1064px;top:1934px;width:554px;height:28px;background:#dde5f0;"></div>
<div style="position:absolute;left:46px;top:1962px;width:1572px;height:2px;background:#a2b5d9;"></div>
<div style="position:absolute;left:0px;top:1962px;width:36px;height:2px;background:linear-gradient(90deg,#fff,#e6e6e6);"></div>
<div style="position:absolute;top:1939.000px;font-size:20px;line-height:20px;color:#606060;white-space:nowrap;left:-578.00px;width:1200px;text-align:center;">54</div>
<div style="position:absolute;top:1940.000px;font-size:19px;line-height:19px;color:#000;white-space:nowrap;left:49.82px;-webkit-text-stroke:0.25px #000;transform:scaleX(0.9308);transform-origin:0 50%;">296</div>
<svg style="position:absolute;left:46px;top:1934px" width="13" height="13"><polygon points="0,0 12.5,0 0,12.5" fill="#4a8a2e"/></svg>
<div style="position:absolute;top:1940.000px;font-size:19px;line-height:19px;color:#000;white-space:nowrap;left:180.20px;-webkit-text-stroke:0.25px #000;transform:scaleX(0.9308);transform-origin:0 50%;">944</div>
<svg style="position:absolute;left:176px;top:1934px" width="13" height="13"><polygon points="0,0 12.5,0 0,12.5" fill="#4a8a2e"/></svg>
<div style="position:absolute;top:1940.000px;font-size:19px;line-height:19px;color:#000;white-space:nowrap;left:321.32px;-webkit-text-stroke:0.25px #000;transform:scaleX(0.9092);transform-origin:0 50%;">Frederick Jimenez</div>
<div style="position:absolute;top:1940.000px;font-size:19px;line-height:19px;color:#000;white-space:nowrap;left:679.62px;-webkit-text-stroke:0.25px #000;transform:scaleX(0.9140);transform-origin:0 50%;">Scheduler</div>
<div style="position:absolute;top:1940.000px;font-size:19px;line-height:19px;color:#000;white-space:nowrap;left:1117.50px;-webkit-text-stroke:0.25px #000;transform:scaleX(0.8400);transform-origin:0 50%;">USA</div>
<div style="position:absolute;top:1941.000px;font-size:18.5px;line-height:18.5px;color:#000;white-space:nowrap;letter-spacing:0.050px;font-family:'DejaVu Sans','Liberation Sans',sans-serif;left:1247.45px;-webkit-text-stroke:0.2px #000;">FrederickJimenez@OurCo.Com</div>
<div style="position:absolute;left:42px;top:820px;width:136px;height:36px;box-sizing:border-box;border:4px solid #3a7148;background:#fff;"></div>
<div style="position:absolute;top:830.000px;font-size:19px;line-height:19px;color:#000;white-space:nowrap;left:49.47px;-webkit-text-stroke:0.25px #000;transform:scaleX(0.8610);transform-origin:0 50%;">13C</div>
<div style="position:absolute;left:168px;top:846px;width:14px;height:14px;background:#fff;"></div>
<div style="position:absolute;left:170px;top:848px;width:10px;height:10px;background:#3a7148;"></div>
<div style="position:absolute;left:1618px;top:270px;width:2px;height:1742px;background:#c8c8c8;"></div>
<div style="position:absolute;left:0px;top:1960px;width:1618px;height:52px;background:linear-gradient(#ebebeb,#f0f0f0 35%,#efefef);"></div>
<div style="position:absolute;left:0px;top:1960px;width:1618px;height:2px;background:#c9c9c9;"></div>
<div style="position:absolute;left:122px;top:1960px;width:156px;height:45px;background:#fff;border-radius:0 0 6px 6px;box-shadow:0 1px 3px rgba(0,0,0,.45);"></div>
<div style="position:absolute;top:1973.000px;font-size:25px;line-height:25px;color:#3a7d4f;white-space:nowrap;font-weight:700;left:159.28px;transform:scaleX(0.9550);transform-origin:0 50%;">Sheet1</div>
<div style="position:absolute;top:1973.000px;font-size:25px;line-height:25px;color:#666;white-space:nowrap;left:317.88px;transform:scaleX(0.9984);transform-origin:0 50%;">Sheet3</div>
<div style="position:absolute;left:436px;top:1963px;width:2px;height:40px;background:#d0d0d0;"></div>
<div style="position:absolute;left:512px;top:1963px;width:2px;height:40px;background:#d0d0d0;"></div>
<svg style="position:absolute;left:0;top:1960px" width="600" height="52"><polygon points="30,27 44,17 44,37" fill="#b8b8b8"/><polygon points="90.5,27 76,17 76,37" fill="#b8b8b8"/><path d="M466,25.5H486M476,15.5V35.5" stroke="#555" stroke-width="3.4" fill="none"/></svg>
<div style="position:absolute;left:1620px;top:270px;width:1800px;height:1742px;background:#fff;"></div>
<div style="position:absolute;top:282.000px;font-size:31.5px;line-height:31.5px;color:#222;white-space:nowrap;left:1652.24px;-webkit-text-stroke:0.4px #222;transform:scaleX(0.9940);transform-origin:0 50%;">OrgChartXL</div>
<svg style="position:absolute;left:3358px;top:281px" width="32" height="32"><circle cx="16" cy="16" r="14" fill="#7a7a7a"/><path d="M9.8,9.8L22.2,22.2M22.2,9.8L9.8,22.2" stroke="#fff" stroke-width="2.6" fill="none"/></svg>
<div style="position:absolute;left:1672px;top:368px;width:192px;height:64px;background:#2f69b5;border-radius:9px;"></div>
<div style="position:absolute;top:385.000px;font-size:29.5px;line-height:29.5px;color:#fff;white-space:nowrap;left:1699.26px;-webkit-text-stroke:0.5px #fff;transform:scaleX(0.9549);transform-origin:0 50%;">View Chart</div>
<div style="position:absolute;left:1656px;top:456px;width:1728px;height:2px;background:#dedede;"></div>
<svg style="position:absolute;left:0;top:0;pointer-events:none" width="3420" height="470" viewBox="0 0 3420 470"><g stroke="#3d3d3d" stroke-width="2.1" fill="none" stroke-linecap="round" stroke-linejoin="round"><ellipse cx="3080" cy="390.5" rx="11.5" ry="5.5"/><path d="M3068.5,390.5V409c0,3 4,5.3 9.5,5.8M3091.5,390.5V400"/></g><circle cx="3089" cy="409" r="9" fill="#3d3d3d"/><path d="M3084.5,409.3l3.2,3.2l6,-6.3" stroke="#fff" stroke-width="2" fill="none"/><g stroke="#3d3d3d" stroke-width="2.1" fill="none" stroke-linecap="round" stroke-linejoin="round"><path d="M3140.4,389.0L3140.8,384.0L3147.2,384.0L3147.6,389.0A11.6,11.6 0 0 1 3151.7,391.3L3151.7,391.3L3156.2,389.2L3159.5,394.8L3155.4,397.7A11.6,11.6 0 0 1 3155.4,402.3L3155.4,402.3L3159.5,405.2L3156.2,410.8L3151.7,408.7A11.6,11.6 0 0 1 3147.6,411.0L3147.6,411.0L3147.2,416.0L3140.8,416.0L3140.4,411.0A11.6,11.6 0 0 1 3136.3,408.7L3136.3,408.7L3131.8,410.8L3128.5,405.2L3132.6,402.3A11.6,11.6 0 0 1 3132.6,397.7L3132.6,397.7L3128.5,394.8L3131.8,389.2L3136.3,391.3A11.6,11.6 0 0 1 3140.4,389.0Z"/><circle cx="3144" cy="400" r="4"/></g><g stroke="#3d3d3d" stroke-width="2.1" fill="none" stroke-linecap="round" stroke-linejoin="round"><circle cx="3208" cy="400" r="15"/></g><text x="3208" y="408.5" font-size="24" fill="#3d3d3d" font-weight="400" text-anchor="middle" font-family="Liberation Sans"  >?</text><g stroke="#3d3d3d" stroke-width="2.1" fill="none" stroke-linecap="round" stroke-linejoin="round"><circle cx="3270" cy="392" r="7.2"/><path d="M3275,403.5H3262.5c-3.5,0 -5.5,2 -5.5,4.5c0,4 4.5,7 13,7.5"/><circle cx="3281" cy="409" r="8.2" fill="#fff"/><path d="M3281,408V413.5M3281,404.3V404.8"/></g><g stroke="#3d3d3d" stroke-width="2.1" fill="none" stroke-linecap="round" stroke-linejoin="round"><path d="M3333,387H3328c-3,0 -5,2 -5,5V408c0,3 2,5 5,5H3344c3,0 5,-2 5,-5V405"/><path d="M3342,385L3353,394.5L3342,404V398.5c-6,-0.3 -10,2 -13,7.5c0.3,-8 4,-14.5 13,-15.5Z"/></g></svg>
<div style="position:absolute;left:3356px;top:336px;width:52px;height:52px;background:#777;border-radius:9px;box-shadow:0 0 3px rgba(0,0,0,.35);"></div>
<div style="position:absolute;top:340.000px;font-size:43px;line-height:43px;color:#f6f6f6;white-space:nowrap;font-family:'Liberation Serif',serif;left:2782.00px;width:1200px;text-align:center;font-style:italic;-webkit-text-stroke:0.7px #f6f6f6;text-shadow:0 1px 2px rgba(0,0,0,.35);">i</div>
<div style="position:absolute;left:1673px;top:491px;width:96px;height:514px;background:#fff;border-radius:6px;box-shadow:0 1px 5px rgba(0,0,0,.28);"></div>
<div style="position:absolute;left:1689px;top:579px;width:64px;height:64px;background:#ececec;border-radius:9px;"></div>
<div style="position:absolute;left:1689px;top:787px;width:64px;height:2px;background:#dcdcdc;"></div>
<svg style="position:absolute;left:0;top:0;pointer-events:none" width="3420" height="1010" viewBox="0 0 3420 1010"><g stroke="#3a3a3a" stroke-width="2.1" fill="none" stroke-linecap="round" stroke-linejoin="round"><path d="M1708,531H1736M1712,539H1732M1716,547H1728" stroke-linecap="butt"/></g><g stroke="#2f66b7" stroke-width="2.1" fill="none"><rect x="1709" y="599.3" width="26" height="26" rx="5"/><path d="M1717.7,599.3V625.3M1726.3,599.3V625.3M1709,608H1735M1709,616.6H1735"/></g><g stroke="#3a3a3a" stroke-width="2.1" fill="none" stroke-linecap="round" stroke-linejoin="round"><path d="M1735,684V676c0,-3 -2,-5 -5,-5H1714c-3,0 -5,2 -5,5V692c0,3 2,5 5,5H1720"/><path d="M1717.7,671V697M1726.3,671V682M1709,679.7H1735M1709,688.3H1722"/></g><circle cx="1731" cy="693" r="9" fill="#3a3a3a"/><path d="M1726,693H1736M1731,688V698" stroke="#fff" stroke-width="2" fill="none"/><g stroke="#bdbdbd" stroke-width="2.1" fill="none" stroke-linecap="round" stroke-linejoin="round"><path d="M1711,733V744H1722"/><path d="M1711.5,743.5c3,-6.5 8,-10.5 14,-10.5c6,0 9.8,4.2 9.8,9.5c0,4 -2,6.5 -5,9.3L1715.5,763"/></g><g stroke="#3a3a3a" stroke-width="2.1" fill="none" stroke-linecap="round" stroke-linejoin="round"><path d="M1709,827.5L1722,815.2L1735,827.5V840c0,1.7 -1.1,2.8 -2.8,2.8H1727.5V832c0,-2 -1.2,-3.2 -3.2,-3.2h-4.6c-2,0 -3.2,1.2 -3.2,3.2V842.8H1711.8c-1.7,0 -2.8,-1.1 -2.8,-2.8Z"/></g><g stroke="#3a3a3a" stroke-width="2.1" fill="none" stroke-linecap="round" stroke-linejoin="round"><circle cx="1722" cy="894" r="15"/><path d="M1714.5,894H1729.5M1722,886.5V901.5"/><circle cx="1722" cy="958" r="15"/><path d="M1714.5,958H1729.5"/></g></svg>
<div style="position:absolute;left:2520px;top:491px;width:847px;height:64px;box-sizing:border-box;border:2px solid #c8c8c8;border-bottom:2.5px solid #4f4f4f;border-radius:7px;background:#fff;"></div>
<svg style="position:absolute;left:2536px;top:500px" width="44" height="44"><circle cx="19.2" cy="21" r="10.2" stroke="#616161" stroke-width="2.1" fill="none"/><path d="M26.6,28.4L33.6,35.2" stroke="#616161" stroke-width="2.1" stroke-linecap="round"/></svg>
<div style="position:absolute;top:513.000px;font-size:24.5px;line-height:24.5px;color:#6f6f6f;white-space:nowrap;left:2581.77px;transform:scaleX(0.9309);transform-origin:0 50%;">Search Chart</div>
<div style="position:absolute;left:2388px;top:743px;width:296px;height:115px;background:linear-gradient(#ffffff 0%,#fcfcfc 10%,#c9c9c9 100%);"><div style="position:absolute;top:3.000px;font-size:26.7px;line-height:26.7px;color:#000;white-space:nowrap;font-weight:700;left:-452.00px;width:1200px;text-align:center;">Nicholas Hill</div><div style="position:absolute;top:29.000px;font-size:26.7px;line-height:26.7px;color:#000;white-space:nowrap;left:-452.00px;width:1200px;text-align:center;text-decoration:underline;text-decoration-thickness:2px;text-underline-offset:1.5px;">CEO</div></div>
<div style="position:absolute;left:1848px;top:923px;width:296px;height:115px;background:linear-gradient(#ffffff 0%,#fcfcfc 10%,#c9c9c9 100%);"><div style="position:absolute;top:3.000px;font-size:26.7px;line-height:26.7px;color:#000;white-space:nowrap;font-weight:700;left:-452.00px;width:1200px;text-align:center;">Ronald Mullins</div><div style="position:absolute;top:29.000px;font-size:26.7px;line-height:26.7px;color:#000;white-space:nowrap;left:-452.00px;width:1200px;text-align:center;text-decoration:underline;text-decoration-thickness:2px;text-underline-offset:1.5px;">Operations Section</div><div style="position:absolute;top:55.000px;font-size:26.7px;line-height:26.7px;color:#000;white-space:nowrap;left:-452.00px;width:1200px;text-align:center;text-decoration:underline;text-decoration-thickness:2px;text-underline-offset:1.5px;">Manager</div></div>
<div style="position:absolute;left:2208px;top:923px;width:296px;height:115px;background:linear-gradient(#ffffff 0%,#fcfcfc 10%,#c9c9c9 100%);"><div style="position:absolute;top:3.000px;font-size:26.7px;line-height:26.7px;color:#000;white-space:nowrap;font-weight:700;left:-452.00px;width:1200px;text-align:center;">Shawna Aguilar</div><div style="position:absolute;top:29.000px;font-size:26.7px;line-height:26.7px;color:#000;white-space:nowrap;left:-452.00px;width:1200px;text-align:center;text-decoration:underline;text-decoration-thickness:2px;text-underline-offset:1.5px;">Product Manager</div></div>
<div style="position:absolute;left:2568px;top:923px;width:296px;height:115px;background:linear-gradient(#ffffff 0%,#fcfcfc 10%,#c9c9c9 100%);"><div style="position:absolute;top:3.000px;font-size:26.7px;line-height:26.7px;color:#000;white-space:nowrap;font-weight:700;left:-452.00px;width:1200px;text-align:center;">Guadalupe Maxwell</div><div style="position:absolute;top:29.000px;font-size:26.7px;line-height:26.7px;color:#000;white-space:nowrap;left:-452.00px;width:1200px;text-align:center;text-decoration:underline;text-decoration-thickness:2px;text-underline-offset:1.5px;">Account Executive</div></div>
<div style="position:absolute;left:2928px;top:923px;width:296px;height:115px;background:linear-gradient(#ffffff 0%,#fcfcfc 10%,#c9c9c9 100%);"><div style="position:absolute;top:3.000px;font-size:26.7px;line-height:26.7px;color:#000;white-space:nowrap;font-weight:700;left:-452.00px;width:1200px;text-align:center;">Claire Foster</div><div style="position:absolute;top:29.000px;font-size:26.7px;line-height:26.7px;color:#000;white-space:nowrap;left:-452.00px;width:1200px;text-align:center;text-decoration:underline;text-decoration-thickness:2px;text-underline-offset:1.5px;">Lawyer</div></div>
<div style="position:absolute;left:1848px;top:1103px;width:296px;height:115px;background:linear-gradient(#ffffff 0%,#fcfcfc 10%,#c9c9c9 100%);"><div style="position:absolute;top:3.000px;font-size:26.7px;line-height:26.7px;color:#000;white-space:nowrap;font-weight:700;left:-452.00px;width:1200px;text-align:center;">Brendan Riley</div><div style="position:absolute;top:29.000px;font-size:26.7px;line-height:26.7px;color:#000;white-space:nowrap;left:-452.00px;width:1200px;text-align:center;text-decoration:underline;text-decoration-thickness:2px;text-underline-offset:1.5px;">Computer and</div><div style="position:absolute;top:55.000px;font-size:26.7px;line-height:26.7px;color:#000;white-space:nowrap;left:-452.00px;width:1200px;text-align:center;text-decoration:underline;text-decoration-thickness:2px;text-underline-offset:1.5px;">Information Systems</div><div style="position:absolute;top:81.000px;font-size:26.7px;line-height:26.7px;color:#000;white-space:nowrap;left:-452.00px;width:1200px;text-align:center;text-decoration:underline;text-decoration-thickness:2px;text-underline-offset:1.5px;">Manager</div></div>
<div style="position:absolute;left:2208px;top:1103px;width:296px;height:115px;background:linear-gradient(#ffffff 0%,#fcfcfc 10%,#c9c9c9 100%);"><div style="position:absolute;top:3.000px;font-size:26.7px;line-height:26.7px;color:#000;white-space:nowrap;font-weight:700;left:-452.00px;width:1200px;text-align:center;">Vicky Gilbert</div><div style="position:absolute;top:29.000px;font-size:26.7px;line-height:26.7px;color:#000;white-space:nowrap;left:-452.00px;width:1200px;text-align:center;text-decoration:underline;text-decoration-thickness:2px;text-underline-offset:1.5px;">Pharmacy Technician</div></div>
<div style="position:absolute;left:2568px;top:1103px;width:296px;height:115px;background:linear-gradient(#ffffff 0%,#fcfcfc 10%,#c9c9c9 100%);"><div style="position:absolute;top:3.000px;font-size:26.7px;line-height:26.7px;color:#000;white-space:nowrap;font-weight:700;left:-452.00px;width:1200px;text-align:center;">Rose Tucker</div><div style="position:absolute;top:29.000px;font-size:26.7px;line-height:26.7px;color:#000;white-space:nowrap;left:-452.00px;width:1200px;text-align:center;text-decoration:underline;text-decoration-thickness:2px;text-underline-offset:1.5px;">Internet Advertising</div><div style="position:absolute;top:55.000px;font-size:26.7px;line-height:26.7px;color:#000;white-space:nowrap;left:-452.00px;width:1200px;text-align:center;text-decoration:underline;text-decoration-thickness:2px;text-underline-offset:1.5px;">Buyer</div></div>
<div style="position:absolute;left:2928px;top:1103px;width:296px;height:115px;background:linear-gradient(#ffffff 0%,#fcfcfc 10%,#c9c9c9 100%);"><div style="position:absolute;top:3.000px;font-size:26.7px;line-height:26.7px;color:#000;white-space:nowrap;font-weight:700;left:-452.00px;width:1200px;text-align:center;">Seth Ruiz</div><div style="position:absolute;top:29.000px;font-size:26.7px;line-height:26.7px;color:#000;white-space:nowrap;left:-452.00px;width:1200px;text-align:center;text-decoration:underline;text-decoration-thickness:2px;text-underline-offset:1.5px;">Advertising Sales</div><div style="position:absolute;top:55.000px;font-size:26.7px;line-height:26.7px;color:#000;white-space:nowrap;left:-452.00px;width:1200px;text-align:center;text-decoration:underline;text-decoration-thickness:2px;text-underline-offset:1.5px;">Director</div></div>
<div style="position:absolute;left:1848px;top:1283px;width:296px;height:115px;background:linear-gradient(#ffffff 0%,#fcfcfc 10%,#c9c9c9 100%);"><div style="position:absolute;top:3.000px;font-size:26.7px;line-height:26.7px;color:#000;white-space:nowrap;font-weight:700;left:-452.00px;width:1200px;text-align:center;">Roberto Ortiz</div><div style="position:absolute;top:29.000px;font-size:26.7px;line-height:26.7px;color:#000;white-space:nowrap;left:-452.00px;width:1200px;text-align:center;text-decoration:underline;text-decoration-thickness:2px;text-underline-offset:1.5px;">Adoption Specialist</div></div>
<div style="position:absolute;left:2208px;top:1283px;width:296px;height:115px;background:linear-gradient(#ffffff 0%,#fcfcfc 10%,#c9c9c9 100%);"><div style="position:absolute;top:3.000px;font-size:26.7px;line-height:26.7px;color:#000;white-space:nowrap;font-weight:700;left:-452.00px;width:1200px;text-align:center;">Alejandro Walton</div><div style="position:absolute;top:29.000px;font-size:26.7px;line-height:26.7px;color:#000;white-space:nowrap;left:-452.00px;width:1200px;text-align:center;text-decoration:underline;text-decoration-thickness:2px;text-underline-offset:1.5px;">News Analysts</div></div>
<div style="position:absolute;left:2568px;top:1283px;width:296px;height:115px;background:linear-gradient(#ffffff 0%,#fcfcfc 10%,#c9c9c9 100%);"><div style="position:absolute;top:3.000px;font-size:26.7px;line-height:26.7px;color:#000;white-space:nowrap;font-weight:700;left:-452.00px;width:1200px;text-align:center;">Lawrence Price</div><div style="position:absolute;top:29.000px;font-size:26.7px;line-height:26.7px;color:#000;white-space:nowrap;left:-452.00px;width:1200px;text-align:center;text-decoration:underline;text-decoration-thickness:2px;text-underline-offset:1.5px;">Engagement</div><div style="position:absolute;top:55.000px;font-size:26.7px;line-height:26.7px;color:#000;white-space:nowrap;left:-452.00px;width:1200px;text-align:center;text-decoration:underline;text-decoration-thickness:2px;text-underline-offset:1.5px;">Coordinator</div></div>
<div style="position:absolute;left:2928px;top:1283px;width:296px;height:115px;background:linear-gradient(#ffffff 0%,#fcfcfc 10%,#c9c9c9 100%);"><div style="position:absolute;top:3.000px;font-size:26.7px;line-height:26.7px;color:#000;white-space:nowrap;font-weight:700;left:-452.00px;width:1200px;text-align:center;">Tina Sanders</div><div style="position:absolute;top:29.000px;font-size:26.7px;line-height:26.7px;color:#000;white-space:nowrap;left:-452.00px;width:1200px;text-align:center;text-decoration:underline;text-decoration-thickness:2px;text-underline-offset:1.5px;">Production Control</div><div style="position:absolute;top:55.000px;font-size:26.7px;line-height:26.7px;color:#000;white-space:nowrap;left:-452.00px;width:1200px;text-align:center;text-decoration:underline;text-decoration-thickness:2px;text-underline-offset:1.5px;">Manager</div></div>
<svg style="position:absolute;left:0;top:0;pointer-events:none" width="3420" height="1400" viewBox="0 0 3420 1400"><g stroke="#0a0aee" stroke-width="2.2" fill="none"><path d="M2536,860V900" /><path d="M2159,900H3241" /><path d="M2160,900V1341.5" /><path d="M2146,980H2160" /><path d="M2146,1160H2160" /><path d="M2146,1340.5H2160" /><path d="M2520,900V1341.5" /><path d="M2506,980H2520" /><path d="M2506,1160H2520" /><path d="M2506,1340.5H2520" /><path d="M2880,900V1341.5" /><path d="M2866,980H2880" /><path d="M2866,1160H2880" /><path d="M2866,1340.5H2880" /><path d="M3240,900V1341.5" /><path d="M3226,980H3240" /><path d="M3226,1160H3240" /><path d="M3226,1340.5H3240" /></g></svg>
<div style="position:absolute;left:0px;top:2012px;width:3420px;height:56px;background:#f4f4f4;"></div>
<div style="position:absolute;left:0px;top:2012px;width:3420px;height:2px;background:#c6c6c6;"></div>
<div style="position:absolute;top:2029.000px;font-size:24px;line-height:24px;color:#6e6e6e;white-space:nowrap;left:47.56px;transform:scaleX(1.0083);transform-origin:0 50%;">Ready</div>
<svg style="position:absolute;left:3100px;top:2014px" width="320" height="54"><defs><filter id="ts" x="-30%" y="-30%" width="160%" height="160%"><feDropShadow dx="0" dy="0.5" stdDeviation="1.6" flood-color="#000" flood-opacity="0.22"/></filter></defs><path d="M18.2,26H34" stroke="#555" stroke-width="2" fill="none"/><rect x="48" y="23" width="199.5" height="8" rx="4" fill="#aaa"/><rect x="130.3" y="12" width="35.7" height="27.8" rx="12" fill="#fff" filter="url(#ts)"/><path d="M262,26H278M270,18V34" stroke="#555" stroke-width="2" fill="none"/></svg>
</div>
</body></html>
